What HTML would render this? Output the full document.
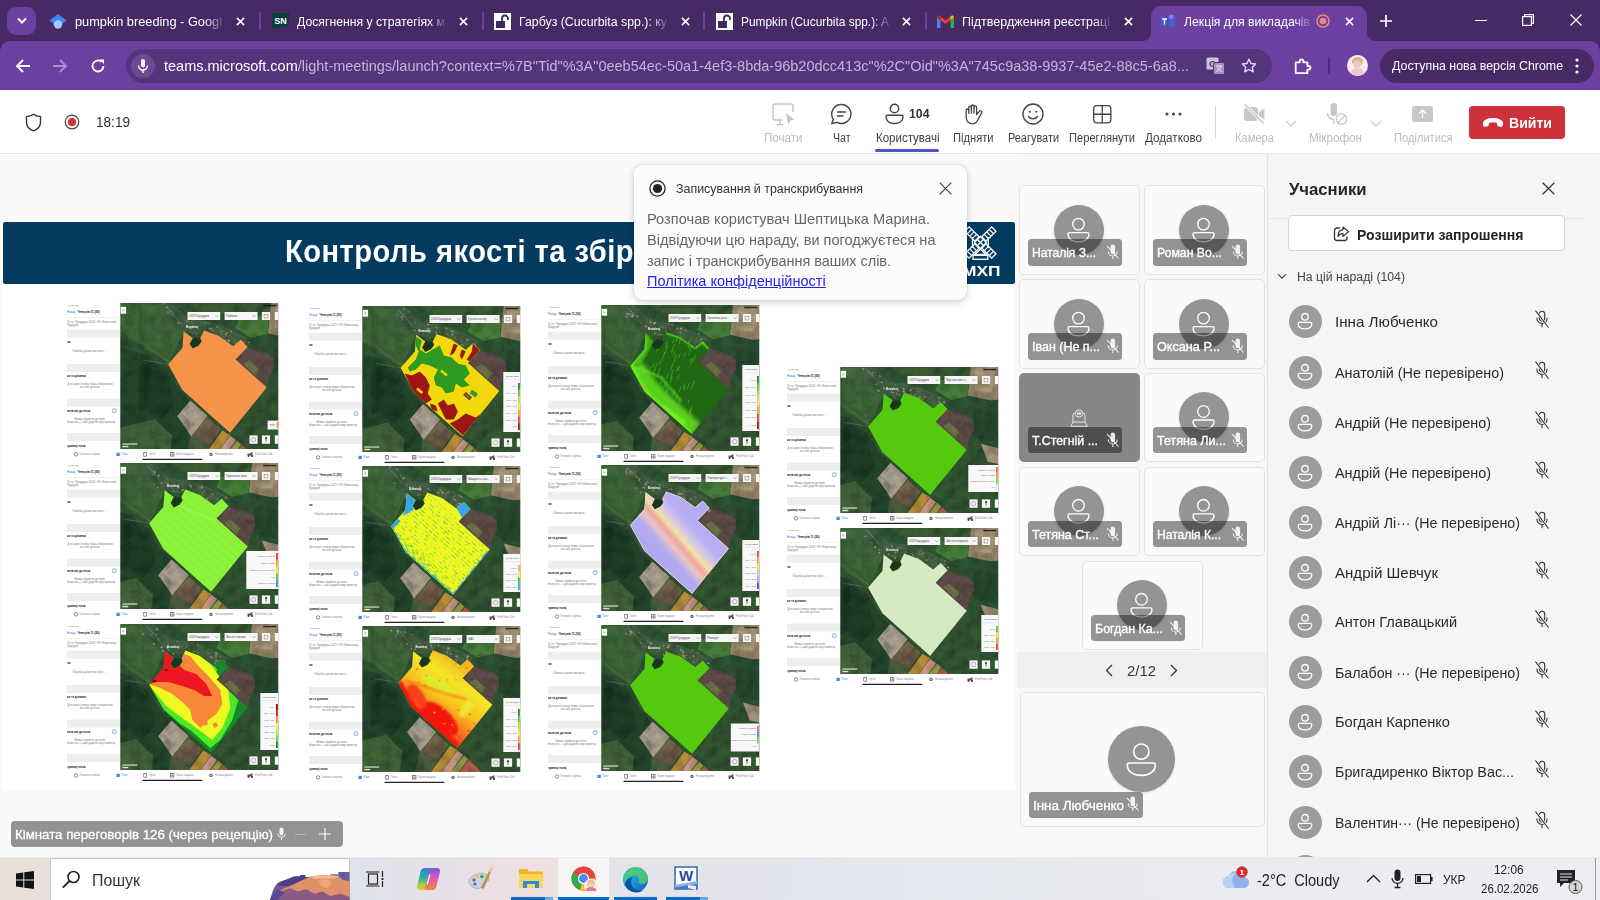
<!DOCTYPE html>
<html lang="uk">
<head>
<meta charset="utf-8">
<title>Лекція для викладачів</title>
<style>
*{box-sizing:border-box;margin:0;padding:0}
html,body{width:1600px;height:900px;overflow:hidden;background:#fafafa;font-family:"Liberation Sans",sans-serif;}
.a{position:absolute}
.t{position:absolute;white-space:nowrap;line-height:1;transform-origin:0 50%}
svg{position:absolute;overflow:visible}
svg svg{overflow:hidden}
/* ---------- browser chrome ---------- */
#tabbar{left:0;top:0;width:1600px;height:60px;background:#472965}
#toolbar{left:0;top:41px;width:1600px;height:50px;background:#6c40a1;border-radius:10px 10px 0 0}
#acttab{left:1151px;top:6px;width:216px;height:37px;background:#6c40a1;border-radius:10px 10px 0 0}
.tabt{font-size:13.5px;color:#fff;top:15px}
.tsep{width:2px;height:18px;top:12px;background:#6c40a1;border-radius:1px}
#omni{left:126px;top:49px;width:1146px;height:34px;border-radius:17px;background:#54347b}
#upd{left:1380px;top:48.5px;width:214px;height:34px;border-radius:17px;background:#472965}
/* ---------- teams header ---------- */
#thead{left:0;top:90px;width:1600px;height:64px;background:#fff;border-bottom:1px solid #e6e6e6}
.hl{font-size:12px;color:#424242;top:132px}
.hl.dim{color:#bdbdbd}
/* ---------- main ---------- */
#slide{left:2px;top:221px;width:1013px;height:569px;background:#fff}
#banner{left:2.5px;top:221.6px;width:1012px;height:62.2px;background:#033a60;border-radius:2px}
#rpanel{left:1267px;top:154px;width:333px;height:704px;background:#f5f5f5;border-left:1px solid #e2e2e2}
/* ---------- taskbar ---------- */
#taskbar{left:0;top:857px;width:1600px;height:43px;background:#e9ebf1}
</style>
<style id="fitcss">
#tb1{transform:scaleX(0.9463)}
#tb2{transform:scaleX(0.9055)}
#tb3{transform:scaleX(0.9133)}
#tb4{transform:scaleX(0.8805)}
#tb5{transform:scaleX(0.9281)}
#tb6{transform:scaleX(0.9042)}
#url{transform:scaleX(0.9667)}
#updt{transform:scaleX(0.9156)}
#h_time{transform:scaleX(0.9701)}
#h1{transform:scaleX(0.9648)}
#h2{transform:scaleX(0.8791)}
#h3{transform:scaleX(0.9585)}
#h3n{transform:scaleX(0.9446)}
#h4{transform:scaleX(0.9284)}
#h5{transform:scaleX(0.9097)}
#h6{transform:scaleX(0.9284)}
#h7{transform:scaleX(0.9733)}
#h8{transform:scaleX(0.9300)}
#h9{transform:scaleX(0.9736)}
#h10{transform:scaleX(0.9270)}
#h_leave{transform:scaleX(0.9380)}
#rp_title{transform:scaleX(1.0418)}
#rp_btn{transform:scaleX(1.0044)}
#rp_sec{transform:scaleX(1.0196)}
#rp_n0{transform:scaleX(1.0103)}
#rp_n1{transform:scaleX(0.9562)}
#rp_n2{transform:scaleX(0.9608)}
#rp_n3{transform:scaleX(0.9608)}
#rp_n4{transform:scaleX(0.9502)}
#rp_n5{transform:scaleX(1.0046)}
#rp_n6{transform:scaleX(0.9680)}
#rp_n7{transform:scaleX(0.9491)}
#rp_n8{transform:scaleX(0.9764)}
#rp_n9{transform:scaleX(0.9553)}
#rp_n10{transform:scaleX(0.9366)}
#tl0{transform:scaleX(0.9250)}
#tl1{transform:scaleX(0.9416)}
#tl2{transform:scaleX(0.9601)}
#tl3{transform:scaleX(0.9730)}
#tl4{transform:scaleX(0.9557)}
#tl5{transform:scaleX(0.9629)}
#tl6{transform:scaleX(0.9604)}
#tl7{transform:scaleX(0.9288)}
#tl8{transform:scaleX(0.9554)}
#pager{transform:scaleX(0.9930)}
#tlbig{transform:scaleX(1.0299)}
#tk_search{transform:scaleX(0.9366)}
#tk_w{transform:scaleX(0.9078)}
#tk_lang{transform:scaleX(0.9945)}
#tk_time{transform:scaleX(0.9431)}
#tk_date{transform:scaleX(0.9191)}
#rc_t{transform:scaleX(1.0196)}
#pp_t{transform:scaleX(0.9561)}
#pp_l1{transform:scaleX(0.9750)}
#pp_l2{transform:scaleX(0.9712)}
#pp_l3{transform:scaleX(0.9598)}
#pp_l4{transform:scaleX(0.9682)}
#sl_title{transform:scaleX(0.9395)}
#sl_title2{transform:scaleX(0.9317)}
#sl_logo{transform:scaleX(1.1195)}
</style>

</head>
<body>
<!-- ================= BROWSER CHROME ================= -->
<div class="a" id="tabbar"></div>
<div class="a" id="acttab"></div>
<div class="a" id="toolbar"></div>
<div class="a" id="omni"></div>
<div class="a" id="upd"></div>
<!-- tab search button -->
<div class="a" style="left:7px;top:7px;width:28.5px;height:28px;border-radius:9px;background:#6c40a1"></div>
<svg style="left:15px;top:15px" width="14" height="12" viewBox="0 0 14 12"><path d="M3 3.5 L7 7.5 L11 3.5" fill="none" stroke="#fff" stroke-width="2"/></svg>
<!-- tab 1 -->
<svg style="left:49px;top:13px" width="18" height="18" viewBox="0 0 18 18"><path d="M9 1 L17.5 7.5 L9 14 L0.5 7.5Z" fill="#4285f4"/><circle cx="9" cy="11.5" r="4.2" fill="#a8c7fa"/></svg>
<div class="t tabt" id="tb1" style="left:75px">pumpkin breeding - Googl</div>
<svg class="tx" style="left:235.5px;top:16.5px" width="9" height="9" viewBox="0 0 10 10"><path d="M1 1L9 9M9 1L1 9" stroke="#fff" stroke-width="1.7"/></svg>
<div class="a tsep" style="left:259px"></div>
<!-- tab 2 -->
<svg style="left:272px;top:13px" width="17" height="16" viewBox="0 0 17 16"><path d="M0 0H17V13L0 16Z" fill="#0f3b3f"/><text x="8.5" y="11" font-size="9" font-weight="700" fill="#fff" text-anchor="middle" font-family="Liberation Sans, sans-serif">SN</text></svg>
<div class="t tabt" id="tb2" style="left:297px">Досягнення у стратегіях м</div>
<svg class="tx" style="left:458.5px;top:16.5px" width="9" height="9" viewBox="0 0 10 10"><path d="M1 1L9 9M9 1L1 9" stroke="#fff" stroke-width="1.7"/></svg>
<div class="a tsep" style="left:482px"></div>
<!-- tab 3 -->
<svg style="left:494px;top:13px" width="17" height="17" viewBox="0 0 17 17"><rect x="0" y="0" width="17" height="17" fill="#fff"/><rect x="2" y="8" width="9" height="7" fill="#3a2a57"/><path d="M8 8V5.5A3 3 0 0 1 14 5.500V7" fill="none" stroke="#3a2a57" stroke-width="1.8"/></svg>
<div class="t tabt" id="tb3" style="left:519px">Гарбуз (Cucurbita spp.): ку</div>
<svg class="tx" style="left:680.5px;top:16.5px" width="9" height="9" viewBox="0 0 10 10"><path d="M1 1L9 9M9 1L1 9" stroke="#fff" stroke-width="1.7"/></svg>
<div class="a tsep" style="left:703px"></div>
<!-- tab 4 -->
<svg style="left:716px;top:13px" width="17" height="17" viewBox="0 0 17 17"><rect x="0" y="0" width="17" height="17" fill="#fff"/><rect x="2" y="8" width="9" height="7" fill="#3a2a57"/><path d="M8 8V5.5A3 3 0 0 1 14 5.500V7" fill="none" stroke="#3a2a57" stroke-width="1.8"/></svg>
<div class="t tabt" id="tb4" style="left:741px">Pumpkin (Cucurbita spp.): A</div>
<svg class="tx" style="left:901.5px;top:16.5px" width="9" height="9" viewBox="0 0 10 10"><path d="M1 1L9 9M9 1L1 9" stroke="#fff" stroke-width="1.7"/></svg>
<div class="a tsep" style="left:925px"></div>
<!-- tab 5 gmail -->
<svg style="left:937px;top:15px" width="17" height="13" viewBox="0 0 17 13"><path d="M0 2V13H3.500V5.500Z" fill="#4285f4"/><path d="M17 2V13H13.500V5.500Z" fill="#34a853"/><path d="M0 2 L1.800 0.300 L8.500 5.500 L15.200 0.300 L17 2 L8.500 9Z" fill="#ea4335"/><path d="M13.500 5.500L17 2 15.200 0.300 13.500 1.600Z" fill="#fbbc04"/><path d="M3.500 5.500L0 2 1.800 0.300 3.500 1.600Z" fill="#c5221f"/></svg>
<div class="t tabt" id="tb5" style="left:962px">Підтвердження реєстраці</div>
<svg class="tx" style="left:1123.5px;top:16.5px" width="9" height="9" viewBox="0 0 10 10"><path d="M1 1L9 9M9 1L1 9" stroke="#fff" stroke-width="1.7"/></svg>
<!-- active tab -->
<svg style="left:1159px;top:13px" width="18" height="17" viewBox="0 0 18 17"><circle cx="12.500" cy="4" r="2.600" fill="#7b83eb"/><rect x="8" y="6" width="8.500" height="8" rx="2" fill="#5059c9"/><circle cx="15.500" cy="5" r="1.700" fill="#5059c9"/><rect x="0.500" y="3.500" width="10" height="10" rx="1.500" fill="#4b53bc"/><path d="M3 6H8M5.500 6V11.500" stroke="#fff" stroke-width="1.400"/></svg>
<div class="t tabt" id="tb6" style="left:1184px">Лекція для викладачів</div>
<svg style="left:1316px;top:14px" width="14" height="14" viewBox="0 0 14 14"><circle cx="7" cy="7" r="6" fill="none" stroke="#f08a80" stroke-width="1.500"/><circle cx="7" cy="7" r="3.300" fill="#f08a80"/></svg>
<svg class="tx" style="left:1344.5px;top:16.5px" width="9" height="9" viewBox="0 0 10 10"><path d="M1 1L9 9M9 1L1 9" stroke="#fff" stroke-width="1.700"/></svg>
<!-- new tab + window controls -->
<svg style="left:1380px;top:15px" width="12" height="12" viewBox="0 0 12 12"><path d="M6 0V12M0 6H12" stroke="#fff" stroke-width="1.700"/></svg>
<svg style="left:1475px;top:20px" width="12" height="2" viewBox="0 0 12 2"><path d="M0 0.500H12" stroke="#fff" stroke-width="1"/></svg>
<svg style="left:1522px;top:14px" width="12" height="12" viewBox="0 0 12 12"><rect x="0.600" y="2.600" width="8.800" height="8.800" fill="none" stroke="#fff" stroke-width="1.200"/><path d="M2.600 2.600V0.600H11.400V9.400H9.400" fill="none" stroke="#fff" stroke-width="1.200"/></svg>
<svg style="left:1570px;top:14px" width="12" height="12" viewBox="0 0 12 12"><path d="M0.500 0.500L11.500 11.500M11.500 0.500L0.500 11.500" stroke="#fff" stroke-width="1.200"/></svg>
<!-- fade masks on tab titles -->
<div class="a" style="left:205px;top:10px;width:20px;height:24px;background:linear-gradient(90deg,rgba(71,41,101,0),#472965)"></div>
<div class="a" style="left:428px;top:10px;width:20px;height:24px;background:linear-gradient(90deg,rgba(71,41,101,0),#472965)"></div>
<div class="a" style="left:650px;top:10px;width:20px;height:24px;background:linear-gradient(90deg,rgba(71,41,101,0),#472965)"></div>
<div class="a" style="left:872px;top:10px;width:20px;height:24px;background:linear-gradient(90deg,rgba(71,41,101,0),#472965)"></div>
<div class="a" style="left:1093px;top:10px;width:20px;height:24px;background:linear-gradient(90deg,rgba(71,41,101,0),#472965)"></div>
<div class="a" style="left:1293px;top:10px;width:20px;height:24px;background:linear-gradient(90deg,rgba(108,64,161,0),#6c40a1)"></div>
<div class="a" style="left:1143px;top:33px;width:8px;height:8px;background:radial-gradient(circle at 0 0,rgba(108,64,161,0) 7.500px,#6c40a1 8.200px)"></div>
<div class="a" style="left:1367px;top:33px;width:8px;height:8px;background:radial-gradient(circle at 100% 0,rgba(108,64,161,0) 7.500px,#6c40a1 8.200px)"></div>

<!-- nav icons -->
<svg style="left:15px;top:58px" width="16" height="16" viewBox="0 0 16 16"><path d="M15 8H2M8 2L2 8L8 14" fill="none" stroke="#fff" stroke-width="1.800"/></svg>
<svg style="left:52px;top:58px" width="16" height="16" viewBox="0 0 16 16"><path d="M1 8H14M8 2L14 8L8 14" fill="none" stroke="#a88fc9" stroke-width="1.800"/></svg>
<svg style="left:90px;top:58px" width="16" height="16" viewBox="0 0 16 16"><path d="M13.500 8A5.500 5.500 0 1 1 11.600 3.800" fill="none" stroke="#fff" stroke-width="1.800"/><path d="M9.500 1.500H14V6Z" fill="#fff"/></svg>
<!-- omnibox mic chip -->
<div class="a" style="left:131px;top:54px;width:24px;height:24px;border-radius:12px;background:#6b4a93"></div>
<svg style="left:137px;top:58px" width="12" height="16" viewBox="0 0 12 16"><rect x="4" y="1" width="4" height="8.500" rx="2" fill="#fff"/><path d="M1.500 7.500A4.500 4.500 0 0 0 10.500 7.500M6 12V15" fill="none" stroke="#fff" stroke-width="1.400"/></svg>
<div class="t" id="url" style="left:164px;top:58px;font-size:15px;color:#fff">teams.microsoft.com<span style="color:#c5b3dc">/light-meetings/launch?context=%7B"Tid"%3A"0eeb54ec-50a1-4ef3-8bda-96b20dcc413c"%2C"Oid"%3A"745c9a38-9937-45e2-88c5-6a8...</span></div>
<!-- translate icon -->
<svg style="left:1206px;top:57px" width="19" height="18" viewBox="0 0 19 18"><rect x="0.500" y="0.500" width="12" height="12" rx="1.500" fill="#cdc2de"/><text x="6.500" y="10" font-size="9" font-weight="700" fill="#54347b" text-anchor="middle" font-family="Liberation Sans, sans-serif">G</text><rect x="7.500" y="5.500" width="11" height="12" rx="1.500" fill="#a593c2" stroke="#54347b" stroke-width="1"/><path d="M10 9H16M13 8V9M15 9C14.500 12 12 14 10.500 14.500M11.500 10.500C12.500 13 14.500 14 16 14.500" fill="none" stroke="#e9e0f5" stroke-width="1"/></svg>
<!-- star -->
<svg style="left:1241px;top:58px" width="16" height="15" viewBox="0 0 18 17"><path d="M9 1.300L11.300 6.200L16.600 6.800L12.700 10.400L13.800 15.700L9 13L4.200 15.700L5.300 10.400L1.400 6.800L6.700 6.200Z" fill="none" stroke="#e4dbf0" stroke-width="1.500" stroke-linejoin="round"/></svg>
<!-- extensions -->
<svg style="left:1293px;top:56.500px" width="18" height="18" viewBox="0 0 20 20"><path d="M3 6H7.500V4.700A2 2 0 0 1 11.500 4.700V6H16V10H17.300A2 2 0 0 1 17.300 14H16V18H3Z" fill="none" stroke="#fff" stroke-width="2" stroke-linejoin="round"/></svg>
<div class="a" style="left:1328px;top:57px;width:2px;height:17px;background:#4c2e74;border-radius:1px"></div>
<!-- avatar -->
<div class="a" style="left:1346.500px;top:55px;width:21px;height:21px;border-radius:50%;background:#f6f1ef;overflow:hidden"><div class="a" style="left:5px;top:2px;width:11px;height:9px;border-radius:50%;background:#d9b383"></div><div class="a" style="left:6.500px;top:4.500px;width:8px;height:8px;border-radius:50%;background:#efc9b8"></div><div class="a" style="left:3px;top:12.500px;width:15px;height:11px;border-radius:7px 7px 0 0;background:#efc6d3"></div></div>
<div class="t" id="updt" style="left:1392px;top:59px;font-size:13.500px;color:#fff">Доступна нова версія Chrome</div>
<svg style="left:1575px;top:57px" width="4" height="18" viewBox="0 0 4 18"><circle cx="2" cy="3" r="1.600" fill="#fff"/><circle cx="2" cy="9" r="1.600" fill="#fff"/><circle cx="2" cy="15" r="1.600" fill="#fff"/></svg>

<!-- ================= TEAMS HEADER ================= -->
<div class="a" id="thead"></div>
<!-- left status -->
<svg style="left:25px;top:113px" width="17" height="19" viewBox="0 0 17 19"><path d="M8.500 1.200C6.500 2.800 4 3.500 1.500 3.600V9C1.500 13.500 4.500 16.500 8.500 17.800C12.500 16.500 15.500 13.500 15.500 9V3.600C13 3.500 10.500 2.800 8.500 1.200Z" fill="none" stroke="#333" stroke-width="1.400" stroke-linejoin="round"/></svg>
<svg style="left:64px;top:114px" width="16" height="16" viewBox="0 0 16 16"><circle cx="8" cy="8" r="6.800" fill="none" stroke="#444" stroke-width="1.200"/><circle cx="8" cy="8" r="4.200" fill="#d13438"/></svg>
<div class="t" id="h_time" style="left:96px;top:115px;font-size:14px;color:#333">18:19</div>
<!-- Почати -->
<svg style="left:772px;top:103px" width="24" height="23" viewBox="0 0 24 23"><path d="M11 17H3A2 2 0 0 1 1 15V3A2 2 0 0 1 3 1H19A2 2 0 0 1 21 3V9" fill="none" stroke="#c4c4c4" stroke-width="1.400"/><path d="M5 21.500H11M8 17.500V21" stroke="#c4c4c4" stroke-width="1.400"/><path d="M14 10L22.500 17L18.300 17.500L16.300 21.500Z" fill="#c4c4c4"/></svg>
<div class="t hl dim" id="h1" style="left:763.500px">Почати</div>
<!-- Чат -->
<svg style="left:830px;top:103px" width="23" height="23" viewBox="0 0 23 23"><path d="M11.500 1.500A9.500 9.500 0 1 1 6.800 19.300L1.800 20.700L3.300 16.200A9.500 9.500 0 0 1 11.500 1.500Z" fill="none" stroke="#424242" stroke-width="1.400" stroke-linejoin="round"/><path d="M7.500 9H15.500M7.500 13H13" stroke="#424242" stroke-width="1.400" stroke-linecap="round"/></svg>
<div class="t hl" id="h2" style="left:832.500px">Чат</div>
<!-- Користувачі -->
<svg style="left:885px;top:103px" width="19" height="22" viewBox="0 0 19 22"><circle cx="9.500" cy="5.500" r="4.200" fill="none" stroke="#424242" stroke-width="1.400"/><path d="M1 13.800A1.500 1.500 0 0 1 2.500 12.300H16.500A1.500 1.500 0 0 1 18 13.800C18 18 14.500 20.500 9.500 20.500S1 18 1 13.800Z" fill="none" stroke="#424242" stroke-width="1.400"/></svg>
<div class="t" id="h3n" style="left:909px;top:107px;font-size:13px;font-weight:700;color:#333">104</div>
<div class="t hl" id="h3" style="left:875.500px">Користувачі</div>
<div class="a" style="left:875px;top:149px;width:64px;height:3px;border-radius:1.500px;background:#4f52c9"></div>
<!-- Підняти -->
<svg style="left:964.500px;top:103.500px" width="18" height="21" viewBox="0 0 18 21"><path d="M1.200 13V6.300A1.300 1.300 0 0 1 3.800 6.300V3.400A1.300 1.300 0 0 1 6.400 3.400V2.300A1.300 1.300 0 0 1 9 2.300V3.200A1.300 1.300 0 0 1 11.600 3.200V10.500L14.300 7.300A1.400 1.400 0 0 1 16.600 8.900L12.500 16.500C11.500 18.600 9.800 19.800 7.300 19.800C3.800 19.800 1.200 17.200 1.200 13Z" fill="none" stroke="#424242" stroke-width="1.300" stroke-linejoin="round"/><path d="M3.800 6.300V10M6.400 3.400V9.500M9 3V9.500" stroke="#424242" stroke-width="1.300"/></svg>
<div class="t hl" id="h4" style="left:953px">Підняти</div>
<!-- Реагувати -->
<svg style="left:1022px;top:103px" width="22" height="22" viewBox="0 0 22 22"><circle cx="11" cy="11" r="10" fill="none" stroke="#424242" stroke-width="1.400"/><circle cx="7.700" cy="8.700" r="1.050" fill="#424242"/><circle cx="14.300" cy="8.700" r="1.050" fill="#424242"/><path d="M6.500 13.500C8.500 16.500 13.500 16.500 15.500 13.500" fill="none" stroke="#424242" stroke-width="1.400" stroke-linecap="round"/></svg>
<div class="t hl" id="h5" style="left:1007.500px">Реагувати</div>
<!-- Переглянути -->
<svg style="left:1093px;top:105px" width="18.500" height="18.500" viewBox="0 0 20 20"><rect x="0.700" y="0.700" width="18.600" height="18.600" rx="3.500" fill="none" stroke="#424242" stroke-width="1.400"/><path d="M10 0.700V19.300M0.700 10H19.300" stroke="#424242" stroke-width="1.400"/></svg>
<div class="t hl" id="h6" style="left:1069px">Переглянути</div>
<!-- Додатково -->
<svg style="left:1165px;top:112px" width="17" height="4" viewBox="0 0 17 4"><circle cx="2" cy="2" r="1.500" fill="#424242"/><circle cx="8.500" cy="2" r="1.500" fill="#424242"/><circle cx="15" cy="2" r="1.500" fill="#424242"/></svg>
<div class="t hl" id="h7" style="left:1145px">Додатково</div>
<div class="a" style="left:1215px;top:106px;width:1px;height:33px;background:#d6d6d6"></div>
<!-- Камера -->
<svg style="left:1243px;top:103px" width="23" height="22" viewBox="0 0 23 22"><rect x="1" y="4" width="14" height="14" rx="3" fill="#c8c8c8"/><path d="M16 9L21.500 5.500V16.500L16 13Z" fill="#c8c8c8"/><path d="M1.500 1L21 21" stroke="#fff" stroke-width="3.200"/><path d="M1.500 1L21 21" stroke="#c8c8c8" stroke-width="1.300"/></svg>
<div class="t hl dim" id="h8" style="left:1234.500px">Камера</div>
<svg style="left:1285px;top:120px" width="12" height="7" viewBox="0 0 12 7"><path d="M1 1L6 6L11 1" fill="none" stroke="#c8c8c8" stroke-width="1.200"/></svg>
<!-- Мікрофон -->
<svg style="left:1326px;top:102px" width="23" height="24" viewBox="0 0 23 24"><rect x="4.500" y="1" width="6.500" height="13" rx="3.250" fill="#c8c8c8"/><path d="M1.500 11A6.200 6.200 0 0 0 8 17.500M7.800 17.500V22" fill="none" stroke="#c8c8c8" stroke-width="1.300"/><circle cx="15.500" cy="17" r="5.200" fill="#fff" stroke="#c8c8c8" stroke-width="1.300"/><path d="M12 20.500L19 13.500" stroke="#c8c8c8" stroke-width="1.300"/></svg>
<div class="t hl dim" id="h9" style="left:1309px">Мікрофон</div>
<svg style="left:1370px;top:120px" width="12" height="7" viewBox="0 0 12 7"><path d="M1 1L6 6L11 1" fill="none" stroke="#c8c8c8" stroke-width="1.200"/></svg>
<!-- Поділитися -->
<svg style="left:1412px;top:106px" width="21" height="16" viewBox="0 0 21 16"><rect x="0" y="0" width="21" height="16" rx="2.500" fill="#c8c8c8"/><path d="M10.500 12V4.500M7 7.500L10.500 4L14 7.500" fill="none" stroke="#fff" stroke-width="1.300"/></svg>
<div class="t hl dim" id="h10" style="left:1393.500px">Поділитися</div>
<!-- Вийти -->
<div class="a" style="left:1469px;top:106px;width:96px;height:33px;border-radius:4px;background:#cf313b"></div>
<svg style="left:1482px;top:117px" width="22" height="11" viewBox="0 0 22 11"><path d="M11 1C6 1 1.500 3 1 5.500C0.700 7.300 1 9 2 9.500C3 10 5.500 9.500 6.300 9C7 8.500 6.500 6.500 7.300 6C8.300 5.400 13.700 5.400 14.700 6C15.500 6.500 15 8.500 15.700 9C16.500 9.500 19 10 20 9.500C21 9 21.300 7.300 21 5.500C20.500 3 16 1 11 1Z" fill="#fff"/></svg>
<div class="t" id="h_leave" style="left:1509px;top:115px;font-size:15px;font-weight:700;color:#fff">Вийти</div>

<!-- ================= MAIN ================= -->
<div class="a" id="slide"></div>
<div class="a" id="banner"></div>
<div class="t" id="sl_title" style="left:285px;top:236px;font-size:31px;font-weight:700;color:#fff;letter-spacing:.5px">Контроль якості та збір</div>
<div class="t" id="sl_title2" style="left:641px;top:236px;font-size:31px;font-weight:700;color:#fff;letter-spacing:.5px">даних</div>
<svg style="left:962px;top:224px" width="40" height="56" viewBox="0 0 40 56">
<g fill="none" stroke="#fff" stroke-width="1.300">
<g transform="translate(18.400,18.500) rotate(45)"><rect x="-3" y="-19" width="6" height="14"/><path d="M-3 -15.500H3M-3 -12H3M-3 -8.500H3"/><rect x="-3" y="5" width="6" height="14"/><path d="M-3 8.500H3M-3 12H3M-3 15.500H3"/></g>
<g transform="translate(18.400,18.500) rotate(-45)"><rect x="-3" y="-19" width="6" height="14"/><path d="M-3 -15.500H3M-3 -12H3M-3 -8.500H3"/><rect x="-3" y="5" width="6" height="14"/><path d="M-3 8.500H3M-3 12H3M-3 15.500H3"/></g>
<path d="M18.400 12.500L24.400 18.500L18.400 24.500L12.400 18.500Z"/><path d="M15.400 15.500L21.400 21.500M21.400 15.500L15.400 21.500"/>
<path d="M18.400 25L24 30.500H12.800Z"/><rect x="11" y="31.300" width="14.800" height="4"/>
<path d="M10.500 13V24M26.300 13V24"/>
</g></svg>
<div class="t" id="sl_logo" style="left:962px;top:263px;font-size:15.500px;font-weight:700;color:#fff">МХП</div>
<svg width="0" height="0" style="left:0;top:0"><defs>
<filter id="b05" x="-5%" y="-5%" width="110%" height="110%"><feGaussianBlur stdDeviation="0.55"/></filter>
<filter id="b1" x="-5%" y="-5%" width="110%" height="110%"><feGaussianBlur stdDeviation="1.1"/></filter>
<filter id="b2" x="-10%" y="-10%" width="120%" height="120%"><feGaussianBlur stdDeviation="2.2"/></filter>
<filter id="nz" x="0" y="0" width="100%" height="100%"><feTurbulence type="fractalNoise" baseFrequency="0.09" numOctaves="3" seed="3" result="n"/><feColorMatrix in="n" type="matrix" values="0 0 0 0 0  0 0 0 0 0  0 0 0 0 0  0.9 0.9 0 0 -0.72"/></filter>
<filter id="nzl" x="0" y="0" width="100%" height="100%"><feTurbulence type="fractalNoise" baseFrequency="0.5" numOctaves="2" seed="9" result="n"/><feColorMatrix in="n" type="matrix" values="0 0 0 0 1  0 0 0 0 1  0 0 0 0 .8  0.8 0.8 0 0 -0.70"/></filter>
</defs></svg>
<svg style="left:67.2px;top:300.9px;overflow:hidden" width="212" height="162" viewBox="0 -2 212 162"><g font-family="Liberation Sans, sans-serif"><text x="0" y="2.9" font-size="2.3" fill="#555" font-weight="400" text-anchor="start">‹ 14:37 год.</text><text x="0" y="10.4" font-size="2.9" fill="#2a7ae8" font-weight="400" text-anchor="start">Назад</text><text x="10.6" y="10.4" font-size="2.9" fill="#111" font-weight="700" text-anchor="start">Чевгузів 11.(50)</text><rect x="0" y="14.200" width="53" height=".5" fill="#e2e2e2"/><text x="0" y="19.7" font-size="2.7" fill="#777" font-weight="400" text-anchor="start">11 га • Кукурудза 2023 • 871 Новоставці,</text><text x="0" y="22.8" font-size="2.7" fill="#777" font-weight="400" text-anchor="start">Кукурузи</text><rect x="0" y="26.7" width="53.300" height="8" fill="#eeeeee"/><rect x="0" y="61" width="53.300" height="8" fill="#eeeeee"/><rect x="0" y="95.6" width="53.300" height="8" fill="#eeeeee"/><rect x="0" y="130" width="53.300" height="8" fill="#eeeeee"/><text x="0" y="40.3" font-size="2.9" fill="#111" font-weight="700" text-anchor="start">ля</text><text x="22" y="48.6" font-size="2.7" fill="#777" font-weight="400" text-anchor="middle">Обробка даних про поля…</text><text x="0" y="74.3" font-size="2.9" fill="#111" font-weight="700" text-anchor="start">ки та ділянки</text><text x="23" y="82.4" font-size="2.7" fill="#777" font-weight="400" text-anchor="middle">Для цього сезону немає збережених</text><text x="23" y="85.4" font-size="2.7" fill="#777" font-weight="400" text-anchor="middle">зон або ділянок.</text><text x="0" y="108.7" font-size="2.9" fill="#111" font-weight="700" text-anchor="start">нотатки до поля</text><circle cx="47.200" cy="107.700" r="2.100" fill="#e8f1fc" stroke="#4a90e2" stroke-width=".6"/><text x="23" y="116.7" font-size="2.7" fill="#777" font-weight="400" text-anchor="middle">Немає приміток до поля.</text><text x="24" y="119.7" font-size="2.7" fill="#777" font-weight="400" text-anchor="middle">Натисніть +, щоб додати нову примітку.</text><text x="0" y="143.8" font-size="2.9" fill="#111" font-weight="700" text-anchor="start">границі поля</text></g><svg x="53.3" y="0" width="158" height="146" viewBox="0 0 158 146" overflow="hidden"><g transform="translate(19,1) scale(1)"><g filter="url(#b05)"><rect x="-30" y="-10" width="220" height="180" fill="#2d5232"/><polygon points="-30,-10 27,-10 45,27 29,60 -30,20" fill="#3a6334"/><polygon points="3,2 24,1 40,28 27,52 2,30" fill="#40683a"/><polygon points="-30,40 10,52 26,66 42,88 50,98 38,112 50,132 44,170 -30,170" fill="#21442c"/><polygon points="0,62 14,58 30,80 36,100 22,116 8,104 0,108" fill="#1c3b27"/><polygon points="-30,126 16,115 33,132 28,170 -30,170" fill="#3f6239"/><polygon points="2,64 10,60 14,70 6,78" fill="#143621"/><path d="M0 36L30 58M4 56L28 60" stroke="#6b7f58" stroke-width=".8" fill="none" opacity=".7"/><polygon points="28,-10 190,-10 190,12 100,14 64,8" fill="#375c31"/><polygon points="100,14 130,12 128,30 112,34 96,24" fill="#447a37"/><polygon points="133,-10 190,-10 190,30 151.900,34.400 128.700,29.300 130.400,12" fill="#95866a"/><polygon points="136,2 156,0 152,26 135,24" fill="#a8977a"/><polygon points="128,30 152,35 158,34 190,40 190,52 150,50 130,44" fill="#2b4e30"/><polygon points="135,44 190,52 190,78 142,74 132,68" fill="#26482d"/><polygon points="141.600,77.500 190,90 190,104 148.500,95.600" fill="#a3917a"/><polygon points="127.500,83.500 148,96 190,106 190,170 118,170 90.800,128.800" fill="#305532"/><polygon points="96.300,55.500 108.900,43.600 122.600,46.500 134.700,54.300 134.700,63.700 130.400,70.600 127.500,83.500" fill="#5d4b47"/><polygon points="104,60 110,56 120,66 116,72" fill="#6f7a45" opacity=".8"/><path d="M24 0L46 22L66 24L84 30L104 40" stroke="#3f5f40" stroke-width="14" fill="none" stroke-linejoin="round"/><rect x="47.0" y="24.7" width="1.3" height="1.6" fill="#a86e4c" opacity=".7" transform="rotate(35 47.0 24.7)"/><rect x="77.7" y="22.0" width="1.3" height="1.5" fill="#b8b09a" opacity=".7" transform="rotate(35 77.7 22.0)"/><rect x="30.9" y="12.6" width="1.4" height="1.3" fill="#4a6a44" opacity=".7" transform="rotate(35 30.9 12.6)"/><rect x="65.8" y="27.2" width="1.3" height="1.3" fill="#8e5e46" opacity=".7" transform="rotate(35 65.8 27.2)"/><rect x="89.7" y="29.4" width="1.4" height="1.4" fill="#4a6a44" opacity=".7" transform="rotate(35 89.7 29.4)"/><rect x="41.0" y="17.8" width="1.8" height="1.7" fill="#b0a480" opacity=".7" transform="rotate(35 41.0 17.8)"/><rect x="72.3" y="25.5" width="2.1" height="1.9" fill="#6a7a62" opacity=".7" transform="rotate(35 72.3 25.5)"/><rect x="71.5" y="23.3" width="2.5" height="1.8" fill="#b8b09a" opacity=".7" transform="rotate(35 71.5 23.3)"/><rect x="28.4" y="7.1" width="1.7" height="1.5" fill="#b8a058" opacity=".7" transform="rotate(35 28.4 7.1)"/><rect x="97.1" y="38.1" width="2.4" height="1.2" fill="#6a7a62" opacity=".7" transform="rotate(35 97.1 38.1)"/><rect x="66.2" y="17.5" width="2.1" height="1.9" fill="#a86e4c" opacity=".7" transform="rotate(35 66.2 17.5)"/><rect x="51.1" y="22.7" width="2.5" height="1.1" fill="#b0a480" opacity=".7" transform="rotate(35 51.1 22.7)"/><rect x="99.2" y="40.1" width="1.3" height="1.8" fill="#4a6a44" opacity=".7" transform="rotate(35 99.2 40.1)"/><rect x="74.1" y="25.1" width="2.3" height="2.1" fill="#a86e4c" opacity=".7" transform="rotate(35 74.1 25.1)"/><rect x="25.4" y="-2.7" width="1.4" height="1.1" fill="#5f7f50" opacity=".7" transform="rotate(35 25.4 -2.7)"/><rect x="31.8" y="9.9" width="2.6" height="1.1" fill="#6a7a62" opacity=".7" transform="rotate(35 31.8 9.9)"/><rect x="55.0" y="18.1" width="1.9" height="1.7" fill="#587850" opacity=".7" transform="rotate(35 55.0 18.1)"/><rect x="57.2" y="28.7" width="2.7" height="1.2" fill="#7a6248" opacity=".7" transform="rotate(35 57.2 28.7)"/><rect x="39.5" y="6.5" width="2.5" height="1.2" fill="#5f7f50" opacity=".7" transform="rotate(35 39.5 6.5)"/><rect x="23.2" y="-1.5" width="2.1" height="2.1" fill="#587850" opacity=".7" transform="rotate(35 23.2 -1.5)"/><rect x="99.0" y="36.5" width="2.4" height="1.5" fill="#4a6a44" opacity=".7" transform="rotate(35 99.0 36.5)"/><rect x="86.3" y="30.5" width="1.4" height="1.8" fill="#a08a58" opacity=".7" transform="rotate(35 86.3 30.5)"/><rect x="47.6" y="15.9" width="1.4" height="1.7" fill="#b0a480" opacity=".7" transform="rotate(35 47.6 15.9)"/><rect x="19.1" y="-5.6" width="1.8" height="1.0" fill="#b8b09a" opacity=".7" transform="rotate(35 19.1 -5.6)"/><rect x="69.3" y="23.3" width="1.8" height="1.4" fill="#b0a480" opacity=".7" transform="rotate(35 69.3 23.3)"/><rect x="34.0" y="16.8" width="2.0" height="1.4" fill="#7a6248" opacity=".7" transform="rotate(35 34.0 16.8)"/><rect x="30.8" y="5.7" width="2.5" height="1.2" fill="#a08a58" opacity=".7" transform="rotate(35 30.8 5.7)"/><rect x="48.4" y="16.1" width="2.3" height="2.1" fill="#8e5e46" opacity=".7" transform="rotate(35 48.4 16.1)"/><rect x="51.8" y="16.7" width="2.6" height="1.6" fill="#7a6248" opacity=".7" transform="rotate(35 51.8 16.7)"/><rect x="50.6" y="23.4" width="2.0" height="1.8" fill="#b8a058" opacity=".7" transform="rotate(35 50.6 23.4)"/><rect x="95.7" y="37.4" width="2.5" height="2.0" fill="#587850" opacity=".7" transform="rotate(35 95.7 37.4)"/><rect x="84.1" y="32.0" width="2.4" height="2.2" fill="#5f7f50" opacity=".7" transform="rotate(35 84.1 32.0)"/><rect x="59.5" y="25.2" width="1.8" height="2.0" fill="#587850" opacity=".7" transform="rotate(35 59.5 25.2)"/><rect x="109.4" y="37.6" width="1.6" height="1.3" fill="#b8b09a" opacity=".7" transform="rotate(35 109.4 37.6)"/><rect x="52.8" y="29.5" width="2.2" height="1.0" fill="#4a6a44" opacity=".7" transform="rotate(35 52.8 29.5)"/><rect x="55.5" y="27.4" width="1.4" height="1.5" fill="#587850" opacity=".7" transform="rotate(35 55.5 27.4)"/><rect x="83.7" y="25.5" width="2.5" height="1.4" fill="#587850" opacity=".7" transform="rotate(35 83.7 25.5)"/><rect x="56.3" y="29.4" width="2.4" height="1.2" fill="#7a6248" opacity=".7" transform="rotate(35 56.3 29.4)"/><rect x="27.7" y="1.9" width="2.2" height="1.7" fill="#b8a058" opacity=".7" transform="rotate(35 27.7 1.9)"/><rect x="104.6" y="37.1" width="2.1" height="1.2" fill="#a08a58" opacity=".7" transform="rotate(35 104.6 37.1)"/><rect x="91.1" y="26.4" width="2.4" height="1.2" fill="#b8b09a" opacity=".7" transform="rotate(35 91.1 26.4)"/><rect x="86.0" y="29.6" width="1.7" height="1.3" fill="#b8a058" opacity=".7" transform="rotate(35 86.0 29.6)"/><rect x="52.7" y="27.3" width="1.3" height="1.9" fill="#6a7a62" opacity=".7" transform="rotate(35 52.7 27.3)"/><rect x="82.1" y="28.1" width="2.5" height="2.1" fill="#7a6248" opacity=".7" transform="rotate(35 82.1 28.1)"/><rect x="68.6" y="18.0" width="1.9" height="1.2" fill="#a08a58" opacity=".7" transform="rotate(35 68.6 18.0)"/><rect x="81.2" y="26.0" width="2.2" height="1.1" fill="#a08a58" opacity=".7" transform="rotate(35 81.2 26.0)"/><rect x="52.3" y="23.4" width="2.5" height="1.1" fill="#8e5e46" opacity=".7" transform="rotate(35 52.3 23.4)"/><rect x="24.7" y="-1.4" width="1.4" height="1.5" fill="#a08a58" opacity=".7" transform="rotate(35 24.7 -1.4)"/><rect x="90.6" y="29.6" width="2.2" height="1.6" fill="#8e5e46" opacity=".7" transform="rotate(35 90.6 29.6)"/><rect x="38.4" y="17.7" width="2.5" height="1.6" fill="#b8b09a" opacity=".7" transform="rotate(35 38.4 17.7)"/><rect x="85.6" y="35.0" width="1.6" height="1.7" fill="#b8b09a" opacity=".7" transform="rotate(35 85.6 35.0)"/><rect x="86.1" y="28.3" width="1.9" height="1.1" fill="#b8b09a" opacity=".7" transform="rotate(35 86.1 28.3)"/><rect x="56.2" y="20.7" width="1.4" height="1.9" fill="#587850" opacity=".7" transform="rotate(35 56.2 20.7)"/><rect x="74.5" y="24.0" width="1.4" height="1.6" fill="#587850" opacity=".7" transform="rotate(35 74.5 24.0)"/><rect x="98.8" y="37.9" width="2.8" height="2.0" fill="#7a6248" opacity=".7" transform="rotate(35 98.8 37.9)"/><rect x="87.8" y="27.6" width="1.9" height="1.4" fill="#b0a480" opacity=".7" transform="rotate(35 87.8 27.6)"/><rect x="75.3" y="30.1" width="1.9" height="1.0" fill="#a86e4c" opacity=".7" transform="rotate(35 75.3 30.1)"/><rect x="64.4" y="30.9" width="1.4" height="2.1" fill="#b8b09a" opacity=".7" transform="rotate(35 64.4 30.9)"/><rect x="96.2" y="35.6" width="1.3" height="1.9" fill="#5f7f50" opacity=".7" transform="rotate(35 96.2 35.6)"/><rect x="88.9" y="35.1" width="2.3" height="2.1" fill="#c4bca8" opacity=".7" transform="rotate(35 88.9 35.1)"/><path d="M26 2L34 10L40 18" stroke="#8fb0c8" stroke-width=".7" fill="none" opacity=".7"/><polygon points="50.300,40 53.400,44.400 59.200,41.700 62.400,37.500 61,34.100 55,34" fill="#1d4023"/><polygon points="37.900,112 51.200,96.500 68.400,112 52,132.600 47.700,125.700" fill="#a89d8b"/><polygon points="44,110 52,101 60,110 52,120" fill="#b8ad9c"/><polygon points="52,132.600 68.400,113.700 81.300,124.900 71,141.200" fill="#6a5a44"/><polygon points="60,123 68.400,113.700 75,119.500 66,130" fill="#77684e"/><polygon points="68.400,112 69.200,109.400 90.800,128.800 83,126.600" fill="#2a5a26"/><polygon points="71,143 83,126.600 90.800,130.900 68.100,162 57,162" fill="#b88a38"/><polygon points="68.100,162 90.800,131.800 96.800,136 77.800,162" fill="#c99682"/><polygon points="77.800,162 97.700,136.400 102,140.400 86.200,162" fill="#9aa04a"/><polygon points="86.200,162 102.800,140.900 122,160 120,162" fill="#b05a48"/><polygon points="52,132.600 71,141.200 57,162 44,162 50,140" fill="#4a5a3c"/></g><rect x="-30" y="-10" width="220" height="180" filter="url(#nz)" opacity=".38"/><rect x="-30" y="-10" width="220" height="180" filter="url(#nzl)" opacity=".07"/><clipPath id="cpm0"><polygon points="44.3,27.2 53.4,34.1 50.3,40.0 53.4,44.4 59.2,41.7 62.4,37.5 61.0,34.1 64.9,26.4 79.6,31.9 93.9,42.2 101.4,35.7 108.3,43.1 96.3,55.5 127.5,83.5 90.8,128.8 69.2,109.4 43.1,86.1 28.8,60.3 43.1,43.9"/></clipPath><g clip-path="url(#cpm0)"><rect x="20" y="20" width="115" height="115" fill="#f6944c"/></g><text x="46.800" y="24.300" font-size="2.900" fill="#fff" font-weight="700" font-family="Liberation Sans, sans-serif" opacity=".92">Вовківці</text></g><rect x="0.300" y="3.800" width="5.500" height="6.900" fill="#fafafa"/><path d="M2.200 6.400l1.800 1.800m0 -1.800l-1.800 1.800" stroke="#777" stroke-width=".5"/><rect x="67.2" y="9" width="32.7" height="8" fill="#f6f6f6"/><text x="68.8" y="14" font-size="2.800" fill="#444" font-family="Liberation Sans, sans-serif">2023 Кукурудза</text><path d="M94.9 12.300l1.500 1.600l1.500 -1.600" stroke="#666" stroke-width=".5" fill="none"/><rect x="104.3" y="9" width="33" height="8" fill="#f6f6f6"/><text x="105.89999999999999" y="14" font-size="2.800" fill="#444" font-family="Liberation Sans, sans-serif">Глибина</text><path d="M132.3 12.300l1.500 1.600l1.500 -1.600" stroke="#666" stroke-width=".5" fill="none"/><rect x="141.600" y="9" width="8.200" height="8" fill="#f6f6f6"/><rect x="143.800" y="11.200" width="3.800" height="3.800" fill="none" stroke="#777" stroke-width=".5"/><rect x="154.500" y="9" width="4" height="8" fill="#f6f6f6"/><rect x="129.200" y="132.400" width="8.100" height="8.400" fill="#f6f6f6"/><circle cx="133.300" cy="136.600" r="2.200" fill="none" stroke="#666" stroke-width=".5"/><rect x="141.600" y="132.400" width="8.200" height="8.400" fill="#f6f6f6"/><path d="M145.700 134.300v4.600" stroke="#444" stroke-width=".7"/><rect x="144.700" y="134.300" width="2" height="1.800" fill="#444"/><rect x="154.500" y="132.400" width="4" height="8.400" fill="#f6f6f6"/><rect x="2" y="140.300" width="15" height="1.500" fill="#dfe6df" opacity=".75"/><rect x="2" y="142.800" width="6" height="1.500" fill="#fff" opacity=".8"/><rect x="143" y="1.800" width="13" height="1.500" fill="#111" opacity=".8"/><rect x="147.300" y="117.600" width="10.700" height="8.900" fill="#f8f8f8"/><rect x="149.500" y="121.300" width="5" height="1.200" fill="#999"/><rect x="156.300" y="119" width="1.700" height="6" fill="#f6944c"/></svg><g font-family="Liberation Sans, sans-serif"><circle cx="9" cy="151.400" r="1.700" fill="none" stroke="#444" stroke-width=".6"/><text x="12.5" y="152.300" font-size="2.600" fill="#858585">Головна сторінка</text><rect x="49.500" y="149.800" width="3.300" height="3.300" rx=".6" fill="#3a86e8"/><text x="54.3" y="152.300" font-size="2.600" fill="#3a86e8">Поле</text><rect x="76.800" y="149.600" width="2.600" height="3.600" fill="none" stroke="#444" stroke-width=".6"/><text x="82" y="152.300" font-size="2.600" fill="#858585">Звіти</text><rect x="103.600" y="149.700" width="3.400" height="3.400" fill="none" stroke="#444" stroke-width=".6"/><path d="M105.300 149.700v3.400M103.600 151.400h3.400" stroke="#444" stroke-width=".4"/><text x="109.3" y="152.300" font-size="2.600" fill="#858585">Карти завдань</text><circle cx="144" cy="151.400" r="1.700" fill="#555"/><circle cx="144" cy="151.400" r=".6" fill="#fff"/><text x="148" y="152.300" font-size="2.600" fill="#858585">Налаштування</text><path d="M180.500 152.500v-2h2.500l1 -1h1.500v3z" fill="#555"/><circle cx="181.500" cy="153" r=".9" fill="#333"/><circle cx="185" cy="153" r="1.100" fill="#333"/><text x="188" y="152.300" font-size="2.600" fill="#858585">Field View Cab</text><rect x="75.500" y="155.800" width="60" height="1.300" rx=".6" fill="#222"/></g></svg>
<svg style="left:309.3px;top:304px;overflow:hidden" width="212" height="162" viewBox="0 -2 212 162"><g font-family="Liberation Sans, sans-serif"><text x="0" y="2.9" font-size="2.3" fill="#555" font-weight="400" text-anchor="start">‹ 14:37 год.</text><text x="0" y="10.4" font-size="2.9" fill="#2a7ae8" font-weight="400" text-anchor="start">Назад</text><text x="10.6" y="10.4" font-size="2.9" fill="#111" font-weight="700" text-anchor="start">Чевгузів 11.(50)</text><rect x="0" y="14.200" width="53" height=".5" fill="#e2e2e2"/><text x="0" y="19.7" font-size="2.7" fill="#777" font-weight="400" text-anchor="start">11 га • Кукурудза 2023 • 871 Новоставці,</text><text x="0" y="22.8" font-size="2.7" fill="#777" font-weight="400" text-anchor="start">Кукурузи</text><rect x="0" y="26.7" width="53.300" height="8" fill="#eeeeee"/><rect x="0" y="61" width="53.300" height="8" fill="#eeeeee"/><rect x="0" y="95.6" width="53.300" height="8" fill="#eeeeee"/><rect x="0" y="130" width="53.300" height="8" fill="#eeeeee"/><text x="0" y="40.3" font-size="2.9" fill="#111" font-weight="700" text-anchor="start">ля</text><text x="22" y="48.6" font-size="2.7" fill="#777" font-weight="400" text-anchor="middle">Обробка даних про поля…</text><text x="0" y="74.3" font-size="2.9" fill="#111" font-weight="700" text-anchor="start">ки та ділянки</text><text x="23" y="82.4" font-size="2.7" fill="#777" font-weight="400" text-anchor="middle">Для цього сезону немає збережених</text><text x="23" y="85.4" font-size="2.7" fill="#777" font-weight="400" text-anchor="middle">зон або ділянок.</text><text x="0" y="108.7" font-size="2.9" fill="#111" font-weight="700" text-anchor="start">нотатки до поля</text><circle cx="47.200" cy="107.700" r="2.100" fill="#e8f1fc" stroke="#4a90e2" stroke-width=".6"/><text x="23" y="116.7" font-size="2.7" fill="#777" font-weight="400" text-anchor="middle">Немає приміток до поля.</text><text x="24" y="119.7" font-size="2.7" fill="#777" font-weight="400" text-anchor="middle">Натисніть +, щоб додати нову примітку.</text><text x="0" y="143.8" font-size="2.9" fill="#111" font-weight="700" text-anchor="start">границі поля</text></g><svg x="53.3" y="0" width="158" height="146" viewBox="0 0 158 146" overflow="hidden"><g transform="translate(9.5,1.5) scale(1)"><g filter="url(#b05)"><rect x="-30" y="-10" width="220" height="180" fill="#2d5232"/><polygon points="-30,-10 27,-10 45,27 29,60 -30,20" fill="#3a6334"/><polygon points="3,2 24,1 40,28 27,52 2,30" fill="#40683a"/><polygon points="-30,40 10,52 26,66 42,88 50,98 38,112 50,132 44,170 -30,170" fill="#21442c"/><polygon points="0,62 14,58 30,80 36,100 22,116 8,104 0,108" fill="#1c3b27"/><polygon points="-30,126 16,115 33,132 28,170 -30,170" fill="#3f6239"/><polygon points="2,64 10,60 14,70 6,78" fill="#143621"/><path d="M0 36L30 58M4 56L28 60" stroke="#6b7f58" stroke-width=".8" fill="none" opacity=".7"/><polygon points="28,-10 190,-10 190,12 100,14 64,8" fill="#375c31"/><polygon points="100,14 130,12 128,30 112,34 96,24" fill="#447a37"/><polygon points="133,-10 190,-10 190,30 151.900,34.400 128.700,29.300 130.400,12" fill="#95866a"/><polygon points="136,2 156,0 152,26 135,24" fill="#a8977a"/><polygon points="128,30 152,35 158,34 190,40 190,52 150,50 130,44" fill="#2b4e30"/><polygon points="135,44 190,52 190,78 142,74 132,68" fill="#26482d"/><polygon points="141.600,77.500 190,90 190,104 148.500,95.600" fill="#a3917a"/><polygon points="127.500,83.500 148,96 190,106 190,170 118,170 90.800,128.800" fill="#305532"/><polygon points="96.300,55.500 108.900,43.600 122.600,46.500 134.700,54.300 134.700,63.700 130.400,70.600 127.500,83.500" fill="#5d4b47"/><polygon points="104,60 110,56 120,66 116,72" fill="#6f7a45" opacity=".8"/><path d="M24 0L46 22L66 24L84 30L104 40" stroke="#3f5f40" stroke-width="14" fill="none" stroke-linejoin="round"/><rect x="43.0" y="14.1" width="2.3" height="1.1" fill="#a08a58" opacity=".7" transform="rotate(35 43.0 14.1)"/><rect x="83.5" y="37.5" width="1.6" height="1.0" fill="#b0a480" opacity=".7" transform="rotate(35 83.5 37.5)"/><rect x="82.3" y="37.1" width="1.3" height="2.0" fill="#6a7a62" opacity=".7" transform="rotate(35 82.3 37.1)"/><rect x="31.9" y="-0.1" width="2.7" height="1.7" fill="#a08a58" opacity=".7" transform="rotate(35 31.9 -0.1)"/><rect x="64.3" y="19.2" width="1.5" height="1.1" fill="#b8b09a" opacity=".7" transform="rotate(35 64.3 19.2)"/><rect x="100.4" y="37.7" width="1.5" height="1.5" fill="#4a6a44" opacity=".7" transform="rotate(35 100.4 37.7)"/><rect x="37.5" y="8.9" width="1.6" height="1.0" fill="#587850" opacity=".7" transform="rotate(35 37.5 8.9)"/><rect x="73.1" y="24.3" width="1.6" height="1.5" fill="#4a6a44" opacity=".7" transform="rotate(35 73.1 24.3)"/><rect x="88.6" y="32.7" width="2.5" height="1.5" fill="#8e5e46" opacity=".7" transform="rotate(35 88.6 32.7)"/><rect x="46.6" y="18.7" width="1.5" height="2.1" fill="#587850" opacity=".7" transform="rotate(35 46.6 18.7)"/><rect x="74.5" y="25.1" width="1.3" height="1.2" fill="#b0a480" opacity=".7" transform="rotate(35 74.5 25.1)"/><rect x="80.4" y="26.0" width="1.3" height="1.8" fill="#c4bca8" opacity=".7" transform="rotate(35 80.4 26.0)"/><rect x="96.0" y="31.8" width="1.6" height="1.4" fill="#6a7a62" opacity=".7" transform="rotate(35 96.0 31.8)"/><rect x="37.1" y="9.4" width="1.8" height="1.4" fill="#8e5e46" opacity=".7" transform="rotate(35 37.1 9.4)"/><rect x="45.4" y="27.9" width="1.5" height="1.2" fill="#a86e4c" opacity=".7" transform="rotate(35 45.4 27.9)"/><rect x="56.2" y="23.1" width="1.5" height="1.6" fill="#a08a58" opacity=".7" transform="rotate(35 56.2 23.1)"/><rect x="36.4" y="3.0" width="2.1" height="1.5" fill="#5f7f50" opacity=".7" transform="rotate(35 36.4 3.0)"/><rect x="46.6" y="23.6" width="2.0" height="1.9" fill="#4a6a44" opacity=".7" transform="rotate(35 46.6 23.6)"/><rect x="99.4" y="37.1" width="2.4" height="1.9" fill="#6a7a62" opacity=".7" transform="rotate(35 99.4 37.1)"/><rect x="40.3" y="15.2" width="1.3" height="2.0" fill="#8e5e46" opacity=".7" transform="rotate(35 40.3 15.2)"/><rect x="78.4" y="31.4" width="1.4" height="1.6" fill="#8e5e46" opacity=".7" transform="rotate(35 78.4 31.4)"/><rect x="75.3" y="18.9" width="2.3" height="2.0" fill="#587850" opacity=".7" transform="rotate(35 75.3 18.9)"/><rect x="81.9" y="24.6" width="1.2" height="1.2" fill="#a86e4c" opacity=".7" transform="rotate(35 81.9 24.6)"/><rect x="99.0" y="37.7" width="1.3" height="1.0" fill="#8e5e46" opacity=".7" transform="rotate(35 99.0 37.7)"/><rect x="78.9" y="21.4" width="2.5" height="1.9" fill="#8e5e46" opacity=".7" transform="rotate(35 78.9 21.4)"/><rect x="90.1" y="36.3" width="2.4" height="1.6" fill="#b0a480" opacity=".7" transform="rotate(35 90.1 36.3)"/><rect x="88.0" y="37.4" width="1.6" height="1.8" fill="#6a7a62" opacity=".7" transform="rotate(35 88.0 37.4)"/><rect x="63.9" y="23.7" width="2.3" height="1.9" fill="#b8a058" opacity=".7" transform="rotate(35 63.9 23.7)"/><rect x="71.3" y="28.6" width="1.7" height="1.8" fill="#587850" opacity=".7" transform="rotate(35 71.3 28.6)"/><rect x="51.3" y="15.6" width="1.3" height="1.3" fill="#4a6a44" opacity=".7" transform="rotate(35 51.3 15.6)"/><rect x="28.8" y="8.6" width="2.3" height="1.3" fill="#6a7a62" opacity=".7" transform="rotate(35 28.8 8.6)"/><rect x="58.0" y="29.2" width="1.5" height="2.2" fill="#6a7a62" opacity=".7" transform="rotate(35 58.0 29.2)"/><rect x="25.0" y="6.0" width="2.7" height="1.5" fill="#5f7f50" opacity=".7" transform="rotate(35 25.0 6.0)"/><rect x="62.8" y="29.1" width="1.3" height="1.1" fill="#587850" opacity=".7" transform="rotate(35 62.8 29.1)"/><rect x="74.1" y="19.4" width="2.5" height="1.6" fill="#b0a480" opacity=".7" transform="rotate(35 74.1 19.4)"/><rect x="76.9" y="34.4" width="2.0" height="1.0" fill="#a08a58" opacity=".7" transform="rotate(35 76.9 34.4)"/><rect x="102.5" y="36.7" width="2.4" height="1.5" fill="#c4bca8" opacity=".7" transform="rotate(35 102.5 36.7)"/><rect x="56.0" y="15.6" width="2.4" height="2.0" fill="#b0a480" opacity=".7" transform="rotate(35 56.0 15.6)"/><rect x="94.9" y="30.8" width="2.4" height="1.3" fill="#b0a480" opacity=".7" transform="rotate(35 94.9 30.8)"/><rect x="64.4" y="24.4" width="1.8" height="1.5" fill="#5f7f50" opacity=".7" transform="rotate(35 64.4 24.4)"/><rect x="89.3" y="27.9" width="2.3" height="1.8" fill="#7a6248" opacity=".7" transform="rotate(35 89.3 27.9)"/><rect x="42.7" y="22.1" width="1.5" height="1.4" fill="#c4bca8" opacity=".7" transform="rotate(35 42.7 22.1)"/><rect x="99.1" y="37.2" width="2.7" height="2.1" fill="#8e5e46" opacity=".7" transform="rotate(35 99.1 37.2)"/><rect x="36.0" y="24.0" width="1.9" height="1.7" fill="#7a6248" opacity=".7" transform="rotate(35 36.0 24.0)"/><rect x="73.4" y="21.2" width="2.7" height="1.2" fill="#6a7a62" opacity=".7" transform="rotate(35 73.4 21.2)"/><rect x="56.1" y="19.9" width="2.4" height="1.8" fill="#c4bca8" opacity=".7" transform="rotate(35 56.1 19.9)"/><rect x="74.4" y="28.5" width="1.8" height="1.2" fill="#7a6248" opacity=".7" transform="rotate(35 74.4 28.5)"/><rect x="30.6" y="11.0" width="2.1" height="1.5" fill="#a86e4c" opacity=".7" transform="rotate(35 30.6 11.0)"/><rect x="103.0" y="34.8" width="1.5" height="1.1" fill="#a86e4c" opacity=".7" transform="rotate(35 103.0 34.8)"/><rect x="67.5" y="23.5" width="2.5" height="1.2" fill="#a08a58" opacity=".7" transform="rotate(35 67.5 23.5)"/><rect x="82.8" y="28.8" width="2.0" height="1.5" fill="#a86e4c" opacity=".7" transform="rotate(35 82.8 28.8)"/><rect x="84.1" y="31.1" width="1.8" height="1.8" fill="#8e5e46" opacity=".7" transform="rotate(35 84.1 31.1)"/><rect x="80.4" y="23.1" width="1.6" height="1.3" fill="#c4bca8" opacity=".7" transform="rotate(35 80.4 23.1)"/><rect x="75.5" y="24.9" width="2.5" height="2.2" fill="#7a6248" opacity=".7" transform="rotate(35 75.5 24.9)"/><rect x="29.8" y="8.4" width="2.0" height="1.7" fill="#a08a58" opacity=".7" transform="rotate(35 29.8 8.4)"/><rect x="36.5" y="12.4" width="2.0" height="1.6" fill="#6a7a62" opacity=".7" transform="rotate(35 36.5 12.4)"/><rect x="40.4" y="17.0" width="2.0" height="1.8" fill="#587850" opacity=".7" transform="rotate(35 40.4 17.0)"/><rect x="85.3" y="34.4" width="1.3" height="1.9" fill="#a08a58" opacity=".7" transform="rotate(35 85.3 34.4)"/><rect x="82.8" y="37.2" width="2.2" height="1.4" fill="#7a6248" opacity=".7" transform="rotate(35 82.8 37.2)"/><rect x="75.5" y="26.2" width="2.4" height="1.1" fill="#5f7f50" opacity=".7" transform="rotate(35 75.5 26.2)"/><path d="M26 2L34 10L40 18" stroke="#8fb0c8" stroke-width=".7" fill="none" opacity=".7"/><polygon points="50.300,40 53.400,44.400 59.200,41.700 62.400,37.500 61,34.100 55,34" fill="#1d4023"/><polygon points="37.900,112 51.200,96.500 68.400,112 52,132.600 47.700,125.700" fill="#a89d8b"/><polygon points="44,110 52,101 60,110 52,120" fill="#b8ad9c"/><polygon points="52,132.600 68.400,113.700 81.300,124.900 71,141.200" fill="#6a5a44"/><polygon points="60,123 68.400,113.700 75,119.500 66,130" fill="#77684e"/><polygon points="68.400,112 69.200,109.400 90.800,128.800 83,126.600" fill="#2a5a26"/><polygon points="71,143 83,126.600 90.800,130.900 68.100,162 57,162" fill="#b88a38"/><polygon points="68.100,162 90.800,131.800 96.800,136 77.800,162" fill="#c99682"/><polygon points="77.800,162 97.700,136.400 102,140.400 86.200,162" fill="#9aa04a"/><polygon points="86.200,162 102.800,140.900 122,160 120,162" fill="#b05a48"/><polygon points="52,132.600 71,141.200 57,162 44,162 50,140" fill="#4a5a3c"/></g><rect x="-30" y="-10" width="220" height="180" filter="url(#nz)" opacity=".38"/><rect x="-30" y="-10" width="220" height="180" filter="url(#nzl)" opacity=".07"/><clipPath id="cpm1"><polygon points="44.3,27.2 53.4,34.1 50.3,40.0 53.4,44.4 59.2,41.7 62.4,37.5 61.0,34.1 64.9,26.4 79.6,31.9 93.9,42.2 101.4,35.7 108.3,43.1 96.3,55.5 127.5,83.5 90.8,128.8 69.2,109.4 43.1,86.1 28.8,60.3 43.1,43.9"/></clipPath><g clip-path="url(#cpm1)"><rect x="20" y="20" width="115" height="115" fill="#f3d90c"/><g filter="url(#b05)" fill="#2f9a20"><polygon points="44,29 50,33 48,42 54,46 61,42 68,38 72,48 80,50 86,56 94,58 98,66 92,72 98,78 90,80 84,76 82,84 74,86 70,80 64,78 62,70 66,62 58,58 50,56 44,62 38,64 36,60 44,52 47,44 44,38"/><polygon points="100,82 106,86 104,90 98,86"/></g><g filter="url(#b05)" fill="#9c1518"><polygon points="33,66 40,68 48,64 54,70 58,78 56,86 60,92 54,96 46,90 40,82"/><polygon points="66,96 72,92 76,98 82,96 86,104 82,112 74,112 70,104"/><polygon points="86,112 94,106 104,110 112,104 98,120 91,128 78,116"/><polygon points="82,36 86,38 82,46 78,48"/><polygon points="90,42 94,44 90,52 88,48"/><polygon points="101,36 108,43 98,54 95,52 100,44"/><polygon points="58,96 64,98 66,104 60,102"/></g><g fill="#f3d90c"><rect x="70" y="62" width="8" height="2.500" transform="rotate(40 70 62)"/><rect x="46" y="80" width="7" height="2.500" transform="rotate(40 46 80)"/></g><g transform="rotate(40 95 88)"><rect x="92" y="86" width="8" height="4" fill="#9c1518"/><rect x="93" y="87" width="6" height="2" fill="#2f9a20"/></g></g><text x="46.800" y="24.300" font-size="2.900" fill="#fff" font-weight="700" font-family="Liberation Sans, sans-serif" opacity=".92">Вовківці</text></g><rect x="0.300" y="3.800" width="5.500" height="6.900" fill="#fafafa"/><path d="M2.200 6.400l1.800 1.800m0 -1.800l-1.800 1.800" stroke="#777" stroke-width=".5"/><rect x="67.2" y="9" width="32.7" height="8" fill="#f6f6f6"/><text x="68.8" y="14" font-size="2.800" fill="#444" font-family="Liberation Sans, sans-serif">2023 Кукурудза</text><path d="M94.9 12.300l1.500 1.600l1.500 -1.600" stroke="#666" stroke-width=".5" fill="none"/><rect x="104.3" y="9" width="33" height="8" fill="#f6f6f6"/><text x="105.89999999999999" y="14" font-size="2.800" fill="#444" font-family="Liberation Sans, sans-serif">Густота посіву</text><path d="M132.3 12.300l1.500 1.600l1.500 -1.600" stroke="#666" stroke-width=".5" fill="none"/><rect x="141.600" y="9" width="8.200" height="8" fill="#f6f6f6"/><rect x="143.800" y="11.200" width="3.800" height="3.800" fill="none" stroke="#777" stroke-width=".5"/><rect x="154.500" y="9" width="4" height="8" fill="#f6f6f6"/><rect x="129.200" y="132.400" width="8.100" height="8.400" fill="#f6f6f6"/><circle cx="133.300" cy="136.600" r="2.200" fill="none" stroke="#666" stroke-width=".5"/><rect x="141.600" y="132.400" width="8.200" height="8.400" fill="#f6f6f6"/><path d="M145.700 134.300v4.600" stroke="#444" stroke-width=".7"/><rect x="144.700" y="134.300" width="2" height="1.800" fill="#444"/><rect x="154.500" y="132.400" width="4" height="8.400" fill="#f6f6f6"/><rect x="2" y="140.300" width="15" height="1.500" fill="#dfe6df" opacity=".75"/><rect x="2" y="142.800" width="6" height="1.500" fill="#fff" opacity=".8"/><rect x="143" y="1.800" width="13" height="1.500" fill="#111" opacity=".8"/><rect x="141" y="66" width="17" height="60" fill="#f8f8f8"/><text x="143.5" y="71.2" font-size="2.500" fill="#555" font-family="Liberation Sans, sans-serif">Редагувати</text><rect x="141" y="73.5" width="17" height=".5" fill="#ddd"/><rect x="155.7" y="77.0" width="1.800" height="6.8" fill="#1f8a2a"/><text x="154.8" y="81.2" font-size="2.300" fill="#666" text-anchor="end" font-family="Liberation Sans, sans-serif">&gt; 79,9</text><rect x="155.7" y="83.7" width="1.800" height="6.8" fill="#55c83a"/><text x="154.8" y="87.9" font-size="2.300" fill="#666" text-anchor="end" font-family="Liberation Sans, sans-serif">78,4 - 79,9</text><rect x="155.7" y="90.4" width="1.800" height="6.8" fill="#a8e048"/><text x="154.8" y="94.6" font-size="2.300" fill="#666" text-anchor="end" font-family="Liberation Sans, sans-serif">76,8 - 78,4</text><rect x="155.7" y="97.1" width="1.800" height="6.8" fill="#f2e23a"/><text x="154.8" y="101.3" font-size="2.300" fill="#666" text-anchor="end" font-family="Liberation Sans, sans-serif">75,2 - 76,8</text><rect x="155.7" y="103.9" width="1.800" height="6.8" fill="#f0a030"/><text x="154.8" y="108.0" font-size="2.300" fill="#666" text-anchor="end" font-family="Liberation Sans, sans-serif">73,6 - 75,2</text><rect x="155.7" y="110.6" width="1.800" height="6.8" fill="#e04a30"/><text x="154.8" y="114.7" font-size="2.300" fill="#666" text-anchor="end" font-family="Liberation Sans, sans-serif">72,1 - 73,6</text><rect x="155.7" y="117.3" width="1.800" height="6.8" fill="#a01a1a"/><text x="154.8" y="121.4" font-size="2.300" fill="#666" text-anchor="end" font-family="Liberation Sans, sans-serif">&lt; 72,1</text></svg><g font-family="Liberation Sans, sans-serif"><circle cx="9" cy="151.400" r="1.700" fill="none" stroke="#444" stroke-width=".6"/><text x="12.5" y="152.300" font-size="2.600" fill="#858585">Головна сторінка</text><rect x="49.500" y="149.800" width="3.300" height="3.300" rx=".6" fill="#3a86e8"/><text x="54.3" y="152.300" font-size="2.600" fill="#3a86e8">Поле</text><rect x="76.800" y="149.600" width="2.600" height="3.600" fill="none" stroke="#444" stroke-width=".6"/><text x="82" y="152.300" font-size="2.600" fill="#858585">Звіти</text><rect x="103.600" y="149.700" width="3.400" height="3.400" fill="none" stroke="#444" stroke-width=".6"/><path d="M105.300 149.700v3.400M103.600 151.400h3.400" stroke="#444" stroke-width=".4"/><text x="109.3" y="152.300" font-size="2.600" fill="#858585">Карти завдань</text><circle cx="144" cy="151.400" r="1.700" fill="#555"/><circle cx="144" cy="151.400" r=".6" fill="#fff"/><text x="148" y="152.300" font-size="2.600" fill="#858585">Налаштування</text><path d="M180.500 152.500v-2h2.500l1 -1h1.500v3z" fill="#555"/><circle cx="181.500" cy="153" r=".9" fill="#333"/><circle cx="185" cy="153" r="1.100" fill="#333"/><text x="188" y="152.300" font-size="2.600" fill="#858585">Field View Cab</text><rect x="75.500" y="155.800" width="60" height="1.300" rx=".6" fill="#222"/></g></svg>
<svg style="left:548.4px;top:302.8px;overflow:hidden" width="212" height="162" viewBox="0 -2 212 162"><g font-family="Liberation Sans, sans-serif"><text x="0" y="2.9" font-size="2.3" fill="#555" font-weight="400" text-anchor="start">‹ 14:37 год.</text><text x="0" y="10.4" font-size="2.9" fill="#2a7ae8" font-weight="400" text-anchor="start">Назад</text><text x="10.6" y="10.4" font-size="2.9" fill="#111" font-weight="700" text-anchor="start">Чевгузів 11.(50)</text><rect x="0" y="14.200" width="53" height=".5" fill="#e2e2e2"/><text x="0" y="19.7" font-size="2.7" fill="#777" font-weight="400" text-anchor="start">11 га • Кукурудза 2023 • 871 Новоставці,</text><text x="0" y="22.8" font-size="2.7" fill="#777" font-weight="400" text-anchor="start">Кукурузи</text><rect x="0" y="26.7" width="53.300" height="8" fill="#eeeeee"/><rect x="0" y="61" width="53.300" height="8" fill="#eeeeee"/><rect x="0" y="95.6" width="53.300" height="8" fill="#eeeeee"/><rect x="0" y="130" width="53.300" height="8" fill="#eeeeee"/><text x="0" y="40.3" font-size="2.9" fill="#111" font-weight="700" text-anchor="start">ля</text><text x="22" y="48.6" font-size="2.7" fill="#777" font-weight="400" text-anchor="middle">Обробка даних про поля…</text><text x="0" y="74.3" font-size="2.9" fill="#111" font-weight="700" text-anchor="start">ки та ділянки</text><text x="23" y="82.4" font-size="2.7" fill="#777" font-weight="400" text-anchor="middle">Для цього сезону немає збережених</text><text x="23" y="85.4" font-size="2.7" fill="#777" font-weight="400" text-anchor="middle">зон або ділянок.</text><text x="0" y="108.7" font-size="2.9" fill="#111" font-weight="700" text-anchor="start">нотатки до поля</text><circle cx="47.200" cy="107.700" r="2.100" fill="#e8f1fc" stroke="#4a90e2" stroke-width=".6"/><text x="23" y="116.7" font-size="2.7" fill="#777" font-weight="400" text-anchor="middle">Немає приміток до поля.</text><text x="24" y="119.7" font-size="2.7" fill="#777" font-weight="400" text-anchor="middle">Натисніть +, щоб додати нову примітку.</text><text x="0" y="143.8" font-size="2.9" fill="#111" font-weight="700" text-anchor="start">границі поля</text></g><svg x="53.3" y="0" width="158" height="146" viewBox="0 0 158 146" overflow="hidden"><g transform="translate(0,0.5) scale(1)"><g filter="url(#b05)"><rect x="-30" y="-10" width="220" height="180" fill="#2d5232"/><polygon points="-30,-10 27,-10 45,27 29,60 -30,20" fill="#3a6334"/><polygon points="3,2 24,1 40,28 27,52 2,30" fill="#40683a"/><polygon points="-30,40 10,52 26,66 42,88 50,98 38,112 50,132 44,170 -30,170" fill="#21442c"/><polygon points="0,62 14,58 30,80 36,100 22,116 8,104 0,108" fill="#1c3b27"/><polygon points="-30,126 16,115 33,132 28,170 -30,170" fill="#3f6239"/><polygon points="2,64 10,60 14,70 6,78" fill="#143621"/><path d="M0 36L30 58M4 56L28 60" stroke="#6b7f58" stroke-width=".8" fill="none" opacity=".7"/><polygon points="28,-10 190,-10 190,12 100,14 64,8" fill="#375c31"/><polygon points="100,14 130,12 128,30 112,34 96,24" fill="#447a37"/><polygon points="133,-10 190,-10 190,30 151.900,34.400 128.700,29.300 130.400,12" fill="#95866a"/><polygon points="136,2 156,0 152,26 135,24" fill="#a8977a"/><polygon points="128,30 152,35 158,34 190,40 190,52 150,50 130,44" fill="#2b4e30"/><polygon points="135,44 190,52 190,78 142,74 132,68" fill="#26482d"/><polygon points="141.600,77.500 190,90 190,104 148.500,95.600" fill="#a3917a"/><polygon points="127.500,83.500 148,96 190,106 190,170 118,170 90.800,128.800" fill="#305532"/><polygon points="96.300,55.500 108.900,43.600 122.600,46.500 134.700,54.300 134.700,63.700 130.400,70.600 127.500,83.500" fill="#5d4b47"/><polygon points="104,60 110,56 120,66 116,72" fill="#6f7a45" opacity=".8"/><path d="M24 0L46 22L66 24L84 30L104 40" stroke="#3f5f40" stroke-width="14" fill="none" stroke-linejoin="round"/><rect x="68.9" y="23.0" width="1.6" height="1.7" fill="#a08a58" opacity=".7" transform="rotate(35 68.9 23.0)"/><rect x="75.6" y="21.8" width="1.7" height="2.0" fill="#b8b09a" opacity=".7" transform="rotate(35 75.6 21.8)"/><rect x="60.3" y="20.3" width="2.7" height="1.8" fill="#5f7f50" opacity=".7" transform="rotate(35 60.3 20.3)"/><rect x="24.6" y="10.3" width="2.2" height="1.1" fill="#b8b09a" opacity=".7" transform="rotate(35 24.6 10.3)"/><rect x="84.0" y="24.2" width="1.3" height="1.4" fill="#c4bca8" opacity=".7" transform="rotate(35 84.0 24.2)"/><rect x="53.5" y="16.0" width="1.7" height="2.0" fill="#b0a480" opacity=".7" transform="rotate(35 53.5 16.0)"/><rect x="48.6" y="15.4" width="2.5" height="1.3" fill="#b8b09a" opacity=".7" transform="rotate(35 48.6 15.4)"/><rect x="52.7" y="16.6" width="2.2" height="1.7" fill="#b8b09a" opacity=".7" transform="rotate(35 52.7 16.6)"/><rect x="70.5" y="17.7" width="2.2" height="2.1" fill="#a08a58" opacity=".7" transform="rotate(35 70.5 17.7)"/><rect x="49.4" y="13.7" width="1.3" height="1.1" fill="#c4bca8" opacity=".7" transform="rotate(35 49.4 13.7)"/><rect x="64.9" y="21.0" width="1.4" height="1.1" fill="#7a6248" opacity=".7" transform="rotate(35 64.9 21.0)"/><rect x="47.9" y="28.7" width="2.4" height="1.0" fill="#4a6a44" opacity=".7" transform="rotate(35 47.9 28.7)"/><rect x="87.0" y="36.2" width="1.9" height="1.1" fill="#b0a480" opacity=".7" transform="rotate(35 87.0 36.2)"/><rect x="46.3" y="28.6" width="1.4" height="2.2" fill="#b8b09a" opacity=".7" transform="rotate(35 46.3 28.6)"/><rect x="60.2" y="20.4" width="2.5" height="1.1" fill="#587850" opacity=".7" transform="rotate(35 60.2 20.4)"/><rect x="62.1" y="29.7" width="1.5" height="1.4" fill="#6a7a62" opacity=".7" transform="rotate(35 62.1 29.7)"/><rect x="25.4" y="7.0" width="2.4" height="1.0" fill="#a08a58" opacity=".7" transform="rotate(35 25.4 7.0)"/><rect x="67.4" y="17.6" width="1.5" height="1.1" fill="#b8a058" opacity=".7" transform="rotate(35 67.4 17.6)"/><rect x="49.9" y="29.1" width="2.2" height="1.3" fill="#587850" opacity=".7" transform="rotate(35 49.9 29.1)"/><rect x="85.6" y="25.7" width="2.4" height="1.7" fill="#4a6a44" opacity=".7" transform="rotate(35 85.6 25.7)"/><rect x="93.6" y="42.4" width="1.4" height="1.9" fill="#6a7a62" opacity=".7" transform="rotate(35 93.6 42.4)"/><rect x="98.7" y="34.7" width="1.9" height="1.6" fill="#6a7a62" opacity=".7" transform="rotate(35 98.7 34.7)"/><rect x="44.3" y="19.4" width="2.5" height="1.9" fill="#b8a058" opacity=".7" transform="rotate(35 44.3 19.4)"/><rect x="49.8" y="20.2" width="2.5" height="1.7" fill="#8e5e46" opacity=".7" transform="rotate(35 49.8 20.2)"/><rect x="44.9" y="13.8" width="1.3" height="1.0" fill="#8e5e46" opacity=".7" transform="rotate(35 44.9 13.8)"/><rect x="64.5" y="24.0" width="1.4" height="1.1" fill="#b8a058" opacity=".7" transform="rotate(35 64.5 24.0)"/><rect x="25.7" y="7.4" width="2.3" height="1.5" fill="#b8b09a" opacity=".7" transform="rotate(35 25.7 7.4)"/><rect x="35.2" y="17.2" width="1.6" height="1.6" fill="#4a6a44" opacity=".7" transform="rotate(35 35.2 17.2)"/><rect x="88.7" y="27.5" width="1.6" height="1.3" fill="#5f7f50" opacity=".7" transform="rotate(35 88.7 27.5)"/><rect x="78.9" y="26.2" width="1.6" height="1.2" fill="#b8a058" opacity=".7" transform="rotate(35 78.9 26.2)"/><rect x="34.5" y="13.1" width="1.6" height="1.6" fill="#4a6a44" opacity=".7" transform="rotate(35 34.5 13.1)"/><rect x="90.8" y="39.2" width="1.4" height="1.6" fill="#b8b09a" opacity=".7" transform="rotate(35 90.8 39.2)"/><rect x="97.0" y="27.2" width="1.7" height="1.1" fill="#b8b09a" opacity=".7" transform="rotate(35 97.0 27.2)"/><rect x="77.8" y="22.1" width="1.3" height="1.6" fill="#7a6248" opacity=".7" transform="rotate(35 77.8 22.1)"/><rect x="58.6" y="27.5" width="2.7" height="1.1" fill="#b8a058" opacity=".7" transform="rotate(35 58.6 27.5)"/><rect x="79.0" y="22.6" width="1.7" height="1.1" fill="#5f7f50" opacity=".7" transform="rotate(35 79.0 22.6)"/><rect x="30.6" y="9.2" width="2.5" height="2.0" fill="#c4bca8" opacity=".7" transform="rotate(35 30.6 9.2)"/><rect x="74.4" y="25.7" width="1.5" height="2.0" fill="#8e5e46" opacity=".7" transform="rotate(35 74.4 25.7)"/><rect x="63.4" y="28.0" width="2.3" height="1.2" fill="#8e5e46" opacity=".7" transform="rotate(35 63.4 28.0)"/><rect x="27.3" y="10.8" width="1.9" height="1.3" fill="#5f7f50" opacity=".7" transform="rotate(35 27.3 10.8)"/><rect x="53.1" y="26.8" width="2.6" height="1.5" fill="#a08a58" opacity=".7" transform="rotate(35 53.1 26.8)"/><rect x="100.1" y="32.7" width="1.5" height="1.9" fill="#b8b09a" opacity=".7" transform="rotate(35 100.1 32.7)"/><rect x="98.4" y="32.9" width="1.4" height="1.1" fill="#b8a058" opacity=".7" transform="rotate(35 98.4 32.9)"/><rect x="94.1" y="30.6" width="1.2" height="1.7" fill="#4a6a44" opacity=".7" transform="rotate(35 94.1 30.6)"/><rect x="87.1" y="33.3" width="2.7" height="1.9" fill="#7a6248" opacity=".7" transform="rotate(35 87.1 33.3)"/><rect x="33.8" y="13.1" width="2.7" height="1.1" fill="#6a7a62" opacity=".7" transform="rotate(35 33.8 13.1)"/><rect x="88.4" y="34.4" width="1.7" height="2.0" fill="#a08a58" opacity=".7" transform="rotate(35 88.4 34.4)"/><rect x="101.8" y="32.8" width="2.7" height="1.5" fill="#587850" opacity=".7" transform="rotate(35 101.8 32.8)"/><rect x="79.2" y="22.1" width="2.5" height="1.3" fill="#c4bca8" opacity=".7" transform="rotate(35 79.2 22.1)"/><rect x="70.0" y="26.4" width="2.1" height="1.1" fill="#8e5e46" opacity=".7" transform="rotate(35 70.0 26.4)"/><rect x="35.8" y="8.9" width="2.8" height="2.0" fill="#b8b09a" opacity=".7" transform="rotate(35 35.8 8.9)"/><rect x="28.5" y="7.2" width="1.3" height="2.0" fill="#b0a480" opacity=".7" transform="rotate(35 28.5 7.2)"/><rect x="56.6" y="28.0" width="2.4" height="1.8" fill="#5f7f50" opacity=".7" transform="rotate(35 56.6 28.0)"/><rect x="70.9" y="28.2" width="1.9" height="1.5" fill="#a08a58" opacity=".7" transform="rotate(35 70.9 28.2)"/><rect x="31.1" y="-0.2" width="1.9" height="1.7" fill="#6a7a62" opacity=".7" transform="rotate(35 31.1 -0.2)"/><rect x="95.3" y="32.1" width="1.3" height="1.4" fill="#a86e4c" opacity=".7" transform="rotate(35 95.3 32.1)"/><rect x="31.3" y="8.2" width="1.3" height="1.8" fill="#b0a480" opacity=".7" transform="rotate(35 31.3 8.2)"/><rect x="95.2" y="40.0" width="1.3" height="1.9" fill="#c4bca8" opacity=".7" transform="rotate(35 95.2 40.0)"/><rect x="81.0" y="21.0" width="1.3" height="1.7" fill="#587850" opacity=".7" transform="rotate(35 81.0 21.0)"/><rect x="84.9" y="39.3" width="2.0" height="2.1" fill="#7a6248" opacity=".7" transform="rotate(35 84.9 39.3)"/><path d="M26 2L34 10L40 18" stroke="#8fb0c8" stroke-width=".7" fill="none" opacity=".7"/><polygon points="50.300,40 53.400,44.400 59.200,41.700 62.400,37.500 61,34.100 55,34" fill="#1d4023"/><polygon points="37.900,112 51.200,96.500 68.400,112 52,132.600 47.700,125.700" fill="#a89d8b"/><polygon points="44,110 52,101 60,110 52,120" fill="#b8ad9c"/><polygon points="52,132.600 68.400,113.700 81.300,124.900 71,141.200" fill="#6a5a44"/><polygon points="60,123 68.400,113.700 75,119.500 66,130" fill="#77684e"/><polygon points="68.400,112 69.200,109.400 90.800,128.800 83,126.600" fill="#2a5a26"/><polygon points="71,143 83,126.600 90.800,130.900 68.100,162 57,162" fill="#b88a38"/><polygon points="68.100,162 90.800,131.800 96.800,136 77.800,162" fill="#c99682"/><polygon points="77.800,162 97.700,136.400 102,140.400 86.200,162" fill="#9aa04a"/><polygon points="86.200,162 102.800,140.900 122,160 120,162" fill="#b05a48"/><polygon points="52,132.600 71,141.200 57,162 44,162 50,140" fill="#4a5a3c"/></g><rect x="-30" y="-10" width="220" height="180" filter="url(#nz)" opacity=".38"/><rect x="-30" y="-10" width="220" height="180" filter="url(#nzl)" opacity=".07"/><clipPath id="cpm2"><polygon points="44.3,27.2 53.4,34.1 50.3,40.0 53.4,44.4 59.2,41.7 62.4,37.5 61.0,34.1 64.9,26.4 79.6,31.9 93.9,42.2 101.4,35.7 108.3,43.1 96.3,55.5 127.5,83.5 90.8,128.8 69.2,109.4 43.1,86.1 28.8,60.3 43.1,43.9"/></clipPath><g clip-path="url(#cpm2)"><rect x="20" y="20" width="115" height="115" fill="#1f6712"/><g filter="url(#b1)" fill="none" stroke="#62f01e"><path d="M30 60L44 86L70 110L90 128" stroke-width="5"/><path d="M44 28L43 44L30 60" stroke-width="3"/><path d="M65 27L80 32L94 42L101 36L108 43" stroke-width="2.500"/><path d="M36 62L60 72L80 96" stroke-width="2" opacity=".8"/><path d="M60 100L84 118" stroke-width="5" stroke="#8af22a"/></g><polygon points="29,60 43,86 69,109 91,129 99,118 76,97 56,78 42,58" fill="#6cea24" opacity=".8" filter="url(#b2)"/><polygon points="44,29 52,36 47,46 40,58 31,60 42,44" fill="#5fe020" opacity=".6" filter="url(#b1)"/><g stroke="#4fd41c" stroke-width=".7" opacity=".75"><path d="M73.8 94.6l1.5 -4.3"/><path d="M82.3 85.3l1.6 -4.5"/><path d="M52.8 85.5l3.0 -8.4"/><path d="M60.5 55.3l3.1 -8.8"/><path d="M61.8 83.7l2.3 -6.7"/><path d="M47.8 65.3l1.5 -4.2"/><path d="M57.4 87.5l1.6 -4.7"/><path d="M53.0 65.7l2.7 -7.8"/><path d="M49.3 98.5l1.2 -3.3"/><path d="M83.8 115.2l2.0 -5.7"/><path d="M64.2 91.9l2.9 -8.4"/><path d="M48.6 79.0l2.8 -8.1"/><path d="M76.8 65.2l1.8 -5.3"/><path d="M55.4 46.3l1.7 -5.0"/><path d="M38.7 53.3l2.3 -6.7"/><path d="M89.6 58.9l2.1 -6.1"/><path d="M52.0 115.1l2.9 -8.2"/><path d="M87.9 109.2l2.6 -7.4"/><path d="M77.3 52.6l1.7 -4.7"/><path d="M70.3 69.1l1.8 -5.2"/><path d="M36.8 75.0l2.3 -6.7"/><path d="M36.6 38.6l2.2 -6.4"/><path d="M51.6 77.9l2.2 -6.2"/><path d="M58.0 59.3l1.3 -3.8"/><path d="M55.2 103.6l1.4 -4.0"/><path d="M34.8 101.3l2.5 -7.2"/><path d="M60.1 39.3l1.4 -3.9"/><path d="M72.6 56.7l2.8 -7.9"/><path d="M90.1 38.7l2.8 -7.9"/><path d="M85.8 84.0l2.3 -6.5"/><path d="M68.9 77.5l2.1 -6.0"/><path d="M43.6 34.0l1.2 -3.4"/><path d="M35.5 49.6l1.4 -4.0"/><path d="M86.9 42.8l2.3 -6.7"/><path d="M72.1 50.6l1.9 -5.5"/><path d="M64.1 88.0l2.4 -6.9"/><path d="M58.1 85.5l2.1 -6.1"/><path d="M37.7 86.6l3.1 -9.0"/><path d="M76.0 74.1l2.2 -6.2"/><path d="M55.8 70.7l3.0 -8.5"/><path d="M38.7 89.1l1.4 -4.1"/><path d="M91.8 56.0l2.4 -6.9"/><path d="M41.1 108.9l3.0 -8.6"/><path d="M88.7 56.1l1.2 -3.3"/><path d="M70.9 91.1l2.5 -7.1"/><path d="M87.2 115.6l1.7 -4.8"/><path d="M87.9 109.1l1.2 -3.5"/><path d="M63.4 48.3l2.9 -8.4"/><path d="M82.8 51.0l1.4 -4.0"/><path d="M87.1 50.1l1.9 -5.3"/><path d="M68.9 65.9l2.8 -8.1"/><path d="M87.5 116.5l2.8 -8.0"/><path d="M65.1 73.7l2.2 -6.2"/><path d="M34.4 36.2l3.1 -8.7"/><path d="M47.6 108.3l2.7 -7.7"/><path d="M56.7 83.2l2.2 -6.4"/><path d="M43.9 36.8l1.3 -3.7"/><path d="M70.1 47.6l3.1 -8.9"/><path d="M74.6 36.6l1.3 -3.8"/><path d="M71.3 37.6l1.2 -3.4"/><path d="M36.7 105.9l2.6 -7.6"/><path d="M45.6 114.2l2.2 -6.2"/><path d="M72.5 107.9l2.6 -7.5"/><path d="M75.3 66.2l1.6 -4.5"/><path d="M45.8 36.8l3.0 -8.7"/><path d="M86.8 97.3l1.2 -3.5"/><path d="M77.6 87.1l2.1 -5.9"/><path d="M41.7 100.5l2.4 -6.9"/><path d="M51.1 62.3l1.6 -4.6"/><path d="M54.4 112.1l1.2 -3.3"/><path d="M78.1 110.5l2.7 -7.6"/><path d="M68.9 74.0l1.7 -4.7"/><path d="M77.2 100.3l1.1 -3.2"/><path d="M64.1 42.3l2.0 -5.8"/><path d="M36.8 81.6l2.6 -7.3"/><path d="M82.0 82.3l1.7 -4.7"/><path d="M59.3 78.0l1.7 -4.7"/><path d="M77.5 38.5l1.8 -5.1"/><path d="M39.5 92.4l2.8 -8.0"/><path d="M90.1 83.8l3.1 -8.7"/><path d="M63.9 82.6l1.4 -4.0"/><path d="M81.3 112.8l1.5 -4.4"/><path d="M43.6 112.9l2.7 -7.6"/><path d="M62.4 117.3l2.2 -6.4"/><path d="M40.1 61.4l1.2 -3.6"/><path d="M87.9 108.9l2.6 -7.5"/><path d="M58.5 88.3l1.8 -5.2"/><path d="M51.6 70.0l2.2 -6.3"/><path d="M43.9 116.5l2.4 -6.8"/><path d="M88.7 44.7l2.3 -6.6"/></g><g filter="url(#b05)"><circle cx="40" cy="80" r="1.600" fill="#f09030"/><circle cx="46" cy="89" r="1.500" fill="#f0c030"/></g></g><text x="46.800" y="24.300" font-size="2.900" fill="#fff" font-weight="700" font-family="Liberation Sans, sans-serif" opacity=".92">Вовківці</text></g><rect x="0.300" y="3.800" width="5.500" height="6.900" fill="#fafafa"/><path d="M2.200 6.400l1.800 1.800m0 -1.800l-1.800 1.800" stroke="#777" stroke-width=".5"/><rect x="67.2" y="9" width="32.7" height="8" fill="#f6f6f6"/><text x="68.8" y="14" font-size="2.800" fill="#444" font-family="Liberation Sans, sans-serif">2023 Кукурудза</text><path d="M94.9 12.300l1.500 1.600l1.500 -1.600" stroke="#666" stroke-width=".5" fill="none"/><rect x="104.3" y="9" width="33" height="8" fill="#f6f6f6"/><text x="105.89999999999999" y="14" font-size="2.800" fill="#444" font-family="Liberation Sans, sans-serif">Органічна речо...</text><path d="M132.3 12.300l1.500 1.600l1.500 -1.600" stroke="#666" stroke-width=".5" fill="none"/><rect x="141.600" y="9" width="8.200" height="8" fill="#f6f6f6"/><rect x="143.800" y="11.200" width="3.800" height="3.800" fill="none" stroke="#777" stroke-width=".5"/><rect x="154.500" y="9" width="4" height="8" fill="#f6f6f6"/><rect x="129.200" y="132.400" width="8.100" height="8.400" fill="#f6f6f6"/><circle cx="133.300" cy="136.600" r="2.200" fill="none" stroke="#666" stroke-width=".5"/><rect x="141.600" y="132.400" width="8.200" height="8.400" fill="#f6f6f6"/><path d="M145.700 134.300v4.600" stroke="#444" stroke-width=".7"/><rect x="144.700" y="134.300" width="2" height="1.800" fill="#444"/><rect x="154.500" y="132.400" width="4" height="8.400" fill="#f6f6f6"/><rect x="2" y="140.300" width="15" height="1.500" fill="#dfe6df" opacity=".75"/><rect x="2" y="142.800" width="6" height="1.500" fill="#fff" opacity=".8"/><rect x="143" y="1.800" width="13" height="1.500" fill="#111" opacity=".8"/><rect x="141" y="60" width="17" height="66" fill="#f8f8f8"/><text x="143.5" y="65.2" font-size="2.500" fill="#555" font-family="Liberation Sans, sans-serif">Редагувати</text><rect x="141" y="67.5" width="17" height=".5" fill="#ddd"/><rect x="155.7" y="71.0" width="1.800" height="7.7" fill="#1f8a2a"/><text x="154.8" y="75.6" font-size="2.300" fill="#666" text-anchor="end" font-family="Liberation Sans, sans-serif">&gt; 79,9</text><rect x="155.7" y="78.6" width="1.800" height="7.7" fill="#55c83a"/><text x="154.8" y="83.2" font-size="2.300" fill="#666" text-anchor="end" font-family="Liberation Sans, sans-serif">78,4 - 79,9</text><rect x="155.7" y="86.1" width="1.800" height="7.7" fill="#a8e048"/><text x="154.8" y="90.7" font-size="2.300" fill="#666" text-anchor="end" font-family="Liberation Sans, sans-serif">76,8 - 78,4</text><rect x="155.7" y="93.7" width="1.800" height="7.7" fill="#f2e23a"/><text x="154.8" y="98.3" font-size="2.300" fill="#666" text-anchor="end" font-family="Liberation Sans, sans-serif">75,2 - 76,8</text><rect x="155.7" y="101.3" width="1.800" height="7.7" fill="#f0a030"/><text x="154.8" y="105.9" font-size="2.300" fill="#666" text-anchor="end" font-family="Liberation Sans, sans-serif">73,6 - 75,2</text><rect x="155.7" y="108.9" width="1.800" height="7.7" fill="#e04a30"/><text x="154.8" y="113.4" font-size="2.300" fill="#666" text-anchor="end" font-family="Liberation Sans, sans-serif">72,1 - 73,6</text><rect x="155.7" y="116.4" width="1.800" height="7.7" fill="#a01a1a"/><text x="154.8" y="121.0" font-size="2.300" fill="#666" text-anchor="end" font-family="Liberation Sans, sans-serif">&lt; 72,1</text></svg><g font-family="Liberation Sans, sans-serif"><circle cx="9" cy="151.400" r="1.700" fill="none" stroke="#444" stroke-width=".6"/><text x="12.5" y="152.300" font-size="2.600" fill="#858585">Головна сторінка</text><rect x="49.500" y="149.800" width="3.300" height="3.300" rx=".6" fill="#3a86e8"/><text x="54.3" y="152.300" font-size="2.600" fill="#3a86e8">Поле</text><rect x="76.800" y="149.600" width="2.600" height="3.600" fill="none" stroke="#444" stroke-width=".6"/><text x="82" y="152.300" font-size="2.600" fill="#858585">Звіти</text><rect x="103.600" y="149.700" width="3.400" height="3.400" fill="none" stroke="#444" stroke-width=".6"/><path d="M105.300 149.700v3.400M103.600 151.400h3.400" stroke="#444" stroke-width=".4"/><text x="109.3" y="152.300" font-size="2.600" fill="#858585">Карти завдань</text><circle cx="144" cy="151.400" r="1.700" fill="#555"/><circle cx="144" cy="151.400" r=".6" fill="#fff"/><text x="148" y="152.300" font-size="2.600" fill="#858585">Налаштування</text><path d="M180.500 152.500v-2h2.500l1 -1h1.500v3z" fill="#555"/><circle cx="181.500" cy="153" r=".9" fill="#333"/><circle cx="185" cy="153" r="1.100" fill="#333"/><text x="188" y="152.300" font-size="2.600" fill="#858585">Field View Cab</text><rect x="75.500" y="155.800" width="60" height="1.300" rx=".6" fill="#222"/></g></svg>
<svg style="left:67.2px;top:461.2px;overflow:hidden" width="212" height="162" viewBox="0 -2 212 162"><g font-family="Liberation Sans, sans-serif"><text x="0" y="2.9" font-size="2.3" fill="#555" font-weight="400" text-anchor="start">‹ 14:37 год.</text><text x="0" y="10.4" font-size="2.9" fill="#2a7ae8" font-weight="400" text-anchor="start">Назад</text><text x="10.6" y="10.4" font-size="2.9" fill="#111" font-weight="700" text-anchor="start">Чевгузів 11.(50)</text><rect x="0" y="14.200" width="53" height=".5" fill="#e2e2e2"/><text x="0" y="19.7" font-size="2.7" fill="#777" font-weight="400" text-anchor="start">11 га • Кукурудза 2023 • 871 Новоставці,</text><text x="0" y="22.8" font-size="2.7" fill="#777" font-weight="400" text-anchor="start">Кукурузи</text><rect x="0" y="26.7" width="53.300" height="8" fill="#eeeeee"/><rect x="0" y="61" width="53.300" height="8" fill="#eeeeee"/><rect x="0" y="95.6" width="53.300" height="8" fill="#eeeeee"/><rect x="0" y="130" width="53.300" height="8" fill="#eeeeee"/><text x="0" y="40.3" font-size="2.9" fill="#111" font-weight="700" text-anchor="start">ля</text><text x="22" y="48.6" font-size="2.7" fill="#777" font-weight="400" text-anchor="middle">Обробка даних про поля…</text><text x="0" y="74.3" font-size="2.9" fill="#111" font-weight="700" text-anchor="start">ки та ділянки</text><text x="23" y="82.4" font-size="2.7" fill="#777" font-weight="400" text-anchor="middle">Для цього сезону немає збережених</text><text x="23" y="85.4" font-size="2.7" fill="#777" font-weight="400" text-anchor="middle">зон або ділянок.</text><text x="0" y="108.7" font-size="2.9" fill="#111" font-weight="700" text-anchor="start">нотатки до поля</text><circle cx="47.200" cy="107.700" r="2.100" fill="#e8f1fc" stroke="#4a90e2" stroke-width=".6"/><text x="23" y="116.7" font-size="2.7" fill="#777" font-weight="400" text-anchor="middle">Немає приміток до поля.</text><text x="24" y="119.7" font-size="2.7" fill="#777" font-weight="400" text-anchor="middle">Натисніть +, щоб додати нову примітку.</text><text x="0" y="143.8" font-size="2.9" fill="#111" font-weight="700" text-anchor="start">границі поля</text></g><svg x="53.3" y="0" width="158" height="146" viewBox="0 0 158 146" overflow="hidden"><g transform="translate(0,0) scale(1)"><g filter="url(#b05)"><rect x="-30" y="-10" width="220" height="180" fill="#2d5232"/><polygon points="-30,-10 27,-10 45,27 29,60 -30,20" fill="#3a6334"/><polygon points="3,2 24,1 40,28 27,52 2,30" fill="#40683a"/><polygon points="-30,40 10,52 26,66 42,88 50,98 38,112 50,132 44,170 -30,170" fill="#21442c"/><polygon points="0,62 14,58 30,80 36,100 22,116 8,104 0,108" fill="#1c3b27"/><polygon points="-30,126 16,115 33,132 28,170 -30,170" fill="#3f6239"/><polygon points="2,64 10,60 14,70 6,78" fill="#143621"/><path d="M0 36L30 58M4 56L28 60" stroke="#6b7f58" stroke-width=".8" fill="none" opacity=".7"/><polygon points="28,-10 190,-10 190,12 100,14 64,8" fill="#375c31"/><polygon points="100,14 130,12 128,30 112,34 96,24" fill="#447a37"/><polygon points="133,-10 190,-10 190,30 151.900,34.400 128.700,29.300 130.400,12" fill="#95866a"/><polygon points="136,2 156,0 152,26 135,24" fill="#a8977a"/><polygon points="128,30 152,35 158,34 190,40 190,52 150,50 130,44" fill="#2b4e30"/><polygon points="135,44 190,52 190,78 142,74 132,68" fill="#26482d"/><polygon points="141.600,77.500 190,90 190,104 148.500,95.600" fill="#a3917a"/><polygon points="127.500,83.500 148,96 190,106 190,170 118,170 90.800,128.800" fill="#305532"/><polygon points="96.300,55.500 108.900,43.600 122.600,46.500 134.700,54.300 134.700,63.700 130.400,70.600 127.500,83.500" fill="#5d4b47"/><polygon points="104,60 110,56 120,66 116,72" fill="#6f7a45" opacity=".8"/><path d="M24 0L46 22L66 24L84 30L104 40" stroke="#3f5f40" stroke-width="14" fill="none" stroke-linejoin="round"/><rect x="81.1" y="22.0" width="2.1" height="1.6" fill="#6a7a62" opacity=".7" transform="rotate(35 81.1 22.0)"/><rect x="81.1" y="23.3" width="1.9" height="1.9" fill="#b8a058" opacity=".7" transform="rotate(35 81.1 23.3)"/><rect x="42.0" y="22.3" width="2.3" height="1.6" fill="#5f7f50" opacity=".7" transform="rotate(35 42.0 22.3)"/><rect x="53.0" y="27.2" width="1.4" height="1.2" fill="#b8b09a" opacity=".7" transform="rotate(35 53.0 27.2)"/><rect x="83.5" y="27.2" width="1.6" height="2.1" fill="#5f7f50" opacity=".7" transform="rotate(35 83.5 27.2)"/><rect x="105.2" y="33.4" width="2.7" height="1.1" fill="#c4bca8" opacity=".7" transform="rotate(35 105.2 33.4)"/><rect x="32.4" y="10.5" width="1.7" height="1.3" fill="#b0a480" opacity=".7" transform="rotate(35 32.4 10.5)"/><rect x="70.4" y="23.2" width="1.8" height="1.0" fill="#c4bca8" opacity=".7" transform="rotate(35 70.4 23.2)"/><rect x="91.5" y="30.3" width="2.8" height="1.4" fill="#a08a58" opacity=".7" transform="rotate(35 91.5 30.3)"/><rect x="37.9" y="11.1" width="2.4" height="2.1" fill="#c4bca8" opacity=".7" transform="rotate(35 37.9 11.1)"/><rect x="81.7" y="30.9" width="2.6" height="1.8" fill="#4a6a44" opacity=".7" transform="rotate(35 81.7 30.9)"/><rect x="98.2" y="38.0" width="2.6" height="1.8" fill="#4a6a44" opacity=".7" transform="rotate(35 98.2 38.0)"/><rect x="34.0" y="7.6" width="2.3" height="2.1" fill="#b8b09a" opacity=".7" transform="rotate(35 34.0 7.6)"/><rect x="89.6" y="33.1" width="1.6" height="1.5" fill="#6a7a62" opacity=".7" transform="rotate(35 89.6 33.1)"/><rect x="30.7" y="2.0" width="2.3" height="2.0" fill="#4a6a44" opacity=".7" transform="rotate(35 30.7 2.0)"/><rect x="45.4" y="27.3" width="2.7" height="1.1" fill="#5f7f50" opacity=".7" transform="rotate(35 45.4 27.3)"/><rect x="64.4" y="29.0" width="2.7" height="1.6" fill="#b0a480" opacity=".7" transform="rotate(35 64.4 29.0)"/><rect x="91.2" y="29.8" width="2.0" height="1.0" fill="#a86e4c" opacity=".7" transform="rotate(35 91.2 29.8)"/><rect x="66.3" y="30.8" width="1.5" height="1.8" fill="#c4bca8" opacity=".7" transform="rotate(35 66.3 30.8)"/><rect x="73.1" y="27.5" width="2.2" height="1.8" fill="#5f7f50" opacity=".7" transform="rotate(35 73.1 27.5)"/><rect x="46.5" y="15.4" width="1.9" height="1.5" fill="#587850" opacity=".7" transform="rotate(35 46.5 15.4)"/><rect x="79.7" y="22.7" width="1.7" height="1.5" fill="#8e5e46" opacity=".7" transform="rotate(35 79.7 22.7)"/><rect x="108.6" y="45.3" width="1.9" height="1.2" fill="#b0a480" opacity=".7" transform="rotate(35 108.6 45.3)"/><rect x="90.6" y="32.0" width="2.1" height="1.3" fill="#7a6248" opacity=".7" transform="rotate(35 90.6 32.0)"/><rect x="56.2" y="27.3" width="2.5" height="1.6" fill="#5f7f50" opacity=".7" transform="rotate(35 56.2 27.3)"/><rect x="86.9" y="34.3" width="2.0" height="1.9" fill="#b8b09a" opacity=".7" transform="rotate(35 86.9 34.3)"/><rect x="45.7" y="18.7" width="1.9" height="1.2" fill="#a08a58" opacity=".7" transform="rotate(35 45.7 18.7)"/><rect x="92.6" y="30.2" width="2.2" height="1.4" fill="#6a7a62" opacity=".7" transform="rotate(35 92.6 30.2)"/><rect x="62.2" y="25.7" width="1.8" height="2.1" fill="#c4bca8" opacity=".7" transform="rotate(35 62.2 25.7)"/><rect x="33.6" y="10.7" width="2.5" height="1.2" fill="#a86e4c" opacity=".7" transform="rotate(35 33.6 10.7)"/><rect x="68.8" y="20.4" width="2.7" height="1.8" fill="#5f7f50" opacity=".7" transform="rotate(35 68.8 20.4)"/><rect x="74.9" y="31.6" width="1.5" height="1.5" fill="#7a6248" opacity=".7" transform="rotate(35 74.9 31.6)"/><rect x="41.0" y="18.8" width="2.2" height="1.8" fill="#b0a480" opacity=".7" transform="rotate(35 41.0 18.8)"/><rect x="83.6" y="32.1" width="2.5" height="1.2" fill="#587850" opacity=".7" transform="rotate(35 83.6 32.1)"/><rect x="36.9" y="23.5" width="2.3" height="1.1" fill="#b0a480" opacity=".7" transform="rotate(35 36.9 23.5)"/><rect x="43.4" y="17.1" width="2.0" height="1.1" fill="#6a7a62" opacity=".7" transform="rotate(35 43.4 17.1)"/><rect x="99.2" y="32.7" width="1.5" height="1.7" fill="#587850" opacity=".7" transform="rotate(35 99.2 32.7)"/><rect x="29.4" y="0.1" width="2.1" height="1.8" fill="#6a7a62" opacity=".7" transform="rotate(35 29.4 0.1)"/><rect x="54.9" y="29.4" width="1.3" height="1.8" fill="#4a6a44" opacity=".7" transform="rotate(35 54.9 29.4)"/><rect x="69.8" y="21.2" width="2.4" height="2.2" fill="#b0a480" opacity=".7" transform="rotate(35 69.8 21.2)"/><rect x="66.6" y="29.8" width="1.3" height="1.9" fill="#4a6a44" opacity=".7" transform="rotate(35 66.6 29.8)"/><rect x="29.5" y="13.4" width="1.7" height="1.9" fill="#8e5e46" opacity=".7" transform="rotate(35 29.5 13.4)"/><rect x="81.6" y="29.9" width="1.9" height="1.7" fill="#5f7f50" opacity=".7" transform="rotate(35 81.6 29.9)"/><rect x="54.0" y="21.0" width="2.0" height="1.3" fill="#8e5e46" opacity=".7" transform="rotate(35 54.0 21.0)"/><rect x="49.4" y="22.6" width="1.4" height="1.2" fill="#587850" opacity=".7" transform="rotate(35 49.4 22.6)"/><rect x="51.1" y="24.3" width="2.5" height="1.0" fill="#587850" opacity=".7" transform="rotate(35 51.1 24.3)"/><rect x="68.6" y="26.3" width="1.8" height="1.1" fill="#a08a58" opacity=".7" transform="rotate(35 68.6 26.3)"/><rect x="46.6" y="18.2" width="2.3" height="1.9" fill="#8e5e46" opacity=".7" transform="rotate(35 46.6 18.2)"/><rect x="75.7" y="28.5" width="2.3" height="1.7" fill="#4a6a44" opacity=".7" transform="rotate(35 75.7 28.5)"/><rect x="24.9" y="9.2" width="2.2" height="1.2" fill="#4a6a44" opacity=".7" transform="rotate(35 24.9 9.2)"/><rect x="33.5" y="19.8" width="2.7" height="1.8" fill="#a86e4c" opacity=".7" transform="rotate(35 33.5 19.8)"/><rect x="88.7" y="32.2" width="2.3" height="2.0" fill="#7a6248" opacity=".7" transform="rotate(35 88.7 32.2)"/><rect x="57.2" y="22.4" width="2.2" height="2.1" fill="#a08a58" opacity=".7" transform="rotate(35 57.2 22.4)"/><rect x="66.1" y="28.5" width="2.4" height="1.5" fill="#587850" opacity=".7" transform="rotate(35 66.1 28.5)"/><rect x="96.7" y="29.9" width="1.8" height="1.7" fill="#4a6a44" opacity=".7" transform="rotate(35 96.7 29.9)"/><rect x="102.1" y="38.0" width="1.4" height="1.8" fill="#b8b09a" opacity=".7" transform="rotate(35 102.1 38.0)"/><rect x="97.4" y="34.8" width="1.2" height="1.8" fill="#b0a480" opacity=".7" transform="rotate(35 97.4 34.8)"/><rect x="37.9" y="18.8" width="1.6" height="1.7" fill="#6a7a62" opacity=".7" transform="rotate(35 37.9 18.8)"/><rect x="78.4" y="23.3" width="2.4" height="1.9" fill="#7a6248" opacity=".7" transform="rotate(35 78.4 23.3)"/><rect x="76.7" y="31.3" width="2.3" height="1.6" fill="#5f7f50" opacity=".7" transform="rotate(35 76.7 31.3)"/><path d="M26 2L34 10L40 18" stroke="#8fb0c8" stroke-width=".7" fill="none" opacity=".7"/><polygon points="50.300,40 53.400,44.400 59.200,41.700 62.400,37.500 61,34.100 55,34" fill="#1d4023"/><polygon points="37.900,112 51.200,96.500 68.400,112 52,132.600 47.700,125.700" fill="#a89d8b"/><polygon points="44,110 52,101 60,110 52,120" fill="#b8ad9c"/><polygon points="52,132.600 68.400,113.700 81.300,124.900 71,141.200" fill="#6a5a44"/><polygon points="60,123 68.400,113.700 75,119.500 66,130" fill="#77684e"/><polygon points="68.400,112 69.200,109.400 90.800,128.800 83,126.600" fill="#2a5a26"/><polygon points="71,143 83,126.600 90.800,130.900 68.100,162 57,162" fill="#b88a38"/><polygon points="68.100,162 90.800,131.800 96.800,136 77.800,162" fill="#c99682"/><polygon points="77.800,162 97.700,136.400 102,140.400 86.200,162" fill="#9aa04a"/><polygon points="86.200,162 102.800,140.900 122,160 120,162" fill="#b05a48"/><polygon points="52,132.600 71,141.200 57,162 44,162 50,140" fill="#4a5a3c"/></g><rect x="-30" y="-10" width="220" height="180" filter="url(#nz)" opacity=".38"/><rect x="-30" y="-10" width="220" height="180" filter="url(#nzl)" opacity=".07"/><clipPath id="cpm3"><polygon points="44.3,27.2 53.4,34.1 50.3,40.0 53.4,44.4 59.2,41.7 62.4,37.5 61.0,34.1 64.9,26.4 79.6,31.9 93.9,42.2 101.4,35.7 108.3,43.1 96.3,55.5 127.5,83.5 90.8,128.8 69.2,109.4 43.1,86.1 28.8,60.3 43.1,43.9"/></clipPath><g clip-path="url(#cpm3)"><rect x="20" y="20" width="115" height="115" fill="#8cf23a"/><g stroke="#7ee030" stroke-width=".6" opacity=".8"><path d="M30 62.0l80 72"/><path d="M35 57.5l80 72"/><path d="M40 53.0l80 72"/><path d="M45 48.5l80 72"/><path d="M50 44.0l80 72"/><path d="M55 39.5l80 72"/><path d="M60 35.0l80 72"/><path d="M65 30.5l80 72"/></g><path d="M52 40L96 58" stroke="#a0f858" stroke-width="1.500" opacity=".7"/></g><text x="46.800" y="24.300" font-size="2.900" fill="#fff" font-weight="700" font-family="Liberation Sans, sans-serif" opacity=".92">Вовківці</text></g><rect x="0.300" y="3.800" width="5.500" height="6.900" fill="#fafafa"/><path d="M2.200 6.400l1.800 1.800m0 -1.800l-1.800 1.800" stroke="#777" stroke-width=".5"/><rect x="67.2" y="9" width="32.7" height="8" fill="#f6f6f6"/><text x="68.8" y="14" font-size="2.800" fill="#444" font-family="Liberation Sans, sans-serif">2023 Кукурудза</text><path d="M94.9 12.300l1.500 1.600l1.500 -1.600" stroke="#666" stroke-width=".5" fill="none"/><rect x="104.3" y="9" width="33" height="8" fill="#f6f6f6"/><text x="105.89999999999999" y="14" font-size="2.800" fill="#444" font-family="Liberation Sans, sans-serif">Притискна сила</text><path d="M132.3 12.300l1.500 1.600l1.500 -1.600" stroke="#666" stroke-width=".5" fill="none"/><rect x="141.600" y="9" width="8.200" height="8" fill="#f6f6f6"/><rect x="143.800" y="11.200" width="3.800" height="3.800" fill="none" stroke="#777" stroke-width=".5"/><rect x="154.500" y="9" width="4" height="8" fill="#f6f6f6"/><rect x="129.200" y="132.400" width="8.100" height="8.400" fill="#f6f6f6"/><circle cx="133.300" cy="136.600" r="2.200" fill="none" stroke="#666" stroke-width=".5"/><rect x="141.600" y="132.400" width="8.200" height="8.400" fill="#f6f6f6"/><path d="M145.700 134.300v4.600" stroke="#444" stroke-width=".7"/><rect x="144.700" y="134.300" width="2" height="1.800" fill="#444"/><rect x="154.500" y="132.400" width="4" height="8.400" fill="#f6f6f6"/><rect x="2" y="140.300" width="15" height="1.500" fill="#dfe6df" opacity=".75"/><rect x="2" y="142.800" width="6" height="1.500" fill="#fff" opacity=".8"/><rect x="143" y="1.800" width="13" height="1.500" fill="#111" opacity=".8"/><rect x="126" y="88" width="32" height="38" fill="#f8f8f8"/><rect x="155.7" y="90.0" width="1.800" height="6.9" fill="#e83a3a"/><text x="154.8" y="94.2" font-size="2.300" fill="#666" text-anchor="end" font-family="Liberation Sans, sans-serif">Критично низька</text><rect x="155.7" y="96.8" width="1.800" height="6.9" fill="#f0a030"/><text x="154.8" y="101.0" font-size="2.300" fill="#666" text-anchor="end" font-family="Liberation Sans, sans-serif">Нижче норми</text><rect x="155.7" y="103.6" width="1.800" height="6.9" fill="#f2e23a"/><text x="154.8" y="107.8" font-size="2.300" fill="#666" text-anchor="end" font-family="Liberation Sans, sans-serif">Висока точність посіву</text><rect x="155.7" y="110.4" width="1.800" height="6.9" fill="#55c83a"/><text x="154.8" y="114.6" font-size="2.300" fill="#666" text-anchor="end" font-family="Liberation Sans, sans-serif">н/д</text><rect x="155.7" y="117.2" width="1.800" height="6.9" fill="#3a8ae0"/><text x="154.8" y="121.4" font-size="2.300" fill="#666" text-anchor="end" font-family="Liberation Sans, sans-serif">Критично низька</text></svg><g font-family="Liberation Sans, sans-serif"><circle cx="9" cy="151.400" r="1.700" fill="none" stroke="#444" stroke-width=".6"/><text x="12.5" y="152.300" font-size="2.600" fill="#858585">Головна сторінка</text><rect x="49.500" y="149.800" width="3.300" height="3.300" rx=".6" fill="#3a86e8"/><text x="54.3" y="152.300" font-size="2.600" fill="#3a86e8">Поле</text><rect x="76.800" y="149.600" width="2.600" height="3.600" fill="none" stroke="#444" stroke-width=".6"/><text x="82" y="152.300" font-size="2.600" fill="#858585">Звіти</text><rect x="103.600" y="149.700" width="3.400" height="3.400" fill="none" stroke="#444" stroke-width=".6"/><path d="M105.300 149.700v3.400M103.600 151.400h3.400" stroke="#444" stroke-width=".4"/><text x="109.3" y="152.300" font-size="2.600" fill="#858585">Карти завдань</text><circle cx="144" cy="151.400" r="1.700" fill="#555"/><circle cx="144" cy="151.400" r=".6" fill="#fff"/><text x="148" y="152.300" font-size="2.600" fill="#858585">Налаштування</text><path d="M180.500 152.500v-2h2.500l1 -1h1.500v3z" fill="#555"/><circle cx="181.500" cy="153" r=".9" fill="#333"/><circle cx="185" cy="153" r="1.100" fill="#333"/><text x="188" y="152.300" font-size="2.600" fill="#858585">Field View Cab</text><rect x="75.500" y="155.800" width="60" height="1.300" rx=".6" fill="#222"/></g></svg>
<svg style="left:309.3px;top:464px;overflow:hidden" width="212" height="162" viewBox="0 -2 212 162"><g font-family="Liberation Sans, sans-serif"><text x="0" y="2.9" font-size="2.3" fill="#555" font-weight="400" text-anchor="start">‹ 14:37 год.</text><text x="0" y="10.4" font-size="2.9" fill="#2a7ae8" font-weight="400" text-anchor="start">Назад</text><text x="10.6" y="10.4" font-size="2.9" fill="#111" font-weight="700" text-anchor="start">Чевгузів 11.(50)</text><rect x="0" y="14.200" width="53" height=".5" fill="#e2e2e2"/><text x="0" y="19.7" font-size="2.7" fill="#777" font-weight="400" text-anchor="start">11 га • Кукурудза 2023 • 871 Новоставці,</text><text x="0" y="22.8" font-size="2.7" fill="#777" font-weight="400" text-anchor="start">Кукурузи</text><rect x="0" y="26.7" width="53.300" height="8" fill="#eeeeee"/><rect x="0" y="61" width="53.300" height="8" fill="#eeeeee"/><rect x="0" y="95.6" width="53.300" height="8" fill="#eeeeee"/><rect x="0" y="130" width="53.300" height="8" fill="#eeeeee"/><text x="0" y="40.3" font-size="2.9" fill="#111" font-weight="700" text-anchor="start">ля</text><text x="22" y="48.6" font-size="2.7" fill="#777" font-weight="400" text-anchor="middle">Обробка даних про поля…</text><text x="0" y="74.3" font-size="2.9" fill="#111" font-weight="700" text-anchor="start">ки та ділянки</text><text x="23" y="82.4" font-size="2.7" fill="#777" font-weight="400" text-anchor="middle">Для цього сезону немає збережених</text><text x="23" y="85.4" font-size="2.7" fill="#777" font-weight="400" text-anchor="middle">зон або ділянок.</text><text x="0" y="108.7" font-size="2.9" fill="#111" font-weight="700" text-anchor="start">нотатки до поля</text><circle cx="47.200" cy="107.700" r="2.100" fill="#e8f1fc" stroke="#4a90e2" stroke-width=".6"/><text x="23" y="116.7" font-size="2.7" fill="#777" font-weight="400" text-anchor="middle">Немає приміток до поля.</text><text x="24" y="119.7" font-size="2.7" fill="#777" font-weight="400" text-anchor="middle">Натисніть +, щоб додати нову примітку.</text><text x="0" y="143.8" font-size="2.9" fill="#111" font-weight="700" text-anchor="start">границі поля</text></g><svg x="53.3" y="0" width="158" height="146" viewBox="0 0 158 146" overflow="hidden"><g transform="translate(0,0) scale(1)"><g filter="url(#b05)"><rect x="-30" y="-10" width="220" height="180" fill="#2d5232"/><polygon points="-30,-10 27,-10 45,27 29,60 -30,20" fill="#3a6334"/><polygon points="3,2 24,1 40,28 27,52 2,30" fill="#40683a"/><polygon points="-30,40 10,52 26,66 42,88 50,98 38,112 50,132 44,170 -30,170" fill="#21442c"/><polygon points="0,62 14,58 30,80 36,100 22,116 8,104 0,108" fill="#1c3b27"/><polygon points="-30,126 16,115 33,132 28,170 -30,170" fill="#3f6239"/><polygon points="2,64 10,60 14,70 6,78" fill="#143621"/><path d="M0 36L30 58M4 56L28 60" stroke="#6b7f58" stroke-width=".8" fill="none" opacity=".7"/><polygon points="28,-10 190,-10 190,12 100,14 64,8" fill="#375c31"/><polygon points="100,14 130,12 128,30 112,34 96,24" fill="#447a37"/><polygon points="133,-10 190,-10 190,30 151.900,34.400 128.700,29.300 130.400,12" fill="#95866a"/><polygon points="136,2 156,0 152,26 135,24" fill="#a8977a"/><polygon points="128,30 152,35 158,34 190,40 190,52 150,50 130,44" fill="#2b4e30"/><polygon points="135,44 190,52 190,78 142,74 132,68" fill="#26482d"/><polygon points="141.600,77.500 190,90 190,104 148.500,95.600" fill="#a3917a"/><polygon points="127.500,83.500 148,96 190,106 190,170 118,170 90.800,128.800" fill="#305532"/><polygon points="96.300,55.500 108.900,43.600 122.600,46.500 134.700,54.300 134.700,63.700 130.400,70.600 127.500,83.500" fill="#5d4b47"/><polygon points="104,60 110,56 120,66 116,72" fill="#6f7a45" opacity=".8"/><path d="M24 0L46 22L66 24L84 30L104 40" stroke="#3f5f40" stroke-width="14" fill="none" stroke-linejoin="round"/><rect x="90.8" y="30.0" width="1.3" height="2.1" fill="#4a6a44" opacity=".7" transform="rotate(35 90.8 30.0)"/><rect x="83.5" y="30.0" width="2.4" height="1.2" fill="#6a7a62" opacity=".7" transform="rotate(35 83.5 30.0)"/><rect x="71.3" y="32.9" width="2.4" height="1.6" fill="#7a6248" opacity=".7" transform="rotate(35 71.3 32.9)"/><rect x="40.9" y="10.8" width="2.2" height="1.8" fill="#c4bca8" opacity=".7" transform="rotate(35 40.9 10.8)"/><rect x="68.1" y="23.2" width="1.6" height="1.9" fill="#a86e4c" opacity=".7" transform="rotate(35 68.1 23.2)"/><rect x="43.2" y="29.0" width="2.3" height="2.0" fill="#a86e4c" opacity=".7" transform="rotate(35 43.2 29.0)"/><rect x="96.7" y="28.0" width="1.4" height="2.0" fill="#b8a058" opacity=".7" transform="rotate(35 96.7 28.0)"/><rect x="65.7" y="21.7" width="2.3" height="1.7" fill="#b8b09a" opacity=".7" transform="rotate(35 65.7 21.7)"/><rect x="85.6" y="25.3" width="1.6" height="1.5" fill="#b8a058" opacity=".7" transform="rotate(35 85.6 25.3)"/><rect x="101.3" y="40.8" width="1.7" height="1.2" fill="#b8a058" opacity=".7" transform="rotate(35 101.3 40.8)"/><rect x="43.6" y="17.1" width="2.1" height="1.9" fill="#6a7a62" opacity=".7" transform="rotate(35 43.6 17.1)"/><rect x="47.9" y="23.5" width="2.5" height="1.2" fill="#587850" opacity=".7" transform="rotate(35 47.9 23.5)"/><rect x="94.8" y="38.8" width="2.3" height="1.6" fill="#b8b09a" opacity=".7" transform="rotate(35 94.8 38.8)"/><rect x="99.3" y="30.2" width="1.8" height="1.6" fill="#8e5e46" opacity=".7" transform="rotate(35 99.3 30.2)"/><rect x="92.3" y="28.5" width="2.1" height="2.1" fill="#8e5e46" opacity=".7" transform="rotate(35 92.3 28.5)"/><rect x="51.8" y="18.4" width="1.5" height="1.1" fill="#587850" opacity=".7" transform="rotate(35 51.8 18.4)"/><rect x="50.3" y="20.3" width="2.4" height="2.0" fill="#b8b09a" opacity=".7" transform="rotate(35 50.3 20.3)"/><rect x="34.9" y="2.2" width="1.4" height="1.8" fill="#b0a480" opacity=".7" transform="rotate(35 34.9 2.2)"/><rect x="39.1" y="11.6" width="2.0" height="1.0" fill="#a08a58" opacity=".7" transform="rotate(35 39.1 11.6)"/><rect x="47.2" y="18.9" width="2.1" height="1.3" fill="#5f7f50" opacity=".7" transform="rotate(35 47.2 18.9)"/><rect x="66.3" y="27.1" width="2.5" height="2.2" fill="#5f7f50" opacity=".7" transform="rotate(35 66.3 27.1)"/><rect x="89.2" y="40.7" width="1.8" height="1.0" fill="#a08a58" opacity=".7" transform="rotate(35 89.2 40.7)"/><rect x="75.3" y="24.8" width="2.7" height="2.1" fill="#b0a480" opacity=".7" transform="rotate(35 75.3 24.8)"/><rect x="95.0" y="40.4" width="2.3" height="1.1" fill="#a86e4c" opacity=".7" transform="rotate(35 95.0 40.4)"/><rect x="72.6" y="31.9" width="2.3" height="1.5" fill="#6a7a62" opacity=".7" transform="rotate(35 72.6 31.9)"/><rect x="90.2" y="30.3" width="2.4" height="1.2" fill="#5f7f50" opacity=".7" transform="rotate(35 90.2 30.3)"/><rect x="93.1" y="38.4" width="1.2" height="2.1" fill="#5f7f50" opacity=".7" transform="rotate(35 93.1 38.4)"/><rect x="89.8" y="33.5" width="2.8" height="1.1" fill="#7a6248" opacity=".7" transform="rotate(35 89.8 33.5)"/><rect x="44.5" y="18.3" width="2.4" height="1.7" fill="#6a7a62" opacity=".7" transform="rotate(35 44.5 18.3)"/><rect x="79.1" y="27.9" width="1.6" height="1.1" fill="#6a7a62" opacity=".7" transform="rotate(35 79.1 27.9)"/><rect x="55.6" y="27.3" width="2.7" height="2.1" fill="#6a7a62" opacity=".7" transform="rotate(35 55.6 27.3)"/><rect x="77.4" y="22.7" width="2.7" height="1.3" fill="#b8a058" opacity=".7" transform="rotate(35 77.4 22.7)"/><rect x="98.8" y="29.6" width="1.9" height="1.1" fill="#c4bca8" opacity=".7" transform="rotate(35 98.8 29.6)"/><rect x="93.2" y="33.0" width="1.7" height="2.0" fill="#6a7a62" opacity=".7" transform="rotate(35 93.2 33.0)"/><rect x="32.3" y="7.8" width="2.4" height="1.2" fill="#6a7a62" opacity=".7" transform="rotate(35 32.3 7.8)"/><rect x="64.9" y="30.5" width="1.6" height="1.5" fill="#7a6248" opacity=".7" transform="rotate(35 64.9 30.5)"/><rect x="27.2" y="-0.6" width="2.5" height="1.3" fill="#b0a480" opacity=".7" transform="rotate(35 27.2 -0.6)"/><rect x="57.1" y="17.1" width="2.8" height="1.1" fill="#4a6a44" opacity=".7" transform="rotate(35 57.1 17.1)"/><rect x="98.9" y="41.7" width="1.4" height="1.9" fill="#a86e4c" opacity=".7" transform="rotate(35 98.9 41.7)"/><rect x="57.2" y="19.8" width="1.6" height="1.5" fill="#c4bca8" opacity=".7" transform="rotate(35 57.2 19.8)"/><rect x="89.5" y="39.0" width="1.7" height="2.2" fill="#a08a58" opacity=".7" transform="rotate(35 89.5 39.0)"/><rect x="61.5" y="23.7" width="1.9" height="1.9" fill="#8e5e46" opacity=".7" transform="rotate(35 61.5 23.7)"/><rect x="47.0" y="15.9" width="1.9" height="1.3" fill="#7a6248" opacity=".7" transform="rotate(35 47.0 15.9)"/><rect x="31.7" y="15.9" width="2.3" height="1.2" fill="#b0a480" opacity=".7" transform="rotate(35 31.7 15.9)"/><rect x="95.8" y="36.4" width="2.4" height="1.2" fill="#7a6248" opacity=".7" transform="rotate(35 95.8 36.4)"/><rect x="77.0" y="31.1" width="2.1" height="1.2" fill="#b0a480" opacity=".7" transform="rotate(35 77.0 31.1)"/><rect x="80.1" y="33.4" width="2.7" height="1.6" fill="#a86e4c" opacity=".7" transform="rotate(35 80.1 33.4)"/><rect x="57.6" y="27.8" width="2.0" height="1.0" fill="#6a7a62" opacity=".7" transform="rotate(35 57.6 27.8)"/><rect x="38.0" y="8.2" width="2.1" height="2.2" fill="#a08a58" opacity=".7" transform="rotate(35 38.0 8.2)"/><rect x="36.6" y="15.7" width="1.2" height="1.6" fill="#6a7a62" opacity=".7" transform="rotate(35 36.6 15.7)"/><rect x="95.5" y="36.7" width="1.6" height="2.0" fill="#a86e4c" opacity=".7" transform="rotate(35 95.5 36.7)"/><rect x="91.5" y="32.2" width="2.6" height="1.3" fill="#b0a480" opacity=".7" transform="rotate(35 91.5 32.2)"/><rect x="100.3" y="38.3" width="2.0" height="1.6" fill="#a08a58" opacity=".7" transform="rotate(35 100.3 38.3)"/><rect x="39.7" y="23.1" width="1.5" height="1.4" fill="#8e5e46" opacity=".7" transform="rotate(35 39.7 23.1)"/><rect x="82.8" y="27.0" width="2.3" height="1.2" fill="#a08a58" opacity=".7" transform="rotate(35 82.8 27.0)"/><rect x="92.9" y="33.0" width="1.6" height="1.5" fill="#a86e4c" opacity=".7" transform="rotate(35 92.9 33.0)"/><rect x="96.6" y="28.4" width="1.4" height="1.6" fill="#8e5e46" opacity=".7" transform="rotate(35 96.6 28.4)"/><rect x="79.5" y="25.2" width="2.6" height="1.6" fill="#b8b09a" opacity=".7" transform="rotate(35 79.5 25.2)"/><rect x="87.9" y="35.5" width="2.4" height="1.2" fill="#a08a58" opacity=".7" transform="rotate(35 87.9 35.5)"/><rect x="97.4" y="36.4" width="2.5" height="1.6" fill="#c4bca8" opacity=".7" transform="rotate(35 97.4 36.4)"/><path d="M26 2L34 10L40 18" stroke="#8fb0c8" stroke-width=".7" fill="none" opacity=".7"/><polygon points="50.300,40 53.400,44.400 59.200,41.700 62.400,37.500 61,34.100 55,34" fill="#1d4023"/><polygon points="37.900,112 51.200,96.500 68.400,112 52,132.600 47.700,125.700" fill="#a89d8b"/><polygon points="44,110 52,101 60,110 52,120" fill="#b8ad9c"/><polygon points="52,132.600 68.400,113.700 81.300,124.900 71,141.200" fill="#6a5a44"/><polygon points="60,123 68.400,113.700 75,119.500 66,130" fill="#77684e"/><polygon points="68.400,112 69.200,109.400 90.800,128.800 83,126.600" fill="#2a5a26"/><polygon points="71,143 83,126.600 90.800,130.900 68.100,162 57,162" fill="#b88a38"/><polygon points="68.100,162 90.800,131.800 96.800,136 77.800,162" fill="#c99682"/><polygon points="77.800,162 97.700,136.400 102,140.400 86.200,162" fill="#9aa04a"/><polygon points="86.200,162 102.800,140.900 122,160 120,162" fill="#b05a48"/><polygon points="52,132.600 71,141.200 57,162 44,162 50,140" fill="#4a5a3c"/></g><rect x="-30" y="-10" width="220" height="180" filter="url(#nz)" opacity=".38"/><rect x="-30" y="-10" width="220" height="180" filter="url(#nzl)" opacity=".07"/><clipPath id="cpm4"><polygon points="44.3,27.2 53.4,34.1 50.3,40.0 53.4,44.4 59.2,41.7 62.4,37.5 61.0,34.1 64.9,26.4 79.6,31.9 93.9,42.2 101.4,35.7 108.3,43.1 96.3,55.5 127.5,83.5 90.8,128.8 69.2,109.4 43.1,86.1 28.8,60.3 43.1,43.9"/></clipPath><g clip-path="url(#cpm4)"><rect x="20" y="20" width="115" height="115" fill="#eef622"/><polygon points="44.300,27.200 53.400,34.100 50.300,40 52,43 46,47 40,50 43,44" fill="#35a6e8"/><polygon points="101.400,35.700 108.300,43.100 100,52 94,42" fill="#35a6e8"/><g stroke="#35a6e8" fill="none" filter="url(#b05)"><path d="M28.800 60.300L43.100 86.100L69.200 109.400L90.800 128.800L127.500 83.500" stroke-width="2.600" stroke-dasharray="5 2 9 3"/><path d="M30 61L37 54" stroke-width="3.500"/></g><g stroke-width=".8" fill="none"><path d="M30.0 62.0l94.3 84.8" stroke="#3fc238" stroke-dasharray="3 4 5 4" opacity=".85"/><path d="M32.4 59.7l91.0 81.9" stroke="#7ad83a" stroke-dasharray="3 5 6 3" opacity=".85"/><path d="M34.8 57.5l78.1 70.3" stroke="#3fc238" stroke-dasharray="3 3 5 8" opacity=".85"/><path d="M37.2 55.2l85.8 77.2" stroke="#35a6e8" stroke-dasharray="1 6 3 3" opacity=".85"/><path d="M39.6 52.9l78.1 70.3" stroke="#3fc238" stroke-dasharray="1 3 3 6" opacity=".85"/><path d="M42.0 50.7l94.2 84.8" stroke="#7ad83a" stroke-dasharray="1 2 2 9" opacity=".85"/><path d="M44.4 48.4l86.0 77.4" stroke="#35a6e8" stroke-dasharray="3 7 6 9" opacity=".85"/><path d="M46.8 46.1l93.1 83.8" stroke="#3fc238" stroke-dasharray="3 2 6 3" opacity=".85"/><path d="M49.2 43.9l80.8 72.8" stroke="#3fc238" stroke-dasharray="3 2 4 5" opacity=".85"/><path d="M51.6 41.6l86.2 77.6" stroke="#3fc238" stroke-dasharray="1 6 6 5" opacity=".85"/><path d="M54.0 39.3l72.1 64.9" stroke="#3fc238" stroke-dasharray="4 2 6 4" opacity=".85"/><path d="M56.4 37.1l92.1 82.9" stroke="#7ad83a" stroke-dasharray="3 4 3 8" opacity=".85"/><path d="M58.8 34.8l72.2 65.0" stroke="#35a6e8" stroke-dasharray="4 6 6 4" opacity=".85"/><path d="M61.2 32.5l86.3 77.6" stroke="#3fc238" stroke-dasharray="3 5 6 5" opacity=".85"/><path d="M63.6 30.3l85.3 76.8" stroke="#7ad83a" stroke-dasharray="3 2 3 5" opacity=".85"/><path d="M66.0 28.0l75.5 68.0" stroke="#7ad83a" stroke-dasharray="4 2 4 4" opacity=".85"/><path d="M32.0 66.0l55.9 50.3" stroke="#3fc238" stroke-dasharray="3 6 4 6" opacity=".85"/><path d="M33.3 68.4l38.1 34.3" stroke="#3fc238" stroke-dasharray="3 2 2 4" opacity=".85"/><path d="M34.7 70.9l46.5 41.9" stroke="#35a6e8" stroke-dasharray="4 7 2 7" opacity=".85"/><path d="M36.0 73.3l41.6 37.5" stroke="#35a6e8" stroke-dasharray="3 7 2 7" opacity=".85"/><path d="M37.3 75.8l36.8 33.1" stroke="#3fc238" stroke-dasharray="4 4 4 4" opacity=".85"/><path d="M38.7 78.2l50.3 45.2" stroke="#35a6e8" stroke-dasharray="1 7 5 5" opacity=".85"/><path d="M40.0 80.7l53.5 48.2" stroke="#3fc238" stroke-dasharray="4 2 2 6" opacity=".85"/><path d="M41.3 83.1l53.0 47.7" stroke="#3fc238" stroke-dasharray="4 5 6 4" opacity=".85"/><path d="M42.7 85.6l42.5 38.3" stroke="#35a6e8" stroke-dasharray="1 5 5 8" opacity=".85"/><path d="M44.0 88.0l43.7 39.4" stroke="#35a6e8" stroke-dasharray="3 4 5 7" opacity=".85"/></g><g fill="#3fc238" opacity=".8"><rect x="81.8" y="66.6" width="1.3" height="1.1" transform="rotate(42 81.8 66.6)"/><rect x="107.1" y="77.0" width="1.5" height="0.7" transform="rotate(42 107.1 77.0)"/><rect x="60.1" y="45.0" width="1.7" height="0.9" transform="rotate(42 60.1 45.0)"/><rect x="41.6" y="114.8" width="1.3" height="1.1" transform="rotate(42 41.6 114.8)"/><rect x="106.1" y="118.3" width="1.1" height="0.9" transform="rotate(42 106.1 118.3)"/><rect x="112.3" y="33.0" width="0.9" height="0.9" transform="rotate(42 112.3 33.0)"/><rect x="76.8" y="114.8" width="2.0" height="0.9" transform="rotate(42 76.8 114.8)"/><rect x="119.9" y="78.6" width="1.6" height="1.0" transform="rotate(42 119.9 78.6)"/><rect x="67.5" y="64.2" width="1.8" height="0.8" transform="rotate(42 67.5 64.2)"/><rect x="115.5" y="92.9" width="1.6" height="0.7" transform="rotate(42 115.5 92.9)"/><rect x="66.2" y="68.1" width="1.7" height="0.9" transform="rotate(42 66.2 68.1)"/><rect x="109.7" y="118.8" width="1.6" height="0.9" transform="rotate(42 109.7 118.8)"/><rect x="87.7" y="121.7" width="1.3" height="0.9" transform="rotate(42 87.7 121.7)"/><rect x="104.2" y="47.4" width="1.3" height="1.2" transform="rotate(42 104.2 47.4)"/><rect x="105.0" y="78.1" width="1.0" height="1.1" transform="rotate(42 105.0 78.1)"/><rect x="93.3" y="105.8" width="2.4" height="1.1" transform="rotate(42 93.3 105.8)"/><rect x="70.2" y="46.1" width="1.3" height="0.9" transform="rotate(42 70.2 46.1)"/><rect x="77.4" y="48.9" width="1.1" height="1.0" transform="rotate(42 77.4 48.9)"/><rect x="85.9" y="63.8" width="2.4" height="1.0" transform="rotate(42 85.9 63.8)"/><rect x="37.6" y="69.0" width="2.1" height="0.8" transform="rotate(42 37.6 69.0)"/><rect x="93.4" y="32.4" width="1.3" height="1.1" transform="rotate(42 93.4 32.4)"/><rect x="84.4" y="92.1" width="1.1" height="0.9" transform="rotate(42 84.4 92.1)"/><rect x="81.6" y="55.9" width="1.8" height="0.9" transform="rotate(42 81.6 55.9)"/><rect x="119.8" y="83.7" width="1.5" height="0.7" transform="rotate(42 119.8 83.7)"/><rect x="47.5" y="100.4" width="1.0" height="0.7" transform="rotate(42 47.5 100.4)"/><rect x="48.7" y="79.0" width="2.1" height="1.0" transform="rotate(42 48.7 79.0)"/><rect x="103.4" y="37.6" width="0.8" height="1.1" transform="rotate(42 103.4 37.6)"/><rect x="61.8" y="96.4" width="1.4" height="0.7" transform="rotate(42 61.8 96.4)"/><rect x="56.9" y="41.0" width="2.2" height="0.9" transform="rotate(42 56.9 41.0)"/><rect x="64.0" y="72.5" width="1.4" height="0.6" transform="rotate(42 64.0 72.5)"/><rect x="110.6" y="84.4" width="2.3" height="0.9" transform="rotate(42 110.6 84.4)"/><rect x="87.3" y="54.4" width="0.9" height="1.2" transform="rotate(42 87.3 54.4)"/><rect x="107.5" y="60.3" width="2.2" height="1.1" transform="rotate(42 107.5 60.3)"/><rect x="60.1" y="86.2" width="2.3" height="0.9" transform="rotate(42 60.1 86.2)"/><rect x="115.7" y="53.9" width="1.4" height="1.0" transform="rotate(42 115.7 53.9)"/><rect x="53.0" y="59.8" width="2.2" height="0.9" transform="rotate(42 53.0 59.8)"/><rect x="102.2" y="53.9" width="1.1" height="0.8" transform="rotate(42 102.2 53.9)"/><rect x="50.0" y="119.4" width="1.3" height="0.9" transform="rotate(42 50.0 119.4)"/><rect x="43.9" y="80.0" width="1.4" height="0.8" transform="rotate(42 43.9 80.0)"/><rect x="39.6" y="43.1" width="2.1" height="0.8" transform="rotate(42 39.6 43.1)"/><rect x="55.1" y="49.2" width="1.3" height="0.7" transform="rotate(42 55.1 49.2)"/><rect x="37.0" y="91.8" width="1.3" height="0.7" transform="rotate(42 37.0 91.8)"/><rect x="94.7" y="40.3" width="1.2" height="1.1" transform="rotate(42 94.7 40.3)"/><rect x="45.0" y="71.9" width="2.1" height="1.1" transform="rotate(42 45.0 71.9)"/><rect x="47.7" y="63.8" width="2.0" height="0.8" transform="rotate(42 47.7 63.8)"/><rect x="116.4" y="50.7" width="2.3" height="0.9" transform="rotate(42 116.4 50.7)"/><rect x="53.5" y="72.7" width="1.0" height="1.0" transform="rotate(42 53.5 72.7)"/><rect x="56.4" y="113.0" width="1.7" height="0.8" transform="rotate(42 56.4 113.0)"/><rect x="55.2" y="86.7" width="1.1" height="1.1" transform="rotate(42 55.2 86.7)"/><rect x="44.6" y="78.2" width="1.7" height="0.8" transform="rotate(42 44.6 78.2)"/><rect x="100.4" y="66.6" width="1.9" height="0.9" transform="rotate(42 100.4 66.6)"/><rect x="60.7" y="67.1" width="0.9" height="0.7" transform="rotate(42 60.7 67.1)"/><rect x="107.2" y="60.9" width="1.9" height="0.7" transform="rotate(42 107.2 60.9)"/><rect x="82.3" y="64.5" width="1.6" height="0.8" transform="rotate(42 82.3 64.5)"/><rect x="39.7" y="60.0" width="1.2" height="0.7" transform="rotate(42 39.7 60.0)"/><rect x="95.6" y="57.4" width="1.4" height="1.1" transform="rotate(42 95.6 57.4)"/><rect x="100.6" y="111.4" width="2.2" height="0.7" transform="rotate(42 100.6 111.4)"/><rect x="57.8" y="34.7" width="1.9" height="1.0" transform="rotate(42 57.8 34.7)"/><rect x="64.2" y="69.1" width="1.9" height="1.0" transform="rotate(42 64.2 69.1)"/><rect x="55.4" y="108.2" width="1.4" height="1.0" transform="rotate(42 55.4 108.2)"/></g></g><text x="46.800" y="24.300" font-size="2.900" fill="#fff" font-weight="700" font-family="Liberation Sans, sans-serif" opacity=".92">Вовківці</text></g><rect x="0.300" y="3.800" width="5.500" height="6.900" fill="#fafafa"/><path d="M2.200 6.400l1.800 1.800m0 -1.800l-1.800 1.800" stroke="#777" stroke-width=".5"/><rect x="67.2" y="9" width="32.7" height="8" fill="#f6f6f6"/><text x="68.8" y="14" font-size="2.800" fill="#444" font-family="Liberation Sans, sans-serif">2023 Кукурудза</text><path d="M94.9 12.300l1.500 1.600l1.500 -1.600" stroke="#666" stroke-width=".5" fill="none"/><rect x="104.3" y="9" width="33" height="8" fill="#f6f6f6"/><text x="105.89999999999999" y="14" font-size="2.800" fill="#444" font-family="Liberation Sans, sans-serif">Швидкість сіва...</text><path d="M132.3 12.300l1.500 1.600l1.500 -1.600" stroke="#666" stroke-width=".5" fill="none"/><rect x="141.600" y="9" width="8.200" height="8" fill="#f6f6f6"/><rect x="143.800" y="11.200" width="3.800" height="3.800" fill="none" stroke="#777" stroke-width=".5"/><rect x="154.500" y="9" width="4" height="8" fill="#f6f6f6"/><rect x="129.200" y="132.400" width="8.100" height="8.400" fill="#f6f6f6"/><circle cx="133.300" cy="136.600" r="2.200" fill="none" stroke="#666" stroke-width=".5"/><rect x="141.600" y="132.400" width="8.200" height="8.400" fill="#f6f6f6"/><path d="M145.700 134.300v4.600" stroke="#444" stroke-width=".7"/><rect x="144.700" y="134.300" width="2" height="1.800" fill="#444"/><rect x="154.500" y="132.400" width="4" height="8.400" fill="#f6f6f6"/><rect x="2" y="140.300" width="15" height="1.500" fill="#dfe6df" opacity=".75"/><rect x="2" y="142.800" width="6" height="1.500" fill="#fff" opacity=".8"/><rect x="143" y="1.800" width="13" height="1.500" fill="#111" opacity=".8"/><rect x="141" y="88" width="17" height="38" fill="#f8f8f8"/><text x="143.5" y="93.2" font-size="2.500" fill="#555" font-family="Liberation Sans, sans-serif">Редагувати</text><rect x="141" y="95.5" width="17" height=".5" fill="#ddd"/><rect x="155.7" y="99.0" width="1.800" height="6.3" fill="#f0a860"/><text x="154.8" y="102.9" font-size="2.300" fill="#666" text-anchor="end" font-family="Liberation Sans, sans-serif">&gt; 79,9</text><rect x="155.7" y="105.2" width="1.800" height="6.3" fill="#eef622"/><text x="154.8" y="109.2" font-size="2.300" fill="#666" text-anchor="end" font-family="Liberation Sans, sans-serif">78,4 - 79,9</text><rect x="155.7" y="111.5" width="1.800" height="6.3" fill="#3fc238"/><text x="154.8" y="115.4" font-size="2.300" fill="#666" text-anchor="end" font-family="Liberation Sans, sans-serif">76,8 - 78,4</text><rect x="155.7" y="117.8" width="1.800" height="6.3" fill="#35a6e8"/><text x="154.8" y="121.7" font-size="2.300" fill="#666" text-anchor="end" font-family="Liberation Sans, sans-serif">75,2 - 76,8</text></svg><g font-family="Liberation Sans, sans-serif"><circle cx="9" cy="151.400" r="1.700" fill="none" stroke="#444" stroke-width=".6"/><text x="12.5" y="152.300" font-size="2.600" fill="#858585">Головна сторінка</text><rect x="49.500" y="149.800" width="3.300" height="3.300" rx=".6" fill="#3a86e8"/><text x="54.3" y="152.300" font-size="2.600" fill="#3a86e8">Поле</text><rect x="76.800" y="149.600" width="2.600" height="3.600" fill="none" stroke="#444" stroke-width=".6"/><text x="82" y="152.300" font-size="2.600" fill="#858585">Звіти</text><rect x="103.600" y="149.700" width="3.400" height="3.400" fill="none" stroke="#444" stroke-width=".6"/><path d="M105.300 149.700v3.400M103.600 151.400h3.400" stroke="#444" stroke-width=".4"/><text x="109.3" y="152.300" font-size="2.600" fill="#858585">Карти завдань</text><circle cx="144" cy="151.400" r="1.700" fill="#555"/><circle cx="144" cy="151.400" r=".6" fill="#fff"/><text x="148" y="152.300" font-size="2.600" fill="#858585">Налаштування</text><path d="M180.500 152.500v-2h2.500l1 -1h1.500v3z" fill="#555"/><circle cx="181.500" cy="153" r=".9" fill="#333"/><circle cx="185" cy="153" r="1.100" fill="#333"/><text x="188" y="152.300" font-size="2.600" fill="#858585">Field View Cab</text><rect x="75.500" y="155.800" width="60" height="1.300" rx=".6" fill="#222"/></g></svg>
<svg style="left:548.4px;top:462.8px;overflow:hidden" width="212" height="162" viewBox="0 -2 212 162"><g font-family="Liberation Sans, sans-serif"><text x="0" y="2.9" font-size="2.3" fill="#555" font-weight="400" text-anchor="start">‹ 14:37 год.</text><text x="0" y="10.4" font-size="2.9" fill="#2a7ae8" font-weight="400" text-anchor="start">Назад</text><text x="10.6" y="10.4" font-size="2.9" fill="#111" font-weight="700" text-anchor="start">Чевгузів 11.(50)</text><rect x="0" y="14.200" width="53" height=".5" fill="#e2e2e2"/><text x="0" y="19.7" font-size="2.7" fill="#777" font-weight="400" text-anchor="start">11 га • Кукурудза 2023 • 871 Новоставці,</text><text x="0" y="22.8" font-size="2.7" fill="#777" font-weight="400" text-anchor="start">Кукурузи</text><rect x="0" y="26.7" width="53.300" height="8" fill="#eeeeee"/><rect x="0" y="61" width="53.300" height="8" fill="#eeeeee"/><rect x="0" y="95.6" width="53.300" height="8" fill="#eeeeee"/><rect x="0" y="130" width="53.300" height="8" fill="#eeeeee"/><text x="0" y="40.3" font-size="2.9" fill="#111" font-weight="700" text-anchor="start">ля</text><text x="22" y="48.6" font-size="2.7" fill="#777" font-weight="400" text-anchor="middle">Обробка даних про поля…</text><text x="0" y="74.3" font-size="2.9" fill="#111" font-weight="700" text-anchor="start">ки та ділянки</text><text x="23" y="82.4" font-size="2.7" fill="#777" font-weight="400" text-anchor="middle">Для цього сезону немає збережених</text><text x="23" y="85.4" font-size="2.7" fill="#777" font-weight="400" text-anchor="middle">зон або ділянок.</text><text x="0" y="108.7" font-size="2.9" fill="#111" font-weight="700" text-anchor="start">нотатки до поля</text><circle cx="47.200" cy="107.700" r="2.100" fill="#e8f1fc" stroke="#4a90e2" stroke-width=".6"/><text x="23" y="116.7" font-size="2.7" fill="#777" font-weight="400" text-anchor="middle">Немає приміток до поля.</text><text x="24" y="119.7" font-size="2.7" fill="#777" font-weight="400" text-anchor="middle">Натисніть +, щоб додати нову примітку.</text><text x="0" y="143.8" font-size="2.9" fill="#111" font-weight="700" text-anchor="start">границі поля</text></g><svg x="53.3" y="0" width="158" height="146" viewBox="0 0 158 146" overflow="hidden"><g transform="translate(0,0) scale(1)"><g filter="url(#b05)"><rect x="-30" y="-10" width="220" height="180" fill="#2d5232"/><polygon points="-30,-10 27,-10 45,27 29,60 -30,20" fill="#3a6334"/><polygon points="3,2 24,1 40,28 27,52 2,30" fill="#40683a"/><polygon points="-30,40 10,52 26,66 42,88 50,98 38,112 50,132 44,170 -30,170" fill="#21442c"/><polygon points="0,62 14,58 30,80 36,100 22,116 8,104 0,108" fill="#1c3b27"/><polygon points="-30,126 16,115 33,132 28,170 -30,170" fill="#3f6239"/><polygon points="2,64 10,60 14,70 6,78" fill="#143621"/><path d="M0 36L30 58M4 56L28 60" stroke="#6b7f58" stroke-width=".8" fill="none" opacity=".7"/><polygon points="28,-10 190,-10 190,12 100,14 64,8" fill="#375c31"/><polygon points="100,14 130,12 128,30 112,34 96,24" fill="#447a37"/><polygon points="133,-10 190,-10 190,30 151.900,34.400 128.700,29.300 130.400,12" fill="#95866a"/><polygon points="136,2 156,0 152,26 135,24" fill="#a8977a"/><polygon points="128,30 152,35 158,34 190,40 190,52 150,50 130,44" fill="#2b4e30"/><polygon points="135,44 190,52 190,78 142,74 132,68" fill="#26482d"/><polygon points="141.600,77.500 190,90 190,104 148.500,95.600" fill="#a3917a"/><polygon points="127.500,83.500 148,96 190,106 190,170 118,170 90.800,128.800" fill="#305532"/><polygon points="96.300,55.500 108.900,43.600 122.600,46.500 134.700,54.300 134.700,63.700 130.400,70.600 127.500,83.500" fill="#5d4b47"/><polygon points="104,60 110,56 120,66 116,72" fill="#6f7a45" opacity=".8"/><path d="M24 0L46 22L66 24L84 30L104 40" stroke="#3f5f40" stroke-width="14" fill="none" stroke-linejoin="round"/><rect x="34.6" y="21.8" width="2.4" height="1.9" fill="#a08a58" opacity=".7" transform="rotate(35 34.6 21.8)"/><rect x="59.9" y="22.3" width="2.4" height="1.2" fill="#587850" opacity=".7" transform="rotate(35 59.9 22.3)"/><rect x="24.8" y="5.4" width="1.5" height="2.0" fill="#b8a058" opacity=".7" transform="rotate(35 24.8 5.4)"/><rect x="66.1" y="29.9" width="2.3" height="1.7" fill="#a08a58" opacity=".7" transform="rotate(35 66.1 29.9)"/><rect x="37.5" y="12.0" width="2.6" height="2.1" fill="#b8a058" opacity=".7" transform="rotate(35 37.5 12.0)"/><rect x="67.4" y="23.0" width="1.4" height="1.9" fill="#b8b09a" opacity=".7" transform="rotate(35 67.4 23.0)"/><rect x="84.0" y="36.9" width="1.9" height="1.9" fill="#587850" opacity=".7" transform="rotate(35 84.0 36.9)"/><rect x="70.4" y="27.2" width="1.8" height="2.1" fill="#6a7a62" opacity=".7" transform="rotate(35 70.4 27.2)"/><rect x="101.1" y="40.5" width="2.5" height="1.8" fill="#6a7a62" opacity=".7" transform="rotate(35 101.1 40.5)"/><rect x="69.1" y="20.1" width="2.3" height="2.0" fill="#7a6248" opacity=".7" transform="rotate(35 69.1 20.1)"/><rect x="60.8" y="30.2" width="2.5" height="1.7" fill="#7a6248" opacity=".7" transform="rotate(35 60.8 30.2)"/><rect x="75.9" y="27.0" width="2.1" height="1.3" fill="#a08a58" opacity=".7" transform="rotate(35 75.9 27.0)"/><rect x="36.6" y="9.1" width="2.2" height="1.2" fill="#4a6a44" opacity=".7" transform="rotate(35 36.6 9.1)"/><rect x="83.3" y="25.3" width="1.6" height="1.6" fill="#6a7a62" opacity=".7" transform="rotate(35 83.3 25.3)"/><rect x="37.7" y="14.5" width="1.4" height="1.8" fill="#b8a058" opacity=".7" transform="rotate(35 37.7 14.5)"/><rect x="68.2" y="29.9" width="2.1" height="1.9" fill="#7a6248" opacity=".7" transform="rotate(35 68.2 29.9)"/><rect x="73.9" y="35.0" width="2.5" height="1.5" fill="#b8b09a" opacity=".7" transform="rotate(35 73.9 35.0)"/><rect x="31.1" y="8.1" width="1.5" height="1.1" fill="#5f7f50" opacity=".7" transform="rotate(35 31.1 8.1)"/><rect x="44.9" y="19.8" width="2.7" height="1.2" fill="#6a7a62" opacity=".7" transform="rotate(35 44.9 19.8)"/><rect x="61.6" y="19.1" width="1.3" height="1.0" fill="#6a7a62" opacity=".7" transform="rotate(35 61.6 19.1)"/><rect x="34.4" y="14.1" width="2.1" height="1.1" fill="#6a7a62" opacity=".7" transform="rotate(35 34.4 14.1)"/><rect x="100.4" y="42.2" width="1.7" height="1.4" fill="#b0a480" opacity=".7" transform="rotate(35 100.4 42.2)"/><rect x="78.2" y="33.6" width="2.2" height="1.3" fill="#b8b09a" opacity=".7" transform="rotate(35 78.2 33.6)"/><rect x="34.3" y="0.2" width="1.8" height="1.2" fill="#a86e4c" opacity=".7" transform="rotate(35 34.3 0.2)"/><rect x="42.3" y="21.2" width="2.7" height="1.2" fill="#587850" opacity=".7" transform="rotate(35 42.3 21.2)"/><rect x="93.8" y="30.8" width="1.5" height="2.0" fill="#a86e4c" opacity=".7" transform="rotate(35 93.8 30.8)"/><rect x="39.2" y="26.1" width="2.5" height="1.3" fill="#a08a58" opacity=".7" transform="rotate(35 39.2 26.1)"/><rect x="28.6" y="5.4" width="2.5" height="1.8" fill="#a08a58" opacity=".7" transform="rotate(35 28.6 5.4)"/><rect x="99.5" y="37.8" width="1.5" height="1.4" fill="#b8a058" opacity=".7" transform="rotate(35 99.5 37.8)"/><rect x="70.1" y="23.2" width="1.4" height="1.8" fill="#c4bca8" opacity=".7" transform="rotate(35 70.1 23.2)"/><rect x="25.4" y="7.0" width="1.5" height="1.9" fill="#a08a58" opacity=".7" transform="rotate(35 25.4 7.0)"/><rect x="28.4" y="7.5" width="2.0" height="1.2" fill="#b0a480" opacity=".7" transform="rotate(35 28.4 7.5)"/><rect x="77.8" y="26.8" width="1.7" height="1.5" fill="#4a6a44" opacity=".7" transform="rotate(35 77.8 26.8)"/><rect x="95.9" y="41.4" width="1.8" height="1.0" fill="#b8a058" opacity=".7" transform="rotate(35 95.9 41.4)"/><rect x="79.6" y="27.8" width="2.1" height="1.6" fill="#c4bca8" opacity=".7" transform="rotate(35 79.6 27.8)"/><rect x="107.4" y="44.0" width="2.8" height="2.2" fill="#b8a058" opacity=".7" transform="rotate(35 107.4 44.0)"/><rect x="35.5" y="10.3" width="1.7" height="1.8" fill="#b8a058" opacity=".7" transform="rotate(35 35.5 10.3)"/><rect x="77.5" y="25.4" width="2.2" height="1.4" fill="#a86e4c" opacity=".7" transform="rotate(35 77.5 25.4)"/><rect x="70.1" y="29.6" width="1.6" height="1.9" fill="#587850" opacity=".7" transform="rotate(35 70.1 29.6)"/><rect x="33.7" y="5.7" width="2.1" height="1.5" fill="#8e5e46" opacity=".7" transform="rotate(35 33.7 5.7)"/><rect x="44.3" y="17.8" width="1.6" height="2.2" fill="#b8b09a" opacity=".7" transform="rotate(35 44.3 17.8)"/><rect x="64.0" y="30.2" width="1.6" height="1.1" fill="#8e5e46" opacity=".7" transform="rotate(35 64.0 30.2)"/><rect x="81.2" y="24.3" width="1.9" height="1.6" fill="#587850" opacity=".7" transform="rotate(35 81.2 24.3)"/><rect x="34.1" y="11.2" width="1.3" height="1.5" fill="#b0a480" opacity=".7" transform="rotate(35 34.1 11.2)"/><rect x="82.9" y="32.1" width="2.0" height="2.0" fill="#b0a480" opacity=".7" transform="rotate(35 82.9 32.1)"/><rect x="81.6" y="27.3" width="1.9" height="1.8" fill="#8e5e46" opacity=".7" transform="rotate(35 81.6 27.3)"/><rect x="45.5" y="16.0" width="2.4" height="1.2" fill="#b8a058" opacity=".7" transform="rotate(35 45.5 16.0)"/><rect x="25.4" y="3.3" width="1.2" height="1.7" fill="#b8b09a" opacity=".7" transform="rotate(35 25.4 3.3)"/><rect x="57.5" y="18.6" width="2.7" height="1.1" fill="#b8b09a" opacity=".7" transform="rotate(35 57.5 18.6)"/><rect x="76.4" y="30.7" width="1.5" height="1.9" fill="#a86e4c" opacity=".7" transform="rotate(35 76.4 30.7)"/><rect x="91.6" y="25.3" width="1.6" height="1.3" fill="#8e5e46" opacity=".7" transform="rotate(35 91.6 25.3)"/><rect x="89.4" y="32.8" width="1.3" height="1.7" fill="#b0a480" opacity=".7" transform="rotate(35 89.4 32.8)"/><rect x="52.0" y="24.3" width="1.3" height="2.1" fill="#b8b09a" opacity=".7" transform="rotate(35 52.0 24.3)"/><rect x="42.1" y="21.3" width="2.5" height="1.7" fill="#b0a480" opacity=".7" transform="rotate(35 42.1 21.3)"/><rect x="87.1" y="25.7" width="1.6" height="1.2" fill="#5f7f50" opacity=".7" transform="rotate(35 87.1 25.7)"/><rect x="96.3" y="39.7" width="2.1" height="1.3" fill="#587850" opacity=".7" transform="rotate(35 96.3 39.7)"/><rect x="81.7" y="29.7" width="1.2" height="2.2" fill="#6a7a62" opacity=".7" transform="rotate(35 81.7 29.7)"/><rect x="71.4" y="28.2" width="1.3" height="1.2" fill="#4a6a44" opacity=".7" transform="rotate(35 71.4 28.2)"/><rect x="77.4" y="28.0" width="1.5" height="2.0" fill="#c4bca8" opacity=".7" transform="rotate(35 77.4 28.0)"/><rect x="50.6" y="20.4" width="1.8" height="1.6" fill="#5f7f50" opacity=".7" transform="rotate(35 50.6 20.4)"/><path d="M26 2L34 10L40 18" stroke="#8fb0c8" stroke-width=".7" fill="none" opacity=".7"/><polygon points="50.300,40 53.400,44.400 59.200,41.700 62.400,37.500 61,34.100 55,34" fill="#1d4023"/><polygon points="37.900,112 51.200,96.500 68.400,112 52,132.600 47.700,125.700" fill="#a89d8b"/><polygon points="44,110 52,101 60,110 52,120" fill="#b8ad9c"/><polygon points="52,132.600 68.400,113.700 81.300,124.900 71,141.200" fill="#6a5a44"/><polygon points="60,123 68.400,113.700 75,119.500 66,130" fill="#77684e"/><polygon points="68.400,112 69.200,109.400 90.800,128.800 83,126.600" fill="#2a5a26"/><polygon points="71,143 83,126.600 90.800,130.900 68.100,162 57,162" fill="#b88a38"/><polygon points="68.100,162 90.800,131.800 96.800,136 77.800,162" fill="#c99682"/><polygon points="77.800,162 97.700,136.400 102,140.400 86.200,162" fill="#9aa04a"/><polygon points="86.200,162 102.800,140.900 122,160 120,162" fill="#b05a48"/><polygon points="52,132.600 71,141.200 57,162 44,162 50,140" fill="#4a5a3c"/></g><rect x="-30" y="-10" width="220" height="180" filter="url(#nz)" opacity=".38"/><rect x="-30" y="-10" width="220" height="180" filter="url(#nzl)" opacity=".07"/><clipPath id="cpm5"><polygon points="44.3,27.2 53.4,34.1 50.3,40.0 53.4,44.4 59.2,41.7 62.4,37.5 61.0,34.1 64.9,26.4 79.6,31.9 93.9,42.2 101.4,35.7 108.3,43.1 96.3,55.5 127.5,83.5 90.8,128.8 69.2,109.4 43.1,86.1 28.8,60.3 43.1,43.9"/></clipPath><g clip-path="url(#cpm5)"><defs><linearGradient id="tgm5" gradientUnits="userSpaceOnUse" x1="30" y1="110" x2="110" y2="40"><stop offset="0" stop-color="#b0a6f2"/><stop offset=".13" stop-color="#b0a6f2"/><stop offset=".16" stop-color="#f2dcb0"/><stop offset=".19" stop-color="#b0a6f2"/><stop offset=".40" stop-color="#b4aaf0"/><stop offset=".47" stop-color="#e8c4c4"/><stop offset=".53" stop-color="#f0a8a0"/><stop offset=".58" stop-color="#f2e2a0"/><stop offset=".64" stop-color="#d8c8e8"/><stop offset=".72" stop-color="#b8b0f2"/><stop offset="1" stop-color="#b0a6f2"/></linearGradient></defs><rect x="20" y="20" width="115" height="115" fill="url(#tgm5)"/><polygon points="44.3,27.2 53.4,34.1 50.3,40.0 53.4,44.4 59.2,41.7 62.4,37.5 61.0,34.1 64.9,26.4 79.6,31.9 93.9,42.2 101.4,35.7 108.3,43.1 96.3,55.5 127.5,83.5 90.8,128.8 69.2,109.4 43.1,86.1 28.8,60.3 43.1,43.9" fill="none" stroke="#f5e6c8" stroke-width="1.200"/></g><text x="46.800" y="24.300" font-size="2.900" fill="#fff" font-weight="700" font-family="Liberation Sans, sans-serif" opacity=".92">Вовківці</text></g><rect x="0.300" y="3.800" width="5.500" height="6.900" fill="#fafafa"/><path d="M2.200 6.400l1.800 1.800m0 -1.800l-1.800 1.800" stroke="#777" stroke-width=".5"/><rect x="67.2" y="9" width="32.7" height="8" fill="#f6f6f6"/><text x="68.8" y="14" font-size="2.800" fill="#444" font-family="Liberation Sans, sans-serif">2023 Кукурудза</text><path d="M94.9 12.300l1.500 1.600l1.500 -1.600" stroke="#666" stroke-width=".5" fill="none"/><rect x="104.3" y="9" width="33" height="8" fill="#f6f6f6"/><text x="105.89999999999999" y="14" font-size="2.800" fill="#444" font-family="Liberation Sans, sans-serif">Температура ґ...</text><path d="M132.3 12.300l1.500 1.600l1.500 -1.600" stroke="#666" stroke-width=".5" fill="none"/><rect x="141.600" y="9" width="8.200" height="8" fill="#f6f6f6"/><rect x="143.800" y="11.200" width="3.800" height="3.800" fill="none" stroke="#777" stroke-width=".5"/><rect x="154.500" y="9" width="4" height="8" fill="#f6f6f6"/><rect x="129.200" y="132.400" width="8.100" height="8.400" fill="#f6f6f6"/><circle cx="133.300" cy="136.600" r="2.200" fill="none" stroke="#666" stroke-width=".5"/><rect x="141.600" y="132.400" width="8.200" height="8.400" fill="#f6f6f6"/><path d="M145.700 134.300v4.600" stroke="#444" stroke-width=".7"/><rect x="144.700" y="134.300" width="2" height="1.800" fill="#444"/><rect x="154.500" y="132.400" width="4" height="8.400" fill="#f6f6f6"/><rect x="2" y="140.300" width="15" height="1.500" fill="#dfe6df" opacity=".75"/><rect x="2" y="142.800" width="6" height="1.500" fill="#fff" opacity=".8"/><rect x="143" y="1.800" width="13" height="1.500" fill="#111" opacity=".8"/><rect x="141" y="75" width="17" height="51" fill="#f8f8f8"/><text x="143.5" y="80.2" font-size="2.500" fill="#555" font-family="Liberation Sans, sans-serif">Редагувати</text><rect x="141" y="82.5" width="17" height=".5" fill="#ddd"/><rect x="155.7" y="86.0" width="1.800" height="6.4" fill="#e84a4a"/><text x="154.8" y="90.0" font-size="2.300" fill="#666" text-anchor="end" font-family="Liberation Sans, sans-serif">&gt; 79,9</text><rect x="155.7" y="92.3" width="1.800" height="6.4" fill="#f0a040"/><text x="154.8" y="96.3" font-size="2.300" fill="#666" text-anchor="end" font-family="Liberation Sans, sans-serif">78,4 - 79,9</text><rect x="155.7" y="98.7" width="1.800" height="6.4" fill="#f2e23a"/><text x="154.8" y="102.6" font-size="2.300" fill="#666" text-anchor="end" font-family="Liberation Sans, sans-serif">76,8 - 78,4</text><rect x="155.7" y="105.0" width="1.800" height="6.4" fill="#c8b8f0"/><text x="154.8" y="109.0" font-size="2.300" fill="#666" text-anchor="end" font-family="Liberation Sans, sans-serif">75,2 - 76,8</text><rect x="155.7" y="111.3" width="1.800" height="6.4" fill="#a8a0f0"/><text x="154.8" y="115.3" font-size="2.300" fill="#666" text-anchor="end" font-family="Liberation Sans, sans-serif">73,6 - 75,2</text><rect x="155.7" y="117.7" width="1.800" height="6.4" fill="#4a4ae0"/><text x="154.8" y="121.6" font-size="2.300" fill="#666" text-anchor="end" font-family="Liberation Sans, sans-serif">72,1 - 73,6</text></svg><g font-family="Liberation Sans, sans-serif"><circle cx="9" cy="151.400" r="1.700" fill="none" stroke="#444" stroke-width=".6"/><text x="12.5" y="152.300" font-size="2.600" fill="#858585">Головна сторінка</text><rect x="49.500" y="149.800" width="3.300" height="3.300" rx=".6" fill="#3a86e8"/><text x="54.3" y="152.300" font-size="2.600" fill="#3a86e8">Поле</text><rect x="76.800" y="149.600" width="2.600" height="3.600" fill="none" stroke="#444" stroke-width=".6"/><text x="82" y="152.300" font-size="2.600" fill="#858585">Звіти</text><rect x="103.600" y="149.700" width="3.400" height="3.400" fill="none" stroke="#444" stroke-width=".6"/><path d="M105.300 149.700v3.400M103.600 151.400h3.400" stroke="#444" stroke-width=".4"/><text x="109.3" y="152.300" font-size="2.600" fill="#858585">Карти завдань</text><circle cx="144" cy="151.400" r="1.700" fill="#555"/><circle cx="144" cy="151.400" r=".6" fill="#fff"/><text x="148" y="152.300" font-size="2.600" fill="#858585">Налаштування</text><path d="M180.500 152.500v-2h2.500l1 -1h1.500v3z" fill="#555"/><circle cx="181.500" cy="153" r=".9" fill="#333"/><circle cx="185" cy="153" r="1.100" fill="#333"/><text x="188" y="152.300" font-size="2.600" fill="#858585">Field View Cab</text><rect x="75.500" y="155.800" width="60" height="1.300" rx=".6" fill="#222"/></g></svg>
<svg style="left:67.2px;top:621.5px;overflow:hidden" width="212" height="162" viewBox="0 -2 212 162"><g font-family="Liberation Sans, sans-serif"><text x="0" y="2.9" font-size="2.3" fill="#555" font-weight="400" text-anchor="start">‹ 14:37 год.</text><text x="0" y="10.4" font-size="2.9" fill="#2a7ae8" font-weight="400" text-anchor="start">Назад</text><text x="10.6" y="10.4" font-size="2.9" fill="#111" font-weight="700" text-anchor="start">Чевгузів 11.(50)</text><rect x="0" y="14.200" width="53" height=".5" fill="#e2e2e2"/><text x="0" y="19.7" font-size="2.7" fill="#777" font-weight="400" text-anchor="start">11 га • Кукурудза 2023 • 871 Новоставці,</text><text x="0" y="22.8" font-size="2.7" fill="#777" font-weight="400" text-anchor="start">Кукурузи</text><rect x="0" y="26.7" width="53.300" height="8" fill="#eeeeee"/><rect x="0" y="61" width="53.300" height="8" fill="#eeeeee"/><rect x="0" y="95.6" width="53.300" height="8" fill="#eeeeee"/><rect x="0" y="130" width="53.300" height="8" fill="#eeeeee"/><text x="0" y="40.3" font-size="2.9" fill="#111" font-weight="700" text-anchor="start">ля</text><text x="22" y="48.6" font-size="2.7" fill="#777" font-weight="400" text-anchor="middle">Обробка даних про поля…</text><text x="0" y="74.3" font-size="2.9" fill="#111" font-weight="700" text-anchor="start">ки та ділянки</text><text x="23" y="82.4" font-size="2.7" fill="#777" font-weight="400" text-anchor="middle">Для цього сезону немає збережених</text><text x="23" y="85.4" font-size="2.7" fill="#777" font-weight="400" text-anchor="middle">зон або ділянок.</text><text x="0" y="108.7" font-size="2.9" fill="#111" font-weight="700" text-anchor="start">нотатки до поля</text><circle cx="47.200" cy="107.700" r="2.100" fill="#e8f1fc" stroke="#4a90e2" stroke-width=".6"/><text x="23" y="116.7" font-size="2.7" fill="#777" font-weight="400" text-anchor="middle">Немає приміток до поля.</text><text x="24" y="119.7" font-size="2.7" fill="#777" font-weight="400" text-anchor="middle">Натисніть +, щоб додати нову примітку.</text><text x="0" y="143.8" font-size="2.9" fill="#111" font-weight="700" text-anchor="start">границі поля</text></g><svg x="53.3" y="0" width="158" height="146" viewBox="0 0 158 146" overflow="hidden"><g transform="translate(0,0) scale(1)"><g filter="url(#b05)"><rect x="-30" y="-10" width="220" height="180" fill="#2d5232"/><polygon points="-30,-10 27,-10 45,27 29,60 -30,20" fill="#3a6334"/><polygon points="3,2 24,1 40,28 27,52 2,30" fill="#40683a"/><polygon points="-30,40 10,52 26,66 42,88 50,98 38,112 50,132 44,170 -30,170" fill="#21442c"/><polygon points="0,62 14,58 30,80 36,100 22,116 8,104 0,108" fill="#1c3b27"/><polygon points="-30,126 16,115 33,132 28,170 -30,170" fill="#3f6239"/><polygon points="2,64 10,60 14,70 6,78" fill="#143621"/><path d="M0 36L30 58M4 56L28 60" stroke="#6b7f58" stroke-width=".8" fill="none" opacity=".7"/><polygon points="28,-10 190,-10 190,12 100,14 64,8" fill="#375c31"/><polygon points="100,14 130,12 128,30 112,34 96,24" fill="#447a37"/><polygon points="133,-10 190,-10 190,30 151.900,34.400 128.700,29.300 130.400,12" fill="#95866a"/><polygon points="136,2 156,0 152,26 135,24" fill="#a8977a"/><polygon points="128,30 152,35 158,34 190,40 190,52 150,50 130,44" fill="#2b4e30"/><polygon points="135,44 190,52 190,78 142,74 132,68" fill="#26482d"/><polygon points="141.600,77.500 190,90 190,104 148.500,95.600" fill="#a3917a"/><polygon points="127.500,83.500 148,96 190,106 190,170 118,170 90.800,128.800" fill="#305532"/><polygon points="96.300,55.500 108.900,43.600 122.600,46.500 134.700,54.300 134.700,63.700 130.400,70.600 127.500,83.500" fill="#5d4b47"/><polygon points="104,60 110,56 120,66 116,72" fill="#6f7a45" opacity=".8"/><path d="M24 0L46 22L66 24L84 30L104 40" stroke="#3f5f40" stroke-width="14" fill="none" stroke-linejoin="round"/><rect x="96.8" y="29.4" width="1.5" height="1.4" fill="#6a7a62" opacity=".7" transform="rotate(35 96.8 29.4)"/><rect x="52.1" y="28.8" width="1.7" height="1.4" fill="#6a7a62" opacity=".7" transform="rotate(35 52.1 28.8)"/><rect x="46.0" y="22.1" width="2.8" height="1.1" fill="#7a6248" opacity=".7" transform="rotate(35 46.0 22.1)"/><rect x="77.4" y="27.8" width="1.3" height="2.2" fill="#a86e4c" opacity=".7" transform="rotate(35 77.4 27.8)"/><rect x="71.4" y="32.1" width="2.8" height="1.0" fill="#8e5e46" opacity=".7" transform="rotate(35 71.4 32.1)"/><rect x="90.5" y="31.9" width="1.9" height="1.7" fill="#b0a480" opacity=".7" transform="rotate(35 90.5 31.9)"/><rect x="52.0" y="27.0" width="2.6" height="2.1" fill="#4a6a44" opacity=".7" transform="rotate(35 52.0 27.0)"/><rect x="36.8" y="4.1" width="1.8" height="2.0" fill="#b8b09a" opacity=".7" transform="rotate(35 36.8 4.1)"/><rect x="54.7" y="21.5" width="1.3" height="1.4" fill="#a86e4c" opacity=".7" transform="rotate(35 54.7 21.5)"/><rect x="98.6" y="35.4" width="2.6" height="2.0" fill="#a86e4c" opacity=".7" transform="rotate(35 98.6 35.4)"/><rect x="33.1" y="18.7" width="2.3" height="1.5" fill="#c4bca8" opacity=".7" transform="rotate(35 33.1 18.7)"/><rect x="68.2" y="21.0" width="1.3" height="1.4" fill="#5f7f50" opacity=".7" transform="rotate(35 68.2 21.0)"/><rect x="47.2" y="24.2" width="2.7" height="1.1" fill="#b8b09a" opacity=".7" transform="rotate(35 47.2 24.2)"/><rect x="66.1" y="21.5" width="2.1" height="2.2" fill="#a86e4c" opacity=".7" transform="rotate(35 66.1 21.5)"/><rect x="104.3" y="41.9" width="2.7" height="2.0" fill="#a86e4c" opacity=".7" transform="rotate(35 104.3 41.9)"/><rect x="92.8" y="32.6" width="1.2" height="1.2" fill="#5f7f50" opacity=".7" transform="rotate(35 92.8 32.6)"/><rect x="38.1" y="14.5" width="1.9" height="2.1" fill="#5f7f50" opacity=".7" transform="rotate(35 38.1 14.5)"/><rect x="95.2" y="30.3" width="2.4" height="2.2" fill="#b8a058" opacity=".7" transform="rotate(35 95.2 30.3)"/><rect x="22.3" y="8.7" width="2.1" height="1.9" fill="#a08a58" opacity=".7" transform="rotate(35 22.3 8.7)"/><rect x="41.1" y="21.8" width="2.2" height="2.1" fill="#b8b09a" opacity=".7" transform="rotate(35 41.1 21.8)"/><rect x="56.9" y="16.0" width="2.0" height="1.7" fill="#a86e4c" opacity=".7" transform="rotate(35 56.9 16.0)"/><rect x="44.4" y="19.5" width="1.3" height="1.7" fill="#6a7a62" opacity=".7" transform="rotate(35 44.4 19.5)"/><rect x="101.6" y="45.7" width="2.6" height="1.0" fill="#a86e4c" opacity=".7" transform="rotate(35 101.6 45.7)"/><rect x="77.4" y="19.3" width="2.2" height="1.9" fill="#a86e4c" opacity=".7" transform="rotate(35 77.4 19.3)"/><rect x="31.0" y="9.7" width="2.0" height="2.0" fill="#a86e4c" opacity=".7" transform="rotate(35 31.0 9.7)"/><rect x="88.0" y="33.1" width="2.1" height="1.7" fill="#4a6a44" opacity=".7" transform="rotate(35 88.0 33.1)"/><rect x="103.6" y="35.5" width="2.2" height="2.0" fill="#6a7a62" opacity=".7" transform="rotate(35 103.6 35.5)"/><rect x="88.9" y="27.9" width="2.4" height="2.2" fill="#6a7a62" opacity=".7" transform="rotate(35 88.9 27.9)"/><rect x="68.3" y="25.8" width="1.6" height="1.3" fill="#8e5e46" opacity=".7" transform="rotate(35 68.3 25.8)"/><rect x="66.2" y="27.6" width="1.8" height="2.2" fill="#b8b09a" opacity=".7" transform="rotate(35 66.2 27.6)"/><rect x="64.8" y="29.3" width="2.2" height="1.1" fill="#8e5e46" opacity=".7" transform="rotate(35 64.8 29.3)"/><rect x="66.9" y="19.6" width="2.7" height="1.4" fill="#7a6248" opacity=".7" transform="rotate(35 66.9 19.6)"/><rect x="101.4" y="41.1" width="2.4" height="1.6" fill="#a86e4c" opacity=".7" transform="rotate(35 101.4 41.1)"/><rect x="82.6" y="37.9" width="2.0" height="1.8" fill="#a86e4c" opacity=".7" transform="rotate(35 82.6 37.9)"/><rect x="94.5" y="32.0" width="2.5" height="1.0" fill="#4a6a44" opacity=".7" transform="rotate(35 94.5 32.0)"/><rect x="76.7" y="31.6" width="1.8" height="2.0" fill="#a08a58" opacity=".7" transform="rotate(35 76.7 31.6)"/><rect x="42.3" y="25.8" width="1.8" height="1.8" fill="#b8b09a" opacity=".7" transform="rotate(35 42.3 25.8)"/><rect x="20.0" y="5.6" width="1.6" height="1.4" fill="#a86e4c" opacity=".7" transform="rotate(35 20.0 5.6)"/><rect x="86.7" y="27.5" width="2.8" height="1.3" fill="#b8a058" opacity=".7" transform="rotate(35 86.7 27.5)"/><rect x="86.9" y="37.7" width="2.4" height="2.1" fill="#7a6248" opacity=".7" transform="rotate(35 86.9 37.7)"/><rect x="86.8" y="30.6" width="2.0" height="2.1" fill="#7a6248" opacity=".7" transform="rotate(35 86.8 30.6)"/><rect x="53.1" y="29.0" width="1.5" height="1.1" fill="#b8b09a" opacity=".7" transform="rotate(35 53.1 29.0)"/><rect x="95.4" y="27.7" width="2.4" height="1.5" fill="#c4bca8" opacity=".7" transform="rotate(35 95.4 27.7)"/><rect x="100.0" y="31.7" width="1.2" height="1.1" fill="#a08a58" opacity=".7" transform="rotate(35 100.0 31.7)"/><rect x="33.0" y="11.8" width="1.8" height="1.9" fill="#6a7a62" opacity=".7" transform="rotate(35 33.0 11.8)"/><rect x="73.4" y="26.1" width="2.7" height="1.9" fill="#a86e4c" opacity=".7" transform="rotate(35 73.4 26.1)"/><rect x="95.8" y="35.5" width="2.5" height="1.8" fill="#a08a58" opacity=".7" transform="rotate(35 95.8 35.5)"/><rect x="37.2" y="12.9" width="2.3" height="1.9" fill="#a08a58" opacity=".7" transform="rotate(35 37.2 12.9)"/><rect x="100.7" y="44.9" width="1.4" height="1.6" fill="#7a6248" opacity=".7" transform="rotate(35 100.7 44.9)"/><rect x="60.9" y="20.7" width="2.1" height="1.8" fill="#8e5e46" opacity=".7" transform="rotate(35 60.9 20.7)"/><rect x="60.6" y="22.0" width="2.0" height="2.1" fill="#a86e4c" opacity=".7" transform="rotate(35 60.6 22.0)"/><rect x="106.6" y="45.4" width="1.6" height="1.1" fill="#587850" opacity=".7" transform="rotate(35 106.6 45.4)"/><rect x="36.3" y="9.6" width="1.3" height="1.6" fill="#c4bca8" opacity=".7" transform="rotate(35 36.3 9.6)"/><rect x="93.5" y="28.3" width="1.7" height="1.0" fill="#6a7a62" opacity=".7" transform="rotate(35 93.5 28.3)"/><rect x="69.8" y="27.7" width="2.8" height="2.0" fill="#587850" opacity=".7" transform="rotate(35 69.8 27.7)"/><rect x="46.4" y="22.7" width="1.8" height="1.2" fill="#c4bca8" opacity=".7" transform="rotate(35 46.4 22.7)"/><rect x="98.8" y="40.8" width="2.2" height="1.3" fill="#8e5e46" opacity=".7" transform="rotate(35 98.8 40.8)"/><rect x="94.7" y="38.6" width="1.8" height="1.3" fill="#b8b09a" opacity=".7" transform="rotate(35 94.7 38.6)"/><rect x="72.0" y="29.6" width="1.3" height="1.9" fill="#c4bca8" opacity=".7" transform="rotate(35 72.0 29.6)"/><rect x="77.5" y="30.7" width="2.1" height="1.4" fill="#b8a058" opacity=".7" transform="rotate(35 77.5 30.7)"/><path d="M26 2L34 10L40 18" stroke="#8fb0c8" stroke-width=".7" fill="none" opacity=".7"/><polygon points="50.300,40 53.400,44.400 59.200,41.700 62.400,37.500 61,34.100 55,34" fill="#1d4023"/><polygon points="37.900,112 51.200,96.500 68.400,112 52,132.600 47.700,125.700" fill="#a89d8b"/><polygon points="44,110 52,101 60,110 52,120" fill="#b8ad9c"/><polygon points="52,132.600 68.400,113.700 81.300,124.900 71,141.200" fill="#6a5a44"/><polygon points="60,123 68.400,113.700 75,119.500 66,130" fill="#77684e"/><polygon points="68.400,112 69.200,109.400 90.800,128.800 83,126.600" fill="#2a5a26"/><polygon points="71,143 83,126.600 90.800,130.900 68.100,162 57,162" fill="#b88a38"/><polygon points="68.100,162 90.800,131.800 96.800,136 77.800,162" fill="#c99682"/><polygon points="77.800,162 97.700,136.400 102,140.400 86.200,162" fill="#9aa04a"/><polygon points="86.200,162 102.800,140.900 122,160 120,162" fill="#b05a48"/><polygon points="52,132.600 71,141.200 57,162 44,162 50,140" fill="#4a5a3c"/></g><rect x="-30" y="-10" width="220" height="180" filter="url(#nz)" opacity=".38"/><rect x="-30" y="-10" width="220" height="180" filter="url(#nzl)" opacity=".07"/><clipPath id="cpm6"><polygon points="44.3,27.2 53.4,34.1 50.3,40.0 53.4,44.4 59.2,41.7 62.4,37.5 61.0,34.1 64.9,26.4 79.6,31.9 93.9,42.2 101.4,35.7 108.3,43.1 96.3,55.5 127.5,83.5 90.8,128.8 69.2,109.4 43.1,86.1 28.8,60.3 43.1,43.9"/></clipPath><g clip-path="url(#cpm6)"><rect x="20" y="20" width="115" height="115" fill="#128a2a"/><g filter="url(#b05)"><polygon points="28,60 44,27 53,34 50,40 54,45 60,42 65,26 80,32 94,42 101,36 104,39 92,52 112,70 118,76 112,96 100,116 90,124 70,106 60,100 44,86" fill="#4ee826"/><polygon points="28,60 44,27 53,34 50,40 54,45 60,42 65,26 78,31 90,40 96,48 108,66 110,84 102,104 92,116 76,104 62,94 46,82" fill="#eefa20"/><polygon points="28,60 44,27 53,34 50,40 54,45 60,42 63,30 70,32 78,42 88,52 100,66 102,80 96,90 88,96 80,104 72,96 70,86 62,78 52,70 40,64" fill="#f88838"/><polygon points="28.800,60.300 44.300,27.200 53.400,34.100 50.300,40 53.400,44.400 59.200,41.700 64,46 76,50 86,60 92,72 84,72 74,66 62,62 48,58 36,58" fill="#ee1822"/><polygon points="82,98 86,96 88,100 84,102" fill="#f88838"/><polygon points="92,100 96,98 98,102 94,104" fill="#f88838"/><ellipse cx="46" cy="46" rx="2" ry="1.300" fill="#8a0c14"/><ellipse cx="34" cy="57" rx="2.500" ry="1.200" fill="#8a0c14"/><polygon points="94,42 101.400,35.700 108.300,43.100 100,50" fill="#128a2a"/></g></g><text x="46.800" y="24.300" font-size="2.900" fill="#fff" font-weight="700" font-family="Liberation Sans, sans-serif" opacity=".92">Вовківці</text></g><rect x="0.300" y="3.800" width="5.500" height="6.900" fill="#fafafa"/><path d="M2.200 6.400l1.800 1.800m0 -1.800l-1.800 1.800" stroke="#777" stroke-width=".5"/><rect x="67.2" y="9" width="32.7" height="8" fill="#f6f6f6"/><text x="68.8" y="14" font-size="2.800" fill="#444" font-family="Liberation Sans, sans-serif">2023 Кукурудза</text><path d="M94.9 12.300l1.500 1.600l1.500 -1.600" stroke="#666" stroke-width=".5" fill="none"/><rect x="104.3" y="9" width="33" height="8" fill="#f6f6f6"/><text x="105.89999999999999" y="14" font-size="2.800" fill="#444" font-family="Liberation Sans, sans-serif">Висота сівалки</text><path d="M132.3 12.300l1.500 1.600l1.500 -1.600" stroke="#666" stroke-width=".5" fill="none"/><rect x="141.600" y="9" width="8.200" height="8" fill="#f6f6f6"/><rect x="143.800" y="11.200" width="3.800" height="3.800" fill="none" stroke="#777" stroke-width=".5"/><rect x="154.500" y="9" width="4" height="8" fill="#f6f6f6"/><rect x="129.200" y="132.400" width="8.100" height="8.400" fill="#f6f6f6"/><circle cx="133.300" cy="136.600" r="2.200" fill="none" stroke="#666" stroke-width=".5"/><rect x="141.600" y="132.400" width="8.200" height="8.400" fill="#f6f6f6"/><path d="M145.700 134.300v4.600" stroke="#444" stroke-width=".7"/><rect x="144.700" y="134.300" width="2" height="1.800" fill="#444"/><rect x="154.500" y="132.400" width="4" height="8.400" fill="#f6f6f6"/><rect x="2" y="140.300" width="15" height="1.500" fill="#dfe6df" opacity=".75"/><rect x="2" y="142.800" width="6" height="1.500" fill="#fff" opacity=".8"/><rect x="143" y="1.800" width="13" height="1.500" fill="#111" opacity=".8"/><rect x="140" y="69" width="18" height="57" fill="#f8f8f8"/><text x="142.5" y="74.2" font-size="2.500" fill="#555" font-family="Liberation Sans, sans-serif">Редагувати</text><rect x="140" y="76.5" width="18" height=".5" fill="#ddd"/><rect x="155.7" y="80.0" width="1.800" height="6.4" fill="#8a0c14"/><text x="154.8" y="83.9" font-size="2.300" fill="#666" text-anchor="end" font-family="Liberation Sans, sans-serif">&gt; 79,9</text><rect x="155.7" y="86.3" width="1.800" height="6.4" fill="#ee1822"/><text x="154.8" y="90.2" font-size="2.300" fill="#666" text-anchor="end" font-family="Liberation Sans, sans-serif">78,4 - 79,9</text><rect x="155.7" y="92.6" width="1.800" height="6.4" fill="#f88838"/><text x="154.8" y="96.5" font-size="2.300" fill="#666" text-anchor="end" font-family="Liberation Sans, sans-serif">76,8 - 78,4</text><rect x="155.7" y="98.9" width="1.800" height="6.4" fill="#eefa20"/><text x="154.8" y="102.8" font-size="2.300" fill="#666" text-anchor="end" font-family="Liberation Sans, sans-serif">75,2 - 76,8</text><rect x="155.7" y="105.1" width="1.800" height="6.4" fill="#a8f040"/><text x="154.8" y="109.1" font-size="2.300" fill="#666" text-anchor="end" font-family="Liberation Sans, sans-serif">73,6 - 75,2</text><rect x="155.7" y="111.4" width="1.800" height="6.4" fill="#4ee826"/><text x="154.8" y="115.4" font-size="2.300" fill="#666" text-anchor="end" font-family="Liberation Sans, sans-serif">72,1 - 73,6</text><rect x="155.7" y="117.7" width="1.800" height="6.4" fill="#128a2a"/><text x="154.8" y="121.7" font-size="2.300" fill="#666" text-anchor="end" font-family="Liberation Sans, sans-serif">&lt; 72,1</text></svg><g font-family="Liberation Sans, sans-serif"><circle cx="9" cy="151.400" r="1.700" fill="none" stroke="#444" stroke-width=".6"/><text x="12.5" y="152.300" font-size="2.600" fill="#858585">Головна сторінка</text><rect x="49.500" y="149.800" width="3.300" height="3.300" rx=".6" fill="#3a86e8"/><text x="54.3" y="152.300" font-size="2.600" fill="#3a86e8">Поле</text><rect x="76.800" y="149.600" width="2.600" height="3.600" fill="none" stroke="#444" stroke-width=".6"/><text x="82" y="152.300" font-size="2.600" fill="#858585">Звіти</text><rect x="103.600" y="149.700" width="3.400" height="3.400" fill="none" stroke="#444" stroke-width=".6"/><path d="M105.300 149.700v3.400M103.600 151.400h3.400" stroke="#444" stroke-width=".4"/><text x="109.3" y="152.300" font-size="2.600" fill="#858585">Карти завдань</text><circle cx="144" cy="151.400" r="1.700" fill="#555"/><circle cx="144" cy="151.400" r=".6" fill="#fff"/><text x="148" y="152.300" font-size="2.600" fill="#858585">Налаштування</text><path d="M180.500 152.500v-2h2.500l1 -1h1.500v3z" fill="#555"/><circle cx="181.500" cy="153" r=".9" fill="#333"/><circle cx="185" cy="153" r="1.100" fill="#333"/><text x="188" y="152.300" font-size="2.600" fill="#858585">Field View Cab</text><rect x="75.500" y="155.800" width="60" height="1.300" rx=".6" fill="#222"/></g></svg>
<svg style="left:309.3px;top:624px;overflow:hidden" width="212" height="162" viewBox="0 -2 212 162"><g font-family="Liberation Sans, sans-serif"><text x="0" y="2.9" font-size="2.3" fill="#555" font-weight="400" text-anchor="start">‹ 14:37 год.</text><text x="0" y="10.4" font-size="2.9" fill="#2a7ae8" font-weight="400" text-anchor="start">Назад</text><text x="10.6" y="10.4" font-size="2.9" fill="#111" font-weight="700" text-anchor="start">Чевгузів 11.(50)</text><rect x="0" y="14.200" width="53" height=".5" fill="#e2e2e2"/><text x="0" y="19.7" font-size="2.7" fill="#777" font-weight="400" text-anchor="start">11 га • Кукурудза 2023 • 871 Новоставці,</text><text x="0" y="22.8" font-size="2.7" fill="#777" font-weight="400" text-anchor="start">Кукурузи</text><rect x="0" y="26.7" width="53.300" height="8" fill="#eeeeee"/><rect x="0" y="61" width="53.300" height="8" fill="#eeeeee"/><rect x="0" y="95.6" width="53.300" height="8" fill="#eeeeee"/><rect x="0" y="130" width="53.300" height="8" fill="#eeeeee"/><text x="0" y="40.3" font-size="2.9" fill="#111" font-weight="700" text-anchor="start">ля</text><text x="22" y="48.6" font-size="2.7" fill="#777" font-weight="400" text-anchor="middle">Обробка даних про поля…</text><text x="0" y="74.3" font-size="2.9" fill="#111" font-weight="700" text-anchor="start">ки та ділянки</text><text x="23" y="82.4" font-size="2.7" fill="#777" font-weight="400" text-anchor="middle">Для цього сезону немає збережених</text><text x="23" y="85.4" font-size="2.7" fill="#777" font-weight="400" text-anchor="middle">зон або ділянок.</text><text x="0" y="108.7" font-size="2.9" fill="#111" font-weight="700" text-anchor="start">нотатки до поля</text><circle cx="47.200" cy="107.700" r="2.100" fill="#e8f1fc" stroke="#4a90e2" stroke-width=".6"/><text x="23" y="116.7" font-size="2.7" fill="#777" font-weight="400" text-anchor="middle">Немає приміток до поля.</text><text x="24" y="119.7" font-size="2.7" fill="#777" font-weight="400" text-anchor="middle">Натисніть +, щоб додати нову примітку.</text><text x="0" y="143.8" font-size="2.9" fill="#111" font-weight="700" text-anchor="start">границі поля</text></g><svg x="53.3" y="0" width="158" height="146" viewBox="0 0 158 146" overflow="hidden"><g transform="translate(8.7,-0.7) scale(0.952)"><g filter="url(#b05)"><rect x="-30" y="-10" width="220" height="180" fill="#2d5232"/><polygon points="-30,-10 27,-10 45,27 29,60 -30,20" fill="#3a6334"/><polygon points="3,2 24,1 40,28 27,52 2,30" fill="#40683a"/><polygon points="-30,40 10,52 26,66 42,88 50,98 38,112 50,132 44,170 -30,170" fill="#21442c"/><polygon points="0,62 14,58 30,80 36,100 22,116 8,104 0,108" fill="#1c3b27"/><polygon points="-30,126 16,115 33,132 28,170 -30,170" fill="#3f6239"/><polygon points="2,64 10,60 14,70 6,78" fill="#143621"/><path d="M0 36L30 58M4 56L28 60" stroke="#6b7f58" stroke-width=".8" fill="none" opacity=".7"/><polygon points="28,-10 190,-10 190,12 100,14 64,8" fill="#375c31"/><polygon points="100,14 130,12 128,30 112,34 96,24" fill="#447a37"/><polygon points="133,-10 190,-10 190,30 151.900,34.400 128.700,29.300 130.400,12" fill="#95866a"/><polygon points="136,2 156,0 152,26 135,24" fill="#a8977a"/><polygon points="128,30 152,35 158,34 190,40 190,52 150,50 130,44" fill="#2b4e30"/><polygon points="135,44 190,52 190,78 142,74 132,68" fill="#26482d"/><polygon points="141.600,77.500 190,90 190,104 148.500,95.600" fill="#a3917a"/><polygon points="127.500,83.500 148,96 190,106 190,170 118,170 90.800,128.800" fill="#305532"/><polygon points="96.300,55.500 108.900,43.600 122.600,46.500 134.700,54.300 134.700,63.700 130.400,70.600 127.500,83.500" fill="#5d4b47"/><polygon points="104,60 110,56 120,66 116,72" fill="#6f7a45" opacity=".8"/><path d="M24 0L46 22L66 24L84 30L104 40" stroke="#3f5f40" stroke-width="14" fill="none" stroke-linejoin="round"/><rect x="27.5" y="5.0" width="2.0" height="1.7" fill="#c4bca8" opacity=".7" transform="rotate(35 27.5 5.0)"/><rect x="46.4" y="24.0" width="1.8" height="1.9" fill="#c4bca8" opacity=".7" transform="rotate(35 46.4 24.0)"/><rect x="98.8" y="41.3" width="2.5" height="1.1" fill="#8e5e46" opacity=".7" transform="rotate(35 98.8 41.3)"/><rect x="83.8" y="31.7" width="1.6" height="2.0" fill="#587850" opacity=".7" transform="rotate(35 83.8 31.7)"/><rect x="55.1" y="23.8" width="2.8" height="1.1" fill="#8e5e46" opacity=".7" transform="rotate(35 55.1 23.8)"/><rect x="51.0" y="18.3" width="1.8" height="1.8" fill="#7a6248" opacity=".7" transform="rotate(35 51.0 18.3)"/><rect x="89.2" y="34.8" width="2.5" height="2.1" fill="#a08a58" opacity=".7" transform="rotate(35 89.2 34.8)"/><rect x="49.8" y="27.7" width="1.9" height="1.5" fill="#587850" opacity=".7" transform="rotate(35 49.8 27.7)"/><rect x="40.6" y="20.0" width="2.5" height="1.6" fill="#6a7a62" opacity=".7" transform="rotate(35 40.6 20.0)"/><rect x="74.5" y="25.0" width="1.9" height="1.1" fill="#4a6a44" opacity=".7" transform="rotate(35 74.5 25.0)"/><rect x="68.4" y="27.4" width="1.4" height="1.8" fill="#a86e4c" opacity=".7" transform="rotate(35 68.4 27.4)"/><rect x="67.3" y="25.6" width="2.0" height="2.0" fill="#5f7f50" opacity=".7" transform="rotate(35 67.3 25.6)"/><rect x="21.4" y="2.6" width="1.3" height="1.2" fill="#587850" opacity=".7" transform="rotate(35 21.4 2.6)"/><rect x="75.1" y="21.7" width="1.6" height="1.5" fill="#8e5e46" opacity=".7" transform="rotate(35 75.1 21.7)"/><rect x="80.8" y="23.1" width="1.9" height="2.0" fill="#b8a058" opacity=".7" transform="rotate(35 80.8 23.1)"/><rect x="92.4" y="34.3" width="1.8" height="1.1" fill="#5f7f50" opacity=".7" transform="rotate(35 92.4 34.3)"/><rect x="100.6" y="40.3" width="1.6" height="1.3" fill="#b8a058" opacity=".7" transform="rotate(35 100.6 40.3)"/><rect x="37.1" y="18.1" width="2.6" height="1.7" fill="#b0a480" opacity=".7" transform="rotate(35 37.1 18.1)"/><rect x="75.5" y="22.0" width="2.4" height="1.5" fill="#8e5e46" opacity=".7" transform="rotate(35 75.5 22.0)"/><rect x="65.3" y="25.3" width="2.5" height="1.1" fill="#b8a058" opacity=".7" transform="rotate(35 65.3 25.3)"/><rect x="62.5" y="28.5" width="1.9" height="1.6" fill="#b0a480" opacity=".7" transform="rotate(35 62.5 28.5)"/><rect x="61.1" y="23.7" width="2.5" height="1.8" fill="#587850" opacity=".7" transform="rotate(35 61.1 23.7)"/><rect x="42.2" y="23.6" width="1.7" height="1.4" fill="#c4bca8" opacity=".7" transform="rotate(35 42.2 23.6)"/><rect x="80.2" y="26.9" width="1.3" height="2.0" fill="#b0a480" opacity=".7" transform="rotate(35 80.2 26.9)"/><rect x="70.6" y="20.0" width="1.9" height="2.0" fill="#b8b09a" opacity=".7" transform="rotate(35 70.6 20.0)"/><rect x="81.0" y="22.8" width="2.3" height="1.5" fill="#b8a058" opacity=".7" transform="rotate(35 81.0 22.8)"/><rect x="35.0" y="6.0" width="2.2" height="1.4" fill="#b8b09a" opacity=".7" transform="rotate(35 35.0 6.0)"/><rect x="60.4" y="31.3" width="1.6" height="1.3" fill="#a86e4c" opacity=".7" transform="rotate(35 60.4 31.3)"/><rect x="59.0" y="20.3" width="1.8" height="2.1" fill="#4a6a44" opacity=".7" transform="rotate(35 59.0 20.3)"/><rect x="25.8" y="9.6" width="2.5" height="2.0" fill="#5f7f50" opacity=".7" transform="rotate(35 25.8 9.6)"/><rect x="45.2" y="18.3" width="2.2" height="2.1" fill="#4a6a44" opacity=".7" transform="rotate(35 45.2 18.3)"/><rect x="66.3" y="22.0" width="2.5" height="1.2" fill="#587850" opacity=".7" transform="rotate(35 66.3 22.0)"/><rect x="63.8" y="22.7" width="2.1" height="1.5" fill="#b8a058" opacity=".7" transform="rotate(35 63.8 22.7)"/><rect x="83.4" y="29.0" width="1.9" height="1.2" fill="#b8b09a" opacity=".7" transform="rotate(35 83.4 29.0)"/><rect x="89.5" y="31.5" width="2.7" height="1.5" fill="#b8b09a" opacity=".7" transform="rotate(35 89.5 31.5)"/><rect x="28.2" y="7.0" width="1.3" height="2.0" fill="#b0a480" opacity=".7" transform="rotate(35 28.2 7.0)"/><rect x="89.1" y="25.8" width="2.4" height="1.9" fill="#7a6248" opacity=".7" transform="rotate(35 89.1 25.8)"/><rect x="68.3" y="26.4" width="1.7" height="1.3" fill="#7a6248" opacity=".7" transform="rotate(35 68.3 26.4)"/><rect x="42.7" y="8.7" width="1.4" height="1.1" fill="#b0a480" opacity=".7" transform="rotate(35 42.7 8.7)"/><rect x="98.9" y="40.3" width="1.6" height="2.1" fill="#4a6a44" opacity=".7" transform="rotate(35 98.9 40.3)"/><rect x="65.1" y="29.3" width="1.4" height="1.2" fill="#6a7a62" opacity=".7" transform="rotate(35 65.1 29.3)"/><rect x="45.7" y="23.5" width="1.7" height="1.7" fill="#7a6248" opacity=".7" transform="rotate(35 45.7 23.5)"/><rect x="47.4" y="23.2" width="1.5" height="2.1" fill="#4a6a44" opacity=".7" transform="rotate(35 47.4 23.2)"/><rect x="100.9" y="32.7" width="1.8" height="1.8" fill="#b8b09a" opacity=".7" transform="rotate(35 100.9 32.7)"/><rect x="79.9" y="23.5" width="1.4" height="1.2" fill="#a86e4c" opacity=".7" transform="rotate(35 79.9 23.5)"/><rect x="73.5" y="32.9" width="1.4" height="2.1" fill="#4a6a44" opacity=".7" transform="rotate(35 73.5 32.9)"/><rect x="99.5" y="34.6" width="1.8" height="1.9" fill="#6a7a62" opacity=".7" transform="rotate(35 99.5 34.6)"/><rect x="100.9" y="31.4" width="1.6" height="1.4" fill="#b8a058" opacity=".7" transform="rotate(35 100.9 31.4)"/><rect x="63.2" y="19.9" width="1.6" height="2.1" fill="#b8b09a" opacity=".7" transform="rotate(35 63.2 19.9)"/><rect x="68.9" y="27.0" width="1.4" height="1.0" fill="#b8b09a" opacity=".7" transform="rotate(35 68.9 27.0)"/><rect x="101.7" y="31.5" width="1.7" height="1.5" fill="#b8b09a" opacity=".7" transform="rotate(35 101.7 31.5)"/><rect x="50.5" y="17.2" width="2.5" height="2.0" fill="#587850" opacity=".7" transform="rotate(35 50.5 17.2)"/><rect x="64.6" y="26.1" width="2.5" height="1.7" fill="#6a7a62" opacity=".7" transform="rotate(35 64.6 26.1)"/><rect x="20.7" y="4.3" width="1.9" height="1.8" fill="#c4bca8" opacity=".7" transform="rotate(35 20.7 4.3)"/><rect x="69.6" y="24.1" width="2.3" height="1.2" fill="#7a6248" opacity=".7" transform="rotate(35 69.6 24.1)"/><rect x="72.0" y="21.0" width="2.2" height="2.0" fill="#5f7f50" opacity=".7" transform="rotate(35 72.0 21.0)"/><rect x="31.4" y="18.4" width="1.4" height="1.6" fill="#8e5e46" opacity=".7" transform="rotate(35 31.4 18.4)"/><rect x="66.5" y="21.4" width="2.1" height="1.1" fill="#5f7f50" opacity=".7" transform="rotate(35 66.5 21.4)"/><rect x="51.1" y="21.6" width="1.5" height="1.2" fill="#b8b09a" opacity=".7" transform="rotate(35 51.1 21.6)"/><rect x="82.8" y="25.8" width="1.4" height="1.1" fill="#a08a58" opacity=".7" transform="rotate(35 82.8 25.8)"/><path d="M26 2L34 10L40 18" stroke="#8fb0c8" stroke-width=".7" fill="none" opacity=".7"/><polygon points="50.300,40 53.400,44.400 59.200,41.700 62.400,37.500 61,34.100 55,34" fill="#1d4023"/><polygon points="37.900,112 51.200,96.500 68.400,112 52,132.600 47.700,125.700" fill="#a89d8b"/><polygon points="44,110 52,101 60,110 52,120" fill="#b8ad9c"/><polygon points="52,132.600 68.400,113.700 81.300,124.900 71,141.200" fill="#6a5a44"/><polygon points="60,123 68.400,113.700 75,119.500 66,130" fill="#77684e"/><polygon points="68.400,112 69.200,109.400 90.800,128.800 83,126.600" fill="#2a5a26"/><polygon points="71,143 83,126.600 90.800,130.900 68.100,162 57,162" fill="#b88a38"/><polygon points="68.100,162 90.800,131.800 96.800,136 77.800,162" fill="#c99682"/><polygon points="77.800,162 97.700,136.400 102,140.400 86.200,162" fill="#9aa04a"/><polygon points="86.200,162 102.800,140.900 122,160 120,162" fill="#b05a48"/><polygon points="52,132.600 71,141.200 57,162 44,162 50,140" fill="#4a5a3c"/></g><rect x="-30" y="-10" width="220" height="180" filter="url(#nz)" opacity=".38"/><rect x="-30" y="-10" width="220" height="180" filter="url(#nzl)" opacity=".07"/><clipPath id="cpm7"><polygon points="44.3,27.2 53.4,34.1 50.3,40.0 53.4,44.4 59.2,41.7 62.4,37.5 61.0,34.1 64.9,26.4 79.6,31.9 93.9,42.2 101.4,35.7 108.3,43.1 96.3,55.5 127.5,83.5 90.8,128.8 69.2,109.4 43.1,86.1 28.8,60.3 43.1,43.9"/></clipPath><g clip-path="url(#cpm7)"><defs><linearGradient id="ngm7" gradientUnits="userSpaceOnUse" x1="50" y1="115" x2="100" y2="40"><stop offset="0" stop-color="#f41a10"/><stop offset=".25" stop-color="#f8601c"/><stop offset=".5" stop-color="#f8c020"/><stop offset=".75" stop-color="#f0e828"/><stop offset="1" stop-color="#f6b020"/></linearGradient></defs><rect x="20" y="20" width="115" height="115" fill="url(#ngm7)"/><g filter="url(#b1)"><path d="M29 60L44 86L70 110L90 127" stroke="#f41208" stroke-width="7" fill="none"/><ellipse cx="72" cy="98" rx="24" ry="11" fill="#f41208" transform="rotate(42 72 98)"/><ellipse cx="48" cy="74" rx="14" ry="7" fill="#f6401a" transform="rotate(55 48 74)"/><ellipse cx="70" cy="62" rx="20" ry="5" fill="#d8f030" transform="rotate(28 70 62)" opacity=".8"/><path d="M36 58L100 78" stroke="#f86a1c" stroke-width="1.500"/><ellipse cx="100" cy="88" rx="10" ry="5" fill="#eef040" transform="rotate(-50 100 88)" opacity=".7"/></g><g opacity=".55"><rect x="76.0" y="102.8" width="2.4" height="1.1" fill="#f8d020"/><rect x="98.5" y="44.1" width="3.0" height="1.3" fill="#f41a10"/><rect x="87.7" y="40.1" width="1.2" height="1.5" fill="#f8601c"/><rect x="54.1" y="84.8" width="2.6" height="0.9" fill="#f8601c"/><rect x="63.0" y="39.0" width="2.2" height="1.6" fill="#f8d020"/><rect x="104.1" y="61.5" width="2.2" height="1.0" fill="#f0e828"/><rect x="61.3" y="115.7" width="1.1" height="1.7" fill="#f0e828"/><rect x="46.7" y="77.0" width="1.3" height="1.2" fill="#f8d020"/><rect x="46.1" y="48.2" width="2.4" height="1.7" fill="#f8d020"/><rect x="39.8" y="30.3" width="1.1" height="1.4" fill="#f0e828"/><rect x="62.4" y="36.4" width="1.4" height="1.6" fill="#f8601c"/><rect x="106.7" y="102.4" width="2.3" height="2.0" fill="#f8601c"/><rect x="84.1" y="103.9" width="2.3" height="1.7" fill="#f0e828"/><rect x="45.6" y="106.2" width="2.8" height="1.7" fill="#f41a10"/><rect x="105.6" y="103.8" width="1.9" height="1.8" fill="#f8d020"/><rect x="101.5" y="110.1" width="2.5" height="1.5" fill="#f41a10"/><rect x="90.3" y="88.2" width="2.9" height="1.7" fill="#f8601c"/><rect x="55.7" y="107.1" width="1.5" height="1.5" fill="#f8d020"/><rect x="82.3" y="110.7" width="1.8" height="1.7" fill="#f8601c"/><rect x="102.3" y="92.8" width="2.7" height="1.3" fill="#f41a10"/><rect x="41.5" y="90.0" width="2.3" height="1.9" fill="#f41a10"/><rect x="70.7" y="58.0" width="2.0" height="0.8" fill="#f41a10"/><rect x="43.5" y="104.7" width="1.8" height="1.2" fill="#f0e828"/><rect x="46.5" y="80.2" width="1.7" height="1.8" fill="#f8601c"/><rect x="87.3" y="56.9" width="3.0" height="1.0" fill="#f8601c"/><rect x="110.5" y="67.5" width="1.2" height="1.6" fill="#f8d020"/><rect x="37.6" y="105.7" width="1.8" height="1.2" fill="#f8d020"/><rect x="47.0" y="45.4" width="2.8" height="1.5" fill="#f41a10"/><rect x="110.9" y="66.3" width="1.6" height="1.9" fill="#f0e828"/><rect x="102.0" y="85.8" width="1.8" height="0.8" fill="#f8d020"/><rect x="107.4" y="39.5" width="1.9" height="1.8" fill="#f8d020"/><rect x="55.6" y="62.4" width="3.0" height="1.7" fill="#f8601c"/><rect x="98.8" y="91.3" width="2.9" height="1.9" fill="#f8d020"/><rect x="91.3" y="37.0" width="1.9" height="1.9" fill="#f41a10"/><rect x="65.1" y="90.8" width="2.9" height="1.8" fill="#f0e828"/><rect x="39.1" y="90.2" width="1.7" height="2.0" fill="#f0e828"/><rect x="38.9" y="106.8" width="2.1" height="1.3" fill="#f8601c"/><rect x="98.6" y="112.0" width="1.1" height="1.2" fill="#f0e828"/><rect x="45.8" y="117.7" width="1.3" height="1.5" fill="#f41a10"/><rect x="83.6" y="34.3" width="1.3" height="1.5" fill="#f0e828"/><rect x="118.5" y="87.7" width="1.6" height="1.5" fill="#f8d020"/><rect x="70.2" y="120.0" width="2.6" height="1.6" fill="#f8601c"/><rect x="66.7" y="118.6" width="2.4" height="1.1" fill="#f41a10"/><rect x="47.9" y="82.9" width="2.6" height="1.2" fill="#f8601c"/><rect x="46.0" y="77.5" width="1.3" height="1.7" fill="#f8601c"/><rect x="48.7" y="58.7" width="2.2" height="2.0" fill="#f8601c"/><rect x="100.8" y="63.1" width="1.5" height="1.9" fill="#f8d020"/><rect x="74.8" y="87.1" width="1.8" height="1.6" fill="#f0e828"/><rect x="65.1" y="59.4" width="1.5" height="1.0" fill="#f0e828"/><rect x="112.2" y="71.4" width="2.3" height="1.7" fill="#f0e828"/><rect x="61.1" y="44.0" width="2.3" height="1.8" fill="#f0e828"/><rect x="69.4" y="37.0" width="1.7" height="1.9" fill="#f0e828"/><rect x="79.5" y="56.5" width="1.5" height="1.7" fill="#f8601c"/><rect x="37.6" y="106.1" width="1.7" height="1.9" fill="#f41a10"/><rect x="56.8" y="52.4" width="2.8" height="0.9" fill="#f8601c"/><rect x="85.8" y="106.2" width="2.9" height="1.0" fill="#f8601c"/><rect x="49.2" y="96.5" width="2.5" height="1.3" fill="#f8601c"/><rect x="114.9" y="98.3" width="1.8" height="1.4" fill="#f41a10"/><rect x="63.0" y="109.6" width="2.1" height="1.4" fill="#f8d020"/><rect x="91.6" y="112.9" width="1.4" height="1.6" fill="#f8d020"/></g></g><text x="46.800" y="24.300" font-size="2.900" fill="#fff" font-weight="700" font-family="Liberation Sans, sans-serif" opacity=".92">Вовківці</text></g><rect x="0.300" y="3.800" width="5.500" height="6.900" fill="#fafafa"/><path d="M2.200 6.400l1.800 1.800m0 -1.800l-1.800 1.800" stroke="#777" stroke-width=".5"/><rect x="67.2" y="9" width="32.7" height="8" fill="#f6f6f6"/><text x="68.8" y="14" font-size="2.800" fill="#444" font-family="Liberation Sans, sans-serif">2023 Кукурудза</text><path d="M94.9 12.300l1.500 1.600l1.500 -1.600" stroke="#666" stroke-width=".5" fill="none"/><rect x="104.3" y="9" width="33" height="8" fill="#f6f6f6"/><text x="105.89999999999999" y="14" font-size="2.800" fill="#444" font-family="Liberation Sans, sans-serif">ФАО</text><path d="M132.3 12.300l1.500 1.600l1.500 -1.600" stroke="#666" stroke-width=".5" fill="none"/><rect x="141.600" y="9" width="8.200" height="8" fill="#f6f6f6"/><rect x="143.800" y="11.200" width="3.800" height="3.800" fill="none" stroke="#777" stroke-width=".5"/><rect x="154.500" y="9" width="4" height="8" fill="#f6f6f6"/><rect x="129.200" y="132.400" width="8.100" height="8.400" fill="#f6f6f6"/><circle cx="133.300" cy="136.600" r="2.200" fill="none" stroke="#666" stroke-width=".5"/><rect x="141.600" y="132.400" width="8.200" height="8.400" fill="#f6f6f6"/><path d="M145.700 134.300v4.600" stroke="#444" stroke-width=".7"/><rect x="144.700" y="134.300" width="2" height="1.800" fill="#444"/><rect x="154.500" y="132.400" width="4" height="8.400" fill="#f6f6f6"/><rect x="2" y="140.300" width="15" height="1.500" fill="#dfe6df" opacity=".75"/><rect x="2" y="142.800" width="6" height="1.500" fill="#fff" opacity=".8"/><rect x="143" y="1.800" width="13" height="1.500" fill="#111" opacity=".8"/><rect x="141" y="72" width="17" height="54" fill="#f8f8f8"/><text x="143.5" y="77.2" font-size="2.500" fill="#555" font-family="Liberation Sans, sans-serif">Редагувати</text><rect x="141" y="79.5" width="17" height=".5" fill="#ddd"/><rect x="155.7" y="83.0" width="1.800" height="6.9" fill="#1f8a2a"/><text x="154.8" y="87.2" font-size="2.300" fill="#666" text-anchor="end" font-family="Liberation Sans, sans-serif">&gt; 79,9</text><rect x="155.7" y="89.8" width="1.800" height="6.9" fill="#55c83a"/><text x="154.8" y="94.0" font-size="2.300" fill="#666" text-anchor="end" font-family="Liberation Sans, sans-serif">78,4 - 79,9</text><rect x="155.7" y="96.7" width="1.800" height="6.9" fill="#a8e048"/><text x="154.8" y="100.9" font-size="2.300" fill="#666" text-anchor="end" font-family="Liberation Sans, sans-serif">76,8 - 78,4</text><rect x="155.7" y="103.5" width="1.800" height="6.9" fill="#f2e23a"/><text x="154.8" y="107.7" font-size="2.300" fill="#666" text-anchor="end" font-family="Liberation Sans, sans-serif">75,2 - 76,8</text><rect x="155.7" y="110.3" width="1.800" height="6.9" fill="#f0a030"/><text x="154.8" y="114.5" font-size="2.300" fill="#666" text-anchor="end" font-family="Liberation Sans, sans-serif">73,6 - 75,2</text><rect x="155.7" y="117.2" width="1.800" height="6.9" fill="#e04a30"/><text x="154.8" y="121.4" font-size="2.300" fill="#666" text-anchor="end" font-family="Liberation Sans, sans-serif">72,1 - 73,6</text></svg><g font-family="Liberation Sans, sans-serif"><circle cx="9" cy="151.400" r="1.700" fill="none" stroke="#444" stroke-width=".6"/><text x="12.5" y="152.300" font-size="2.600" fill="#858585">Головна сторінка</text><rect x="49.500" y="149.800" width="3.300" height="3.300" rx=".6" fill="#3a86e8"/><text x="54.3" y="152.300" font-size="2.600" fill="#3a86e8">Поле</text><rect x="76.800" y="149.600" width="2.600" height="3.600" fill="none" stroke="#444" stroke-width=".6"/><text x="82" y="152.300" font-size="2.600" fill="#858585">Звіти</text><rect x="103.600" y="149.700" width="3.400" height="3.400" fill="none" stroke="#444" stroke-width=".6"/><path d="M105.300 149.700v3.400M103.600 151.400h3.400" stroke="#444" stroke-width=".4"/><text x="109.3" y="152.300" font-size="2.600" fill="#858585">Карти завдань</text><circle cx="144" cy="151.400" r="1.700" fill="#555"/><circle cx="144" cy="151.400" r=".6" fill="#fff"/><text x="148" y="152.300" font-size="2.600" fill="#858585">Налаштування</text><path d="M180.500 152.500v-2h2.500l1 -1h1.500v3z" fill="#555"/><circle cx="181.500" cy="153" r=".9" fill="#333"/><circle cx="185" cy="153" r="1.100" fill="#333"/><text x="188" y="152.300" font-size="2.600" fill="#858585">Field View Cab</text><rect x="75.500" y="155.800" width="60" height="1.300" rx=".6" fill="#222"/></g></svg>
<svg style="left:548.4px;top:623.2px;overflow:hidden" width="212" height="162" viewBox="0 -2 212 162"><g font-family="Liberation Sans, sans-serif"><text x="0" y="2.9" font-size="2.3" fill="#555" font-weight="400" text-anchor="start">‹ 14:37 год.</text><text x="0" y="10.4" font-size="2.9" fill="#2a7ae8" font-weight="400" text-anchor="start">Назад</text><text x="10.6" y="10.4" font-size="2.9" fill="#111" font-weight="700" text-anchor="start">Чевгузів 11.(50)</text><rect x="0" y="14.200" width="53" height=".5" fill="#e2e2e2"/><text x="0" y="19.7" font-size="2.7" fill="#777" font-weight="400" text-anchor="start">11 га • Кукурудза 2023 • 871 Новоставці,</text><text x="0" y="22.8" font-size="2.7" fill="#777" font-weight="400" text-anchor="start">Кукурузи</text><rect x="0" y="26.7" width="53.300" height="8" fill="#eeeeee"/><rect x="0" y="61" width="53.300" height="8" fill="#eeeeee"/><rect x="0" y="95.6" width="53.300" height="8" fill="#eeeeee"/><rect x="0" y="130" width="53.300" height="8" fill="#eeeeee"/><text x="0" y="40.3" font-size="2.9" fill="#111" font-weight="700" text-anchor="start">ля</text><text x="22" y="48.6" font-size="2.7" fill="#777" font-weight="400" text-anchor="middle">Обробка даних про поля…</text><text x="0" y="74.3" font-size="2.9" fill="#111" font-weight="700" text-anchor="start">ки та ділянки</text><text x="23" y="82.4" font-size="2.7" fill="#777" font-weight="400" text-anchor="middle">Для цього сезону немає збережених</text><text x="23" y="85.4" font-size="2.7" fill="#777" font-weight="400" text-anchor="middle">зон або ділянок.</text><text x="0" y="108.7" font-size="2.9" fill="#111" font-weight="700" text-anchor="start">нотатки до поля</text><circle cx="47.200" cy="107.700" r="2.100" fill="#e8f1fc" stroke="#4a90e2" stroke-width=".6"/><text x="23" y="116.7" font-size="2.7" fill="#777" font-weight="400" text-anchor="middle">Немає приміток до поля.</text><text x="24" y="119.7" font-size="2.7" fill="#777" font-weight="400" text-anchor="middle">Натисніть +, щоб додати нову примітку.</text><text x="0" y="143.8" font-size="2.9" fill="#111" font-weight="700" text-anchor="start">границі поля</text></g><svg x="53.3" y="0" width="158" height="146" viewBox="0 0 158 146" overflow="hidden"><g transform="translate(0,0) scale(1)"><g filter="url(#b05)"><rect x="-30" y="-10" width="220" height="180" fill="#2d5232"/><polygon points="-30,-10 27,-10 45,27 29,60 -30,20" fill="#3a6334"/><polygon points="3,2 24,1 40,28 27,52 2,30" fill="#40683a"/><polygon points="-30,40 10,52 26,66 42,88 50,98 38,112 50,132 44,170 -30,170" fill="#21442c"/><polygon points="0,62 14,58 30,80 36,100 22,116 8,104 0,108" fill="#1c3b27"/><polygon points="-30,126 16,115 33,132 28,170 -30,170" fill="#3f6239"/><polygon points="2,64 10,60 14,70 6,78" fill="#143621"/><path d="M0 36L30 58M4 56L28 60" stroke="#6b7f58" stroke-width=".8" fill="none" opacity=".7"/><polygon points="28,-10 190,-10 190,12 100,14 64,8" fill="#375c31"/><polygon points="100,14 130,12 128,30 112,34 96,24" fill="#447a37"/><polygon points="133,-10 190,-10 190,30 151.900,34.400 128.700,29.300 130.400,12" fill="#95866a"/><polygon points="136,2 156,0 152,26 135,24" fill="#a8977a"/><polygon points="128,30 152,35 158,34 190,40 190,52 150,50 130,44" fill="#2b4e30"/><polygon points="135,44 190,52 190,78 142,74 132,68" fill="#26482d"/><polygon points="141.600,77.500 190,90 190,104 148.500,95.600" fill="#a3917a"/><polygon points="127.500,83.500 148,96 190,106 190,170 118,170 90.800,128.800" fill="#305532"/><polygon points="96.300,55.500 108.900,43.600 122.600,46.500 134.700,54.300 134.700,63.700 130.400,70.600 127.500,83.500" fill="#5d4b47"/><polygon points="104,60 110,56 120,66 116,72" fill="#6f7a45" opacity=".8"/><path d="M24 0L46 22L66 24L84 30L104 40" stroke="#3f5f40" stroke-width="14" fill="none" stroke-linejoin="round"/><rect x="91.9" y="30.0" width="2.1" height="1.3" fill="#c4bca8" opacity=".7" transform="rotate(35 91.9 30.0)"/><rect x="59.3" y="20.1" width="2.6" height="1.9" fill="#7a6248" opacity=".7" transform="rotate(35 59.3 20.1)"/><rect x="39.7" y="16.9" width="2.0" height="2.1" fill="#a08a58" opacity=".7" transform="rotate(35 39.7 16.9)"/><rect x="88.0" y="31.9" width="2.6" height="1.2" fill="#587850" opacity=".7" transform="rotate(35 88.0 31.9)"/><rect x="92.4" y="40.6" width="2.3" height="1.9" fill="#b8a058" opacity=".7" transform="rotate(35 92.4 40.6)"/><rect x="86.8" y="29.0" width="1.6" height="1.1" fill="#4a6a44" opacity=".7" transform="rotate(35 86.8 29.0)"/><rect x="76.4" y="19.8" width="1.2" height="1.6" fill="#b0a480" opacity=".7" transform="rotate(35 76.4 19.8)"/><rect x="88.6" y="26.6" width="2.2" height="1.2" fill="#5f7f50" opacity=".7" transform="rotate(35 88.6 26.6)"/><rect x="72.9" y="25.3" width="2.2" height="1.0" fill="#8e5e46" opacity=".7" transform="rotate(35 72.9 25.3)"/><rect x="84.7" y="29.2" width="2.2" height="1.4" fill="#a86e4c" opacity=".7" transform="rotate(35 84.7 29.2)"/><rect x="64.4" y="25.5" width="2.5" height="1.3" fill="#b8a058" opacity=".7" transform="rotate(35 64.4 25.5)"/><rect x="62.1" y="28.8" width="1.2" height="1.6" fill="#c4bca8" opacity=".7" transform="rotate(35 62.1 28.8)"/><rect x="62.3" y="19.8" width="1.3" height="1.1" fill="#c4bca8" opacity=".7" transform="rotate(35 62.3 19.8)"/><rect x="68.1" y="20.5" width="2.6" height="2.2" fill="#a86e4c" opacity=".7" transform="rotate(35 68.1 20.5)"/><rect x="98.5" y="45.3" width="1.3" height="1.6" fill="#7a6248" opacity=".7" transform="rotate(35 98.5 45.3)"/><rect x="67.1" y="28.8" width="2.2" height="1.2" fill="#b8a058" opacity=".7" transform="rotate(35 67.1 28.8)"/><rect x="39.4" y="13.7" width="1.5" height="1.9" fill="#8e5e46" opacity=".7" transform="rotate(35 39.4 13.7)"/><rect x="29.3" y="5.5" width="2.4" height="1.9" fill="#b8b09a" opacity=".7" transform="rotate(35 29.3 5.5)"/><rect x="73.2" y="32.1" width="2.4" height="2.1" fill="#587850" opacity=".7" transform="rotate(35 73.2 32.1)"/><rect x="85.1" y="23.2" width="1.5" height="1.0" fill="#4a6a44" opacity=".7" transform="rotate(35 85.1 23.2)"/><rect x="83.8" y="26.0" width="1.8" height="1.2" fill="#4a6a44" opacity=".7" transform="rotate(35 83.8 26.0)"/><rect x="49.2" y="17.0" width="2.4" height="1.8" fill="#c4bca8" opacity=".7" transform="rotate(35 49.2 17.0)"/><rect x="100.2" y="35.3" width="1.4" height="1.1" fill="#7a6248" opacity=".7" transform="rotate(35 100.2 35.3)"/><rect x="60.5" y="22.7" width="1.3" height="1.4" fill="#a86e4c" opacity=".7" transform="rotate(35 60.5 22.7)"/><rect x="68.6" y="18.6" width="1.4" height="1.7" fill="#8e5e46" opacity=".7" transform="rotate(35 68.6 18.6)"/><rect x="55.1" y="25.3" width="2.7" height="1.2" fill="#5f7f50" opacity=".7" transform="rotate(35 55.1 25.3)"/><rect x="106.4" y="36.9" width="2.4" height="1.5" fill="#c4bca8" opacity=".7" transform="rotate(35 106.4 36.9)"/><rect x="29.0" y="7.8" width="2.1" height="1.5" fill="#a08a58" opacity=".7" transform="rotate(35 29.0 7.8)"/><rect x="95.7" y="26.7" width="2.4" height="1.2" fill="#b8a058" opacity=".7" transform="rotate(35 95.7 26.7)"/><rect x="62.5" y="22.3" width="2.2" height="2.1" fill="#6a7a62" opacity=".7" transform="rotate(35 62.5 22.3)"/><rect x="91.2" y="23.9" width="1.5" height="1.4" fill="#b0a480" opacity=".7" transform="rotate(35 91.2 23.9)"/><rect x="37.9" y="14.9" width="1.9" height="1.7" fill="#4a6a44" opacity=".7" transform="rotate(35 37.9 14.9)"/><rect x="85.1" y="32.1" width="2.1" height="1.9" fill="#6a7a62" opacity=".7" transform="rotate(35 85.1 32.1)"/><rect x="41.0" y="19.9" width="2.8" height="1.9" fill="#6a7a62" opacity=".7" transform="rotate(35 41.0 19.9)"/><rect x="79.4" y="23.6" width="2.7" height="1.7" fill="#b0a480" opacity=".7" transform="rotate(35 79.4 23.6)"/><rect x="84.6" y="34.2" width="1.2" height="1.7" fill="#587850" opacity=".7" transform="rotate(35 84.6 34.2)"/><rect x="91.8" y="36.3" width="1.3" height="1.1" fill="#b8b09a" opacity=".7" transform="rotate(35 91.8 36.3)"/><rect x="81.8" y="25.8" width="1.6" height="2.1" fill="#b8b09a" opacity=".7" transform="rotate(35 81.8 25.8)"/><rect x="79.6" y="31.8" width="2.1" height="1.5" fill="#a08a58" opacity=".7" transform="rotate(35 79.6 31.8)"/><rect x="30.8" y="17.1" width="1.4" height="2.2" fill="#587850" opacity=".7" transform="rotate(35 30.8 17.1)"/><rect x="27.5" y="8.9" width="2.2" height="1.4" fill="#8e5e46" opacity=".7" transform="rotate(35 27.5 8.9)"/><rect x="92.4" y="37.3" width="1.2" height="2.0" fill="#8e5e46" opacity=".7" transform="rotate(35 92.4 37.3)"/><rect x="70.9" y="28.4" width="2.2" height="2.0" fill="#8e5e46" opacity=".7" transform="rotate(35 70.9 28.4)"/><rect x="24.6" y="7.5" width="1.7" height="1.5" fill="#a08a58" opacity=".7" transform="rotate(35 24.6 7.5)"/><rect x="66.2" y="21.1" width="2.0" height="2.0" fill="#b8b09a" opacity=".7" transform="rotate(35 66.2 21.1)"/><rect x="36.9" y="6.6" width="1.9" height="1.1" fill="#b0a480" opacity=".7" transform="rotate(35 36.9 6.6)"/><rect x="67.3" y="19.4" width="2.4" height="2.0" fill="#b0a480" opacity=".7" transform="rotate(35 67.3 19.4)"/><rect x="28.7" y="5.2" width="1.7" height="1.6" fill="#b8a058" opacity=".7" transform="rotate(35 28.7 5.2)"/><rect x="106.0" y="32.2" width="1.3" height="1.1" fill="#587850" opacity=".7" transform="rotate(35 106.0 32.2)"/><rect x="81.4" y="29.1" width="2.8" height="2.1" fill="#b8a058" opacity=".7" transform="rotate(35 81.4 29.1)"/><rect x="82.5" y="30.8" width="2.5" height="2.1" fill="#a08a58" opacity=".7" transform="rotate(35 82.5 30.8)"/><rect x="75.0" y="31.7" width="2.6" height="1.5" fill="#a08a58" opacity=".7" transform="rotate(35 75.0 31.7)"/><rect x="46.0" y="15.0" width="2.3" height="1.3" fill="#5f7f50" opacity=".7" transform="rotate(35 46.0 15.0)"/><rect x="85.1" y="32.2" width="1.5" height="1.2" fill="#4a6a44" opacity=".7" transform="rotate(35 85.1 32.2)"/><rect x="76.9" y="29.5" width="2.4" height="1.9" fill="#a86e4c" opacity=".7" transform="rotate(35 76.9 29.5)"/><rect x="44.4" y="21.0" width="1.2" height="1.3" fill="#a86e4c" opacity=".7" transform="rotate(35 44.4 21.0)"/><rect x="95.3" y="40.6" width="2.4" height="2.1" fill="#b0a480" opacity=".7" transform="rotate(35 95.3 40.6)"/><rect x="62.8" y="29.3" width="1.7" height="1.8" fill="#a86e4c" opacity=".7" transform="rotate(35 62.8 29.3)"/><rect x="24.4" y="5.1" width="1.5" height="1.1" fill="#4a6a44" opacity=".7" transform="rotate(35 24.4 5.1)"/><rect x="74.9" y="23.6" width="2.7" height="1.8" fill="#4a6a44" opacity=".7" transform="rotate(35 74.9 23.6)"/><path d="M26 2L34 10L40 18" stroke="#8fb0c8" stroke-width=".7" fill="none" opacity=".7"/><polygon points="50.300,40 53.400,44.400 59.200,41.700 62.400,37.500 61,34.100 55,34" fill="#1d4023"/><polygon points="37.900,112 51.200,96.500 68.400,112 52,132.600 47.700,125.700" fill="#a89d8b"/><polygon points="44,110 52,101 60,110 52,120" fill="#b8ad9c"/><polygon points="52,132.600 68.400,113.700 81.300,124.900 71,141.200" fill="#6a5a44"/><polygon points="60,123 68.400,113.700 75,119.500 66,130" fill="#77684e"/><polygon points="68.400,112 69.200,109.400 90.800,128.800 83,126.600" fill="#2a5a26"/><polygon points="71,143 83,126.600 90.800,130.900 68.100,162 57,162" fill="#b88a38"/><polygon points="68.100,162 90.800,131.800 96.800,136 77.800,162" fill="#c99682"/><polygon points="77.800,162 97.700,136.400 102,140.400 86.200,162" fill="#9aa04a"/><polygon points="86.200,162 102.800,140.900 122,160 120,162" fill="#b05a48"/><polygon points="52,132.600 71,141.200 57,162 44,162 50,140" fill="#4a5a3c"/></g><rect x="-30" y="-10" width="220" height="180" filter="url(#nz)" opacity=".38"/><rect x="-30" y="-10" width="220" height="180" filter="url(#nzl)" opacity=".07"/><clipPath id="cpm8"><polygon points="44.3,27.2 53.4,34.1 50.3,40.0 53.4,44.4 59.2,41.7 62.4,37.5 61.0,34.1 64.9,26.4 79.6,31.9 93.9,42.2 101.4,35.7 108.3,43.1 96.3,55.5 127.5,83.5 90.8,128.8 69.2,109.4 43.1,86.1 28.8,60.3 43.1,43.9"/></clipPath><g clip-path="url(#cpm8)"><rect x="20" y="20" width="115" height="115" fill="#55c90e"/></g><text x="46.800" y="24.300" font-size="2.900" fill="#fff" font-weight="700" font-family="Liberation Sans, sans-serif" opacity=".92">Вовківці</text></g><rect x="0.300" y="3.800" width="5.500" height="6.900" fill="#fafafa"/><path d="M2.200 6.400l1.800 1.800m0 -1.800l-1.800 1.800" stroke="#777" stroke-width=".5"/><rect x="67.2" y="9" width="32.7" height="8" fill="#f6f6f6"/><text x="68.8" y="14" font-size="2.800" fill="#444" font-family="Liberation Sans, sans-serif">2023 Кукурудза</text><path d="M94.9 12.300l1.500 1.600l1.500 -1.600" stroke="#666" stroke-width=".5" fill="none"/><rect x="104.3" y="9" width="33" height="8" fill="#f6f6f6"/><text x="105.89999999999999" y="14" font-size="2.800" fill="#444" font-family="Liberation Sans, sans-serif">Розподіл</text><path d="M132.3 12.300l1.500 1.600l1.500 -1.600" stroke="#666" stroke-width=".5" fill="none"/><rect x="141.600" y="9" width="8.200" height="8" fill="#f6f6f6"/><rect x="143.800" y="11.200" width="3.800" height="3.800" fill="none" stroke="#777" stroke-width=".5"/><rect x="154.500" y="9" width="4" height="8" fill="#f6f6f6"/><rect x="129.200" y="132.400" width="8.100" height="8.400" fill="#f6f6f6"/><circle cx="133.300" cy="136.600" r="2.200" fill="none" stroke="#666" stroke-width=".5"/><rect x="141.600" y="132.400" width="8.200" height="8.400" fill="#f6f6f6"/><path d="M145.700 134.300v4.600" stroke="#444" stroke-width=".7"/><rect x="144.700" y="134.300" width="2" height="1.800" fill="#444"/><rect x="154.500" y="132.400" width="4" height="8.400" fill="#f6f6f6"/><rect x="2" y="140.300" width="15" height="1.500" fill="#dfe6df" opacity=".75"/><rect x="2" y="142.800" width="6" height="1.500" fill="#fff" opacity=".8"/><rect x="143" y="1.800" width="13" height="1.500" fill="#111" opacity=".8"/><rect x="129.5" y="98.5" width="28.5" height="28" fill="#f8f8f8"/><rect x="155.7" y="100.5" width="1.800" height="6.1" fill="#e86a6a"/><text x="154.8" y="104.3" font-size="2.300" fill="#666" text-anchor="end" font-family="Liberation Sans, sans-serif">Критично низька</text><rect x="155.7" y="106.5" width="1.800" height="6.1" fill="#4a90d8"/><text x="154.8" y="110.3" font-size="2.300" fill="#666" text-anchor="end" font-family="Liberation Sans, sans-serif">Нижче норми</text><rect x="155.7" y="112.5" width="1.800" height="6.1" fill="#7ad83a"/><text x="154.8" y="116.3" font-size="2.300" fill="#666" text-anchor="end" font-family="Liberation Sans, sans-serif">Висока точність посіву</text><rect x="155.7" y="118.5" width="1.800" height="6.1" fill="#e8e8e8"/><text x="154.8" y="122.3" font-size="2.300" fill="#666" text-anchor="end" font-family="Liberation Sans, sans-serif">н/д</text></svg><g font-family="Liberation Sans, sans-serif"><circle cx="9" cy="151.400" r="1.700" fill="none" stroke="#444" stroke-width=".6"/><text x="12.5" y="152.300" font-size="2.600" fill="#858585">Головна сторінка</text><rect x="49.500" y="149.800" width="3.300" height="3.300" rx=".6" fill="#3a86e8"/><text x="54.3" y="152.300" font-size="2.600" fill="#3a86e8">Поле</text><rect x="76.800" y="149.600" width="2.600" height="3.600" fill="none" stroke="#444" stroke-width=".6"/><text x="82" y="152.300" font-size="2.600" fill="#858585">Звіти</text><rect x="103.600" y="149.700" width="3.400" height="3.400" fill="none" stroke="#444" stroke-width=".6"/><path d="M105.300 149.700v3.400M103.600 151.400h3.400" stroke="#444" stroke-width=".4"/><text x="109.3" y="152.300" font-size="2.600" fill="#858585">Карти завдань</text><circle cx="144" cy="151.400" r="1.700" fill="#555"/><circle cx="144" cy="151.400" r=".6" fill="#fff"/><text x="148" y="152.300" font-size="2.600" fill="#858585">Налаштування</text><path d="M180.500 152.500v-2h2.500l1 -1h1.500v3z" fill="#555"/><circle cx="181.500" cy="153" r=".9" fill="#333"/><circle cx="185" cy="153" r="1.100" fill="#333"/><text x="188" y="152.300" font-size="2.600" fill="#858585">Field View Cab</text><rect x="75.500" y="155.800" width="60" height="1.300" rx=".6" fill="#222"/></g></svg>
<svg style="left:787.1px;top:365px;overflow:hidden" width="212" height="162" viewBox="0 -2 212 162"><g font-family="Liberation Sans, sans-serif"><text x="0" y="2.9" font-size="2.3" fill="#555" font-weight="400" text-anchor="start">‹ 14:37 год.</text><text x="0" y="10.4" font-size="2.9" fill="#2a7ae8" font-weight="400" text-anchor="start">Назад</text><text x="10.6" y="10.4" font-size="2.9" fill="#111" font-weight="700" text-anchor="start">Чевгузів 11.(50)</text><rect x="0" y="14.200" width="53" height=".5" fill="#e2e2e2"/><text x="0" y="19.7" font-size="2.7" fill="#777" font-weight="400" text-anchor="start">11 га • Кукурудза 2023 • 871 Новоставці,</text><text x="0" y="22.8" font-size="2.7" fill="#777" font-weight="400" text-anchor="start">Кукурузи</text><rect x="0" y="26.7" width="53.300" height="8" fill="#eeeeee"/><rect x="0" y="61" width="53.300" height="8" fill="#eeeeee"/><rect x="0" y="95.6" width="53.300" height="8" fill="#eeeeee"/><rect x="0" y="130" width="53.300" height="8" fill="#eeeeee"/><text x="0" y="40.3" font-size="2.9" fill="#111" font-weight="700" text-anchor="start">ля</text><text x="22" y="48.6" font-size="2.7" fill="#777" font-weight="400" text-anchor="middle">Обробка даних про поля…</text><text x="0" y="74.3" font-size="2.9" fill="#111" font-weight="700" text-anchor="start">ки та ділянки</text><text x="23" y="82.4" font-size="2.7" fill="#777" font-weight="400" text-anchor="middle">Для цього сезону немає збережених</text><text x="23" y="85.4" font-size="2.7" fill="#777" font-weight="400" text-anchor="middle">зон або ділянок.</text><text x="0" y="108.7" font-size="2.9" fill="#111" font-weight="700" text-anchor="start">нотатки до поля</text><circle cx="47.200" cy="107.700" r="2.100" fill="#e8f1fc" stroke="#4a90e2" stroke-width=".6"/><text x="23" y="116.7" font-size="2.7" fill="#777" font-weight="400" text-anchor="middle">Немає приміток до поля.</text><text x="24" y="119.7" font-size="2.7" fill="#777" font-weight="400" text-anchor="middle">Натисніть +, щоб додати нову примітку.</text><text x="0" y="143.8" font-size="2.9" fill="#111" font-weight="700" text-anchor="start">границі поля</text></g><svg x="53.3" y="0" width="158" height="146" viewBox="0 0 158 146" overflow="hidden"><g transform="translate(-1,-0.8) scale(1)"><g filter="url(#b05)"><rect x="-30" y="-10" width="220" height="180" fill="#2d5232"/><polygon points="-30,-10 27,-10 45,27 29,60 -30,20" fill="#3a6334"/><polygon points="3,2 24,1 40,28 27,52 2,30" fill="#40683a"/><polygon points="-30,40 10,52 26,66 42,88 50,98 38,112 50,132 44,170 -30,170" fill="#21442c"/><polygon points="0,62 14,58 30,80 36,100 22,116 8,104 0,108" fill="#1c3b27"/><polygon points="-30,126 16,115 33,132 28,170 -30,170" fill="#3f6239"/><polygon points="2,64 10,60 14,70 6,78" fill="#143621"/><path d="M0 36L30 58M4 56L28 60" stroke="#6b7f58" stroke-width=".8" fill="none" opacity=".7"/><polygon points="28,-10 190,-10 190,12 100,14 64,8" fill="#375c31"/><polygon points="100,14 130,12 128,30 112,34 96,24" fill="#447a37"/><polygon points="133,-10 190,-10 190,30 151.900,34.400 128.700,29.300 130.400,12" fill="#95866a"/><polygon points="136,2 156,0 152,26 135,24" fill="#a8977a"/><polygon points="128,30 152,35 158,34 190,40 190,52 150,50 130,44" fill="#2b4e30"/><polygon points="135,44 190,52 190,78 142,74 132,68" fill="#26482d"/><polygon points="141.600,77.500 190,90 190,104 148.500,95.600" fill="#a3917a"/><polygon points="127.500,83.500 148,96 190,106 190,170 118,170 90.800,128.800" fill="#305532"/><polygon points="96.300,55.500 108.900,43.600 122.600,46.500 134.700,54.300 134.700,63.700 130.400,70.600 127.500,83.500" fill="#5d4b47"/><polygon points="104,60 110,56 120,66 116,72" fill="#6f7a45" opacity=".8"/><path d="M24 0L46 22L66 24L84 30L104 40" stroke="#3f5f40" stroke-width="14" fill="none" stroke-linejoin="round"/><rect x="27.9" y="4.9" width="2.7" height="1.0" fill="#5f7f50" opacity=".7" transform="rotate(35 27.9 4.9)"/><rect x="55.2" y="29.7" width="2.2" height="1.7" fill="#7a6248" opacity=".7" transform="rotate(35 55.2 29.7)"/><rect x="83.2" y="32.1" width="1.6" height="1.3" fill="#a08a58" opacity=".7" transform="rotate(35 83.2 32.1)"/><rect x="37.2" y="10.1" width="2.2" height="1.8" fill="#587850" opacity=".7" transform="rotate(35 37.2 10.1)"/><rect x="74.7" y="27.6" width="2.3" height="1.4" fill="#b0a480" opacity=".7" transform="rotate(35 74.7 27.6)"/><rect x="83.0" y="23.5" width="1.3" height="1.7" fill="#587850" opacity=".7" transform="rotate(35 83.0 23.5)"/><rect x="72.1" y="26.6" width="1.6" height="1.9" fill="#7a6248" opacity=".7" transform="rotate(35 72.1 26.6)"/><rect x="92.6" y="34.5" width="2.3" height="1.2" fill="#587850" opacity=".7" transform="rotate(35 92.6 34.5)"/><rect x="99.3" y="34.6" width="1.7" height="1.2" fill="#c4bca8" opacity=".7" transform="rotate(35 99.3 34.6)"/><rect x="86.5" y="38.1" width="2.5" height="1.8" fill="#5f7f50" opacity=".7" transform="rotate(35 86.5 38.1)"/><rect x="79.8" y="21.0" width="1.3" height="1.9" fill="#4a6a44" opacity=".7" transform="rotate(35 79.8 21.0)"/><rect x="74.5" y="21.6" width="1.4" height="1.1" fill="#a08a58" opacity=".7" transform="rotate(35 74.5 21.6)"/><rect x="58.8" y="24.0" width="1.6" height="1.1" fill="#a08a58" opacity=".7" transform="rotate(35 58.8 24.0)"/><rect x="53.5" y="28.3" width="1.8" height="1.7" fill="#7a6248" opacity=".7" transform="rotate(35 53.5 28.3)"/><rect x="40.2" y="8.7" width="1.8" height="1.6" fill="#b0a480" opacity=".7" transform="rotate(35 40.2 8.7)"/><rect x="99.5" y="30.2" width="2.4" height="2.1" fill="#a08a58" opacity=".7" transform="rotate(35 99.5 30.2)"/><rect x="39.4" y="15.8" width="1.8" height="1.4" fill="#4a6a44" opacity=".7" transform="rotate(35 39.4 15.8)"/><rect x="92.1" y="28.8" width="1.4" height="1.5" fill="#a86e4c" opacity=".7" transform="rotate(35 92.1 28.8)"/><rect x="38.1" y="19.8" width="1.4" height="1.6" fill="#587850" opacity=".7" transform="rotate(35 38.1 19.8)"/><rect x="64.0" y="23.7" width="2.7" height="2.1" fill="#c4bca8" opacity=".7" transform="rotate(35 64.0 23.7)"/><rect x="55.9" y="17.5" width="1.8" height="1.6" fill="#a86e4c" opacity=".7" transform="rotate(35 55.9 17.5)"/><rect x="63.9" y="21.4" width="2.4" height="1.7" fill="#c4bca8" opacity=".7" transform="rotate(35 63.9 21.4)"/><rect x="39.9" y="10.0" width="1.6" height="1.2" fill="#a86e4c" opacity=".7" transform="rotate(35 39.9 10.0)"/><rect x="36.9" y="15.4" width="2.7" height="1.6" fill="#587850" opacity=".7" transform="rotate(35 36.9 15.4)"/><rect x="39.9" y="13.4" width="1.4" height="1.3" fill="#a86e4c" opacity=".7" transform="rotate(35 39.9 13.4)"/><rect x="32.8" y="5.6" width="1.6" height="1.6" fill="#4a6a44" opacity=".7" transform="rotate(35 32.8 5.6)"/><rect x="77.2" y="21.0" width="2.0" height="1.9" fill="#8e5e46" opacity=".7" transform="rotate(35 77.2 21.0)"/><rect x="80.5" y="29.9" width="1.4" height="1.4" fill="#c4bca8" opacity=".7" transform="rotate(35 80.5 29.9)"/><rect x="94.5" y="35.5" width="2.6" height="1.4" fill="#4a6a44" opacity=".7" transform="rotate(35 94.5 35.5)"/><rect x="36.2" y="17.4" width="2.6" height="1.1" fill="#b8b09a" opacity=".7" transform="rotate(35 36.2 17.4)"/><rect x="89.0" y="40.7" width="2.5" height="1.4" fill="#a86e4c" opacity=".7" transform="rotate(35 89.0 40.7)"/><rect x="78.1" y="24.6" width="2.3" height="1.0" fill="#6a7a62" opacity=".7" transform="rotate(35 78.1 24.6)"/><rect x="44.2" y="20.7" width="2.7" height="1.6" fill="#b8b09a" opacity=".7" transform="rotate(35 44.2 20.7)"/><rect x="70.8" y="31.6" width="1.5" height="2.2" fill="#6a7a62" opacity=".7" transform="rotate(35 70.8 31.6)"/><rect x="54.3" y="25.7" width="1.3" height="1.2" fill="#c4bca8" opacity=".7" transform="rotate(35 54.3 25.7)"/><rect x="71.5" y="26.3" width="1.5" height="2.0" fill="#a08a58" opacity=".7" transform="rotate(35 71.5 26.3)"/><rect x="42.0" y="15.1" width="2.0" height="1.7" fill="#c4bca8" opacity=".7" transform="rotate(35 42.0 15.1)"/><rect x="32.5" y="6.8" width="2.7" height="1.2" fill="#7a6248" opacity=".7" transform="rotate(35 32.5 6.8)"/><rect x="98.8" y="37.4" width="2.4" height="1.2" fill="#c4bca8" opacity=".7" transform="rotate(35 98.8 37.4)"/><rect x="39.9" y="14.1" width="1.9" height="2.1" fill="#4a6a44" opacity=".7" transform="rotate(35 39.9 14.1)"/><rect x="38.7" y="23.0" width="2.7" height="1.9" fill="#b0a480" opacity=".7" transform="rotate(35 38.7 23.0)"/><rect x="34.3" y="-1.0" width="1.2" height="1.3" fill="#5f7f50" opacity=".7" transform="rotate(35 34.3 -1.0)"/><rect x="79.7" y="25.1" width="1.3" height="1.5" fill="#5f7f50" opacity=".7" transform="rotate(35 79.7 25.1)"/><rect x="90.7" y="32.5" width="1.4" height="1.3" fill="#4a6a44" opacity=".7" transform="rotate(35 90.7 32.5)"/><rect x="70.7" y="22.9" width="2.0" height="1.7" fill="#c4bca8" opacity=".7" transform="rotate(35 70.7 22.9)"/><rect x="36.3" y="7.7" width="1.5" height="1.8" fill="#5f7f50" opacity=".7" transform="rotate(35 36.3 7.7)"/><rect x="75.1" y="33.8" width="1.6" height="2.0" fill="#587850" opacity=".7" transform="rotate(35 75.1 33.8)"/><rect x="85.1" y="29.4" width="2.3" height="2.0" fill="#a08a58" opacity=".7" transform="rotate(35 85.1 29.4)"/><rect x="59.4" y="27.2" width="2.7" height="2.1" fill="#6a7a62" opacity=".7" transform="rotate(35 59.4 27.2)"/><rect x="104.7" y="34.6" width="1.9" height="2.1" fill="#b8b09a" opacity=".7" transform="rotate(35 104.7 34.6)"/><rect x="67.7" y="19.9" width="2.4" height="1.4" fill="#587850" opacity=".7" transform="rotate(35 67.7 19.9)"/><rect x="57.1" y="26.6" width="1.4" height="1.3" fill="#b8b09a" opacity=".7" transform="rotate(35 57.1 26.6)"/><rect x="88.9" y="35.3" width="2.6" height="1.7" fill="#4a6a44" opacity=".7" transform="rotate(35 88.9 35.3)"/><rect x="32.0" y="13.0" width="2.1" height="1.4" fill="#587850" opacity=".7" transform="rotate(35 32.0 13.0)"/><rect x="82.1" y="34.7" width="2.3" height="1.8" fill="#7a6248" opacity=".7" transform="rotate(35 82.1 34.7)"/><rect x="52.2" y="25.0" width="1.7" height="1.7" fill="#b8b09a" opacity=".7" transform="rotate(35 52.2 25.0)"/><rect x="78.6" y="33.8" width="1.5" height="1.9" fill="#5f7f50" opacity=".7" transform="rotate(35 78.6 33.8)"/><rect x="72.0" y="21.5" width="1.9" height="1.8" fill="#b8a058" opacity=".7" transform="rotate(35 72.0 21.5)"/><rect x="33.6" y="5.4" width="1.9" height="1.7" fill="#a08a58" opacity=".7" transform="rotate(35 33.6 5.4)"/><rect x="23.2" y="1.6" width="2.3" height="1.0" fill="#b8b09a" opacity=".7" transform="rotate(35 23.2 1.6)"/><path d="M26 2L34 10L40 18" stroke="#8fb0c8" stroke-width=".7" fill="none" opacity=".7"/><polygon points="50.300,40 53.400,44.400 59.200,41.700 62.400,37.500 61,34.100 55,34" fill="#1d4023"/><polygon points="37.900,112 51.200,96.500 68.400,112 52,132.600 47.700,125.700" fill="#a89d8b"/><polygon points="44,110 52,101 60,110 52,120" fill="#b8ad9c"/><polygon points="52,132.600 68.400,113.700 81.300,124.900 71,141.200" fill="#6a5a44"/><polygon points="60,123 68.400,113.700 75,119.500 66,130" fill="#77684e"/><polygon points="68.400,112 69.200,109.400 90.800,128.800 83,126.600" fill="#2a5a26"/><polygon points="71,143 83,126.600 90.800,130.900 68.100,162 57,162" fill="#b88a38"/><polygon points="68.100,162 90.800,131.800 96.800,136 77.800,162" fill="#c99682"/><polygon points="77.800,162 97.700,136.400 102,140.400 86.200,162" fill="#9aa04a"/><polygon points="86.200,162 102.800,140.900 122,160 120,162" fill="#b05a48"/><polygon points="52,132.600 71,141.200 57,162 44,162 50,140" fill="#4a5a3c"/></g><rect x="-30" y="-10" width="220" height="180" filter="url(#nz)" opacity=".38"/><rect x="-30" y="-10" width="220" height="180" filter="url(#nzl)" opacity=".07"/><clipPath id="cpm9"><polygon points="44.3,27.2 53.4,34.1 50.3,40.0 53.4,44.4 59.2,41.7 62.4,37.5 61.0,34.1 64.9,26.4 79.6,31.9 93.9,42.2 101.4,35.7 108.3,43.1 96.3,55.5 127.5,83.5 90.8,128.8 69.2,109.4 43.1,86.1 28.8,60.3 43.1,43.9"/></clipPath><g clip-path="url(#cpm9)"><rect x="20" y="20" width="115" height="115" fill="#55c90e"/></g><text x="46.800" y="24.300" font-size="2.900" fill="#fff" font-weight="700" font-family="Liberation Sans, sans-serif" opacity=".92">Вовківці</text></g><rect x="0.300" y="3.800" width="5.500" height="6.900" fill="#fafafa"/><path d="M2.200 6.400l1.800 1.800m0 -1.800l-1.800 1.800" stroke="#777" stroke-width=".5"/><rect x="67.2" y="9" width="32.7" height="8" fill="#f6f6f6"/><text x="68.8" y="14" font-size="2.800" fill="#444" font-family="Liberation Sans, sans-serif">2023 Кукурудза</text><path d="M94.9 12.300l1.500 1.600l1.500 -1.600" stroke="#666" stroke-width=".5" fill="none"/><rect x="104.3" y="9" width="33" height="8" fill="#f6f6f6"/><text x="105.89999999999999" y="14" font-size="2.800" fill="#444" font-family="Liberation Sans, sans-serif">Відстань між н...</text><path d="M132.3 12.300l1.500 1.600l1.500 -1.600" stroke="#666" stroke-width=".5" fill="none"/><rect x="141.600" y="9" width="8.200" height="8" fill="#f6f6f6"/><rect x="143.800" y="11.200" width="3.800" height="3.800" fill="none" stroke="#777" stroke-width=".5"/><rect x="154.500" y="9" width="4" height="8" fill="#f6f6f6"/><rect x="129.200" y="132.400" width="8.100" height="8.400" fill="#f6f6f6"/><circle cx="133.300" cy="136.600" r="2.200" fill="none" stroke="#666" stroke-width=".5"/><rect x="141.600" y="132.400" width="8.200" height="8.400" fill="#f6f6f6"/><path d="M145.700 134.300v4.600" stroke="#444" stroke-width=".7"/><rect x="144.700" y="134.300" width="2" height="1.800" fill="#444"/><rect x="154.500" y="132.400" width="4" height="8.400" fill="#f6f6f6"/><rect x="2" y="140.300" width="15" height="1.500" fill="#dfe6df" opacity=".75"/><rect x="2" y="142.800" width="6" height="1.500" fill="#fff" opacity=".8"/><rect x="143" y="1.800" width="13" height="1.500" fill="#111" opacity=".8"/><rect x="128" y="98" width="30" height="27" fill="#f8f8f8"/><rect x="155.7" y="100.0" width="1.800" height="5.8" fill="#e86a6a"/><text x="154.8" y="103.7" font-size="2.300" fill="#666" text-anchor="end" font-family="Liberation Sans, sans-serif">Критично низька</text><rect x="155.7" y="105.8" width="1.800" height="5.8" fill="#f0a030"/><text x="154.8" y="109.4" font-size="2.300" fill="#666" text-anchor="end" font-family="Liberation Sans, sans-serif">Нижче норми</text><rect x="155.7" y="111.5" width="1.800" height="5.8" fill="#7ad83a"/><text x="154.8" y="115.2" font-size="2.300" fill="#666" text-anchor="end" font-family="Liberation Sans, sans-serif">Висока точність посіву</text><rect x="155.7" y="117.2" width="1.800" height="5.8" fill="#e8e8e8"/><text x="154.8" y="120.9" font-size="2.300" fill="#666" text-anchor="end" font-family="Liberation Sans, sans-serif">н/д</text></svg><g font-family="Liberation Sans, sans-serif"><circle cx="9" cy="151.400" r="1.700" fill="none" stroke="#444" stroke-width=".6"/><text x="12.5" y="152.300" font-size="2.600" fill="#858585">Головна сторінка</text><rect x="49.500" y="149.800" width="3.300" height="3.300" rx=".6" fill="#3a86e8"/><text x="54.3" y="152.300" font-size="2.600" fill="#3a86e8">Поле</text><rect x="76.800" y="149.600" width="2.600" height="3.600" fill="none" stroke="#444" stroke-width=".6"/><text x="82" y="152.300" font-size="2.600" fill="#858585">Звіти</text><rect x="103.600" y="149.700" width="3.400" height="3.400" fill="none" stroke="#444" stroke-width=".6"/><path d="M105.300 149.700v3.400M103.600 151.400h3.400" stroke="#444" stroke-width=".4"/><text x="109.3" y="152.300" font-size="2.600" fill="#858585">Карти завдань</text><circle cx="144" cy="151.400" r="1.700" fill="#555"/><circle cx="144" cy="151.400" r=".6" fill="#fff"/><text x="148" y="152.300" font-size="2.600" fill="#858585">Налаштування</text><path d="M180.500 152.500v-2h2.500l1 -1h1.500v3z" fill="#555"/><circle cx="181.500" cy="153" r=".9" fill="#333"/><circle cx="185" cy="153" r="1.100" fill="#333"/><text x="188" y="152.300" font-size="2.600" fill="#858585">Field View Cab</text><rect x="75.500" y="155.800" width="60" height="1.300" rx=".6" fill="#222"/></g></svg>
<svg style="left:787.1px;top:525.7px;overflow:hidden" width="212" height="162" viewBox="0 -2 212 162"><g font-family="Liberation Sans, sans-serif"><text x="0" y="2.9" font-size="2.3" fill="#555" font-weight="400" text-anchor="start">‹ 14:37 год.</text><text x="0" y="10.4" font-size="2.9" fill="#2a7ae8" font-weight="400" text-anchor="start">Назад</text><text x="10.6" y="10.4" font-size="2.9" fill="#111" font-weight="700" text-anchor="start">Чевгузів 11.(50)</text><rect x="0" y="14.200" width="53" height=".5" fill="#e2e2e2"/><text x="0" y="19.7" font-size="2.7" fill="#777" font-weight="400" text-anchor="start">11 га • Кукурудза 2023 • 871 Новоставці,</text><text x="0" y="22.8" font-size="2.7" fill="#777" font-weight="400" text-anchor="start">Кукурузи</text><rect x="0" y="26.7" width="53.300" height="8" fill="#eeeeee"/><rect x="0" y="61" width="53.300" height="8" fill="#eeeeee"/><rect x="0" y="95.6" width="53.300" height="8" fill="#eeeeee"/><rect x="0" y="130" width="53.300" height="8" fill="#eeeeee"/><text x="0" y="40.3" font-size="2.9" fill="#111" font-weight="700" text-anchor="start">ля</text><text x="22" y="48.6" font-size="2.7" fill="#777" font-weight="400" text-anchor="middle">Обробка даних про поля…</text><text x="0" y="74.3" font-size="2.9" fill="#111" font-weight="700" text-anchor="start">ки та ділянки</text><text x="23" y="82.4" font-size="2.7" fill="#777" font-weight="400" text-anchor="middle">Для цього сезону немає збережених</text><text x="23" y="85.4" font-size="2.7" fill="#777" font-weight="400" text-anchor="middle">зон або ділянок.</text><text x="0" y="108.7" font-size="2.9" fill="#111" font-weight="700" text-anchor="start">нотатки до поля</text><circle cx="47.200" cy="107.700" r="2.100" fill="#e8f1fc" stroke="#4a90e2" stroke-width=".6"/><text x="23" y="116.7" font-size="2.7" fill="#777" font-weight="400" text-anchor="middle">Немає приміток до поля.</text><text x="24" y="119.7" font-size="2.7" fill="#777" font-weight="400" text-anchor="middle">Натисніть +, щоб додати нову примітку.</text><text x="0" y="143.8" font-size="2.9" fill="#111" font-weight="700" text-anchor="start">границі поля</text></g><svg x="53.3" y="0" width="158" height="146" viewBox="0 0 158 146" overflow="hidden"><g transform="translate(-1,-0.8) scale(1)"><g filter="url(#b05)"><rect x="-30" y="-10" width="220" height="180" fill="#2d5232"/><polygon points="-30,-10 27,-10 45,27 29,60 -30,20" fill="#3a6334"/><polygon points="3,2 24,1 40,28 27,52 2,30" fill="#40683a"/><polygon points="-30,40 10,52 26,66 42,88 50,98 38,112 50,132 44,170 -30,170" fill="#21442c"/><polygon points="0,62 14,58 30,80 36,100 22,116 8,104 0,108" fill="#1c3b27"/><polygon points="-30,126 16,115 33,132 28,170 -30,170" fill="#3f6239"/><polygon points="2,64 10,60 14,70 6,78" fill="#143621"/><path d="M0 36L30 58M4 56L28 60" stroke="#6b7f58" stroke-width=".8" fill="none" opacity=".7"/><polygon points="28,-10 190,-10 190,12 100,14 64,8" fill="#375c31"/><polygon points="100,14 130,12 128,30 112,34 96,24" fill="#447a37"/><polygon points="133,-10 190,-10 190,30 151.900,34.400 128.700,29.300 130.400,12" fill="#95866a"/><polygon points="136,2 156,0 152,26 135,24" fill="#a8977a"/><polygon points="128,30 152,35 158,34 190,40 190,52 150,50 130,44" fill="#2b4e30"/><polygon points="135,44 190,52 190,78 142,74 132,68" fill="#26482d"/><polygon points="141.600,77.500 190,90 190,104 148.500,95.600" fill="#a3917a"/><polygon points="127.500,83.500 148,96 190,106 190,170 118,170 90.800,128.800" fill="#305532"/><polygon points="96.300,55.500 108.900,43.600 122.600,46.500 134.700,54.300 134.700,63.700 130.400,70.600 127.500,83.500" fill="#5d4b47"/><polygon points="104,60 110,56 120,66 116,72" fill="#6f7a45" opacity=".8"/><path d="M24 0L46 22L66 24L84 30L104 40" stroke="#3f5f40" stroke-width="14" fill="none" stroke-linejoin="round"/><rect x="45.0" y="19.4" width="1.6" height="1.0" fill="#b0a480" opacity=".7" transform="rotate(35 45.0 19.4)"/><rect x="105.3" y="32.5" width="1.7" height="1.6" fill="#a86e4c" opacity=".7" transform="rotate(35 105.3 32.5)"/><rect x="52.8" y="27.6" width="1.7" height="2.1" fill="#5f7f50" opacity=".7" transform="rotate(35 52.8 27.6)"/><rect x="32.6" y="16.0" width="2.3" height="1.3" fill="#587850" opacity=".7" transform="rotate(35 32.6 16.0)"/><rect x="52.3" y="17.6" width="2.2" height="2.2" fill="#a08a58" opacity=".7" transform="rotate(35 52.3 17.6)"/><rect x="88.8" y="29.0" width="1.7" height="1.0" fill="#5f7f50" opacity=".7" transform="rotate(35 88.8 29.0)"/><rect x="92.0" y="26.2" width="2.1" height="1.2" fill="#587850" opacity=".7" transform="rotate(35 92.0 26.2)"/><rect x="61.7" y="28.0" width="2.2" height="2.0" fill="#6a7a62" opacity=".7" transform="rotate(35 61.7 28.0)"/><rect x="65.6" y="21.3" width="2.1" height="1.1" fill="#4a6a44" opacity=".7" transform="rotate(35 65.6 21.3)"/><rect x="66.1" y="23.7" width="2.0" height="1.4" fill="#a08a58" opacity=".7" transform="rotate(35 66.1 23.7)"/><rect x="29.9" y="-1.2" width="1.7" height="1.8" fill="#587850" opacity=".7" transform="rotate(35 29.9 -1.2)"/><rect x="58.0" y="19.2" width="2.8" height="2.2" fill="#5f7f50" opacity=".7" transform="rotate(35 58.0 19.2)"/><rect x="29.4" y="11.0" width="1.7" height="1.8" fill="#4a6a44" opacity=".7" transform="rotate(35 29.4 11.0)"/><rect x="104.8" y="35.7" width="1.7" height="1.9" fill="#a08a58" opacity=".7" transform="rotate(35 104.8 35.7)"/><rect x="83.4" y="28.1" width="1.7" height="1.3" fill="#7a6248" opacity=".7" transform="rotate(35 83.4 28.1)"/><rect x="103.8" y="36.7" width="1.5" height="1.1" fill="#8e5e46" opacity=".7" transform="rotate(35 103.8 36.7)"/><rect x="86.9" y="31.8" width="2.0" height="1.4" fill="#b0a480" opacity=".7" transform="rotate(35 86.9 31.8)"/><rect x="27.3" y="7.8" width="2.0" height="1.3" fill="#4a6a44" opacity=".7" transform="rotate(35 27.3 7.8)"/><rect x="66.3" y="29.3" width="2.7" height="1.5" fill="#587850" opacity=".7" transform="rotate(35 66.3 29.3)"/><rect x="55.0" y="29.0" width="2.7" height="1.7" fill="#b0a480" opacity=".7" transform="rotate(35 55.0 29.0)"/><rect x="79.8" y="36.7" width="1.4" height="2.0" fill="#8e5e46" opacity=".7" transform="rotate(35 79.8 36.7)"/><rect x="34.9" y="13.0" width="1.7" height="1.1" fill="#4a6a44" opacity=".7" transform="rotate(35 34.9 13.0)"/><rect x="84.8" y="25.0" width="1.8" height="1.1" fill="#587850" opacity=".7" transform="rotate(35 84.8 25.0)"/><rect x="25.5" y="8.3" width="1.4" height="1.1" fill="#b0a480" opacity=".7" transform="rotate(35 25.5 8.3)"/><rect x="55.7" y="24.0" width="1.9" height="1.3" fill="#c4bca8" opacity=".7" transform="rotate(35 55.7 24.0)"/><rect x="84.2" y="28.3" width="1.4" height="1.3" fill="#8e5e46" opacity=".7" transform="rotate(35 84.2 28.3)"/><rect x="30.9" y="13.7" width="2.6" height="2.1" fill="#6a7a62" opacity=".7" transform="rotate(35 30.9 13.7)"/><rect x="39.5" y="24.3" width="2.4" height="1.5" fill="#b8b09a" opacity=".7" transform="rotate(35 39.5 24.3)"/><rect x="77.7" y="25.3" width="2.7" height="1.1" fill="#8e5e46" opacity=".7" transform="rotate(35 77.7 25.3)"/><rect x="49.6" y="19.3" width="2.0" height="2.2" fill="#7a6248" opacity=".7" transform="rotate(35 49.6 19.3)"/><rect x="103.7" y="36.4" width="2.4" height="2.0" fill="#4a6a44" opacity=".7" transform="rotate(35 103.7 36.4)"/><rect x="39.4" y="21.0" width="2.6" height="1.7" fill="#a08a58" opacity=".7" transform="rotate(35 39.4 21.0)"/><rect x="83.6" y="25.0" width="1.3" height="2.2" fill="#b8b09a" opacity=".7" transform="rotate(35 83.6 25.0)"/><rect x="96.3" y="30.7" width="1.8" height="1.4" fill="#a86e4c" opacity=".7" transform="rotate(35 96.3 30.7)"/><rect x="54.5" y="29.4" width="1.2" height="1.8" fill="#4a6a44" opacity=".7" transform="rotate(35 54.5 29.4)"/><rect x="86.5" y="36.6" width="2.5" height="1.8" fill="#a08a58" opacity=".7" transform="rotate(35 86.5 36.6)"/><rect x="106.4" y="43.2" width="2.5" height="1.3" fill="#4a6a44" opacity=".7" transform="rotate(35 106.4 43.2)"/><rect x="51.2" y="19.9" width="1.6" height="1.9" fill="#4a6a44" opacity=".7" transform="rotate(35 51.2 19.9)"/><rect x="87.5" y="37.6" width="2.6" height="2.1" fill="#7a6248" opacity=".7" transform="rotate(35 87.5 37.6)"/><rect x="98.9" y="39.5" width="2.1" height="2.1" fill="#8e5e46" opacity=".7" transform="rotate(35 98.9 39.5)"/><rect x="108.6" y="38.8" width="1.9" height="1.9" fill="#b8b09a" opacity=".7" transform="rotate(35 108.6 38.8)"/><rect x="80.6" y="23.4" width="1.4" height="2.1" fill="#a08a58" opacity=".7" transform="rotate(35 80.6 23.4)"/><rect x="38.0" y="13.9" width="2.4" height="1.2" fill="#6a7a62" opacity=".7" transform="rotate(35 38.0 13.9)"/><rect x="73.4" y="27.0" width="1.8" height="1.8" fill="#b8a058" opacity=".7" transform="rotate(35 73.4 27.0)"/><rect x="69.2" y="27.0" width="1.7" height="2.0" fill="#b8a058" opacity=".7" transform="rotate(35 69.2 27.0)"/><rect x="98.6" y="43.6" width="2.6" height="1.1" fill="#6a7a62" opacity=".7" transform="rotate(35 98.6 43.6)"/><rect x="64.6" y="25.6" width="1.5" height="1.4" fill="#a86e4c" opacity=".7" transform="rotate(35 64.6 25.6)"/><rect x="100.4" y="42.2" width="2.2" height="1.7" fill="#6a7a62" opacity=".7" transform="rotate(35 100.4 42.2)"/><rect x="71.6" y="29.2" width="1.9" height="1.1" fill="#8e5e46" opacity=".7" transform="rotate(35 71.6 29.2)"/><rect x="49.5" y="25.8" width="1.4" height="2.0" fill="#b8a058" opacity=".7" transform="rotate(35 49.5 25.8)"/><rect x="84.2" y="37.4" width="2.8" height="1.5" fill="#c4bca8" opacity=".7" transform="rotate(35 84.2 37.4)"/><rect x="69.9" y="26.1" width="1.7" height="2.2" fill="#8e5e46" opacity=".7" transform="rotate(35 69.9 26.1)"/><rect x="78.3" y="30.2" width="2.0" height="1.8" fill="#7a6248" opacity=".7" transform="rotate(35 78.3 30.2)"/><rect x="71.8" y="31.2" width="2.6" height="1.2" fill="#a08a58" opacity=".7" transform="rotate(35 71.8 31.2)"/><rect x="97.5" y="40.0" width="2.6" height="1.4" fill="#a08a58" opacity=".7" transform="rotate(35 97.5 40.0)"/><rect x="35.6" y="18.3" width="2.6" height="2.1" fill="#b8b09a" opacity=".7" transform="rotate(35 35.6 18.3)"/><rect x="72.8" y="25.1" width="1.4" height="1.8" fill="#a08a58" opacity=".7" transform="rotate(35 72.8 25.1)"/><rect x="61.3" y="20.0" width="1.6" height="1.5" fill="#8e5e46" opacity=".7" transform="rotate(35 61.3 20.0)"/><rect x="69.0" y="30.9" width="2.5" height="2.1" fill="#7a6248" opacity=".7" transform="rotate(35 69.0 30.9)"/><rect x="80.2" y="26.5" width="2.0" height="1.2" fill="#b8a058" opacity=".7" transform="rotate(35 80.2 26.5)"/><path d="M26 2L34 10L40 18" stroke="#8fb0c8" stroke-width=".7" fill="none" opacity=".7"/><polygon points="50.300,40 53.400,44.400 59.200,41.700 62.400,37.500 61,34.100 55,34" fill="#1d4023"/><polygon points="37.900,112 51.200,96.500 68.400,112 52,132.600 47.700,125.700" fill="#a89d8b"/><polygon points="44,110 52,101 60,110 52,120" fill="#b8ad9c"/><polygon points="52,132.600 68.400,113.700 81.300,124.900 71,141.200" fill="#6a5a44"/><polygon points="60,123 68.400,113.700 75,119.500 66,130" fill="#77684e"/><polygon points="68.400,112 69.200,109.400 90.800,128.800 83,126.600" fill="#2a5a26"/><polygon points="71,143 83,126.600 90.800,130.900 68.100,162 57,162" fill="#b88a38"/><polygon points="68.100,162 90.800,131.800 96.800,136 77.800,162" fill="#c99682"/><polygon points="77.800,162 97.700,136.400 102,140.400 86.200,162" fill="#9aa04a"/><polygon points="86.200,162 102.800,140.900 122,160 120,162" fill="#b05a48"/><polygon points="52,132.600 71,141.200 57,162 44,162 50,140" fill="#4a5a3c"/></g><rect x="-30" y="-10" width="220" height="180" filter="url(#nz)" opacity=".38"/><rect x="-30" y="-10" width="220" height="180" filter="url(#nzl)" opacity=".07"/><clipPath id="cpm10"><polygon points="44.3,27.2 53.4,34.1 50.3,40.0 53.4,44.4 59.2,41.7 62.4,37.5 61.0,34.1 64.9,26.4 79.6,31.9 93.9,42.2 101.4,35.7 108.3,43.1 96.3,55.5 127.5,83.5 90.8,128.8 69.2,109.4 43.1,86.1 28.8,60.3 43.1,43.9"/></clipPath><g clip-path="url(#cpm10)"><rect x="20" y="20" width="115" height="115" fill="#d6e9c2"/></g><text x="46.800" y="24.300" font-size="2.900" fill="#fff" font-weight="700" font-family="Liberation Sans, sans-serif" opacity=".92">Вовківці</text></g><rect x="0.300" y="3.800" width="5.500" height="6.900" fill="#fafafa"/><path d="M2.200 6.400l1.800 1.800m0 -1.800l-1.800 1.800" stroke="#777" stroke-width=".5"/><rect x="67.2" y="9" width="32.7" height="8" fill="#f6f6f6"/><text x="68.8" y="14" font-size="2.800" fill="#444" font-family="Liberation Sans, sans-serif">2023 Кукурудза</text><path d="M94.9 12.300l1.500 1.600l1.500 -1.600" stroke="#666" stroke-width=".5" fill="none"/><rect x="104.3" y="9" width="33" height="8" fill="#f6f6f6"/><text x="105.89999999999999" y="14" font-size="2.800" fill="#444" font-family="Liberation Sans, sans-serif">Чистота борозни</text><path d="M132.3 12.300l1.500 1.600l1.500 -1.600" stroke="#666" stroke-width=".5" fill="none"/><rect x="141.600" y="9" width="8.200" height="8" fill="#f6f6f6"/><rect x="143.800" y="11.200" width="3.800" height="3.800" fill="none" stroke="#777" stroke-width=".5"/><rect x="154.500" y="9" width="4" height="8" fill="#f6f6f6"/><rect x="129.200" y="132.400" width="8.100" height="8.400" fill="#f6f6f6"/><circle cx="133.300" cy="136.600" r="2.200" fill="none" stroke="#666" stroke-width=".5"/><rect x="141.600" y="132.400" width="8.200" height="8.400" fill="#f6f6f6"/><path d="M145.700 134.300v4.600" stroke="#444" stroke-width=".7"/><rect x="144.700" y="134.300" width="2" height="1.800" fill="#444"/><rect x="154.500" y="132.400" width="4" height="8.400" fill="#f6f6f6"/><rect x="2" y="140.300" width="15" height="1.500" fill="#dfe6df" opacity=".75"/><rect x="2" y="142.800" width="6" height="1.500" fill="#fff" opacity=".8"/><rect x="143" y="1.800" width="13" height="1.500" fill="#111" opacity=".8"/><rect x="141" y="87" width="17" height="37" fill="#f8f8f8"/><text x="143.5" y="92.2" font-size="2.500" fill="#555" font-family="Liberation Sans, sans-serif">Редагувати</text><rect x="141" y="94.5" width="17" height=".5" fill="#ddd"/><rect x="155.7" y="98.0" width="1.800" height="6.1" fill="#55c83a"/><text x="154.8" y="101.8" font-size="2.300" fill="#666" text-anchor="end" font-family="Liberation Sans, sans-serif">&gt; 79,9</text><rect x="155.7" y="104.0" width="1.800" height="6.1" fill="#f2e23a"/><text x="154.8" y="107.8" font-size="2.300" fill="#666" text-anchor="end" font-family="Liberation Sans, sans-serif">78,4 - 79,9</text><rect x="155.7" y="110.0" width="1.800" height="6.1" fill="#f0a030"/><text x="154.8" y="113.8" font-size="2.300" fill="#666" text-anchor="end" font-family="Liberation Sans, sans-serif">76,8 - 78,4</text><rect x="155.7" y="116.0" width="1.800" height="6.1" fill="#e04a30"/><text x="154.8" y="119.8" font-size="2.300" fill="#666" text-anchor="end" font-family="Liberation Sans, sans-serif">75,2 - 76,8</text></svg><g font-family="Liberation Sans, sans-serif"><circle cx="9" cy="151.400" r="1.700" fill="none" stroke="#444" stroke-width=".6"/><text x="12.5" y="152.300" font-size="2.600" fill="#858585">Головна сторінка</text><rect x="49.500" y="149.800" width="3.300" height="3.300" rx=".6" fill="#3a86e8"/><text x="54.3" y="152.300" font-size="2.600" fill="#3a86e8">Поле</text><rect x="76.800" y="149.600" width="2.600" height="3.600" fill="none" stroke="#444" stroke-width=".6"/><text x="82" y="152.300" font-size="2.600" fill="#858585">Звіти</text><rect x="103.600" y="149.700" width="3.400" height="3.400" fill="none" stroke="#444" stroke-width=".6"/><path d="M105.300 149.700v3.400M103.600 151.400h3.400" stroke="#444" stroke-width=".4"/><text x="109.3" y="152.300" font-size="2.600" fill="#858585">Карти завдань</text><circle cx="144" cy="151.400" r="1.700" fill="#555"/><circle cx="144" cy="151.400" r=".6" fill="#fff"/><text x="148" y="152.300" font-size="2.600" fill="#858585">Налаштування</text><path d="M180.500 152.500v-2h2.500l1 -1h1.500v3z" fill="#555"/><circle cx="181.500" cy="153" r=".9" fill="#333"/><circle cx="185" cy="153" r="1.100" fill="#333"/><text x="188" y="152.300" font-size="2.600" fill="#858585">Field View Cab</text><rect x="75.500" y="155.800" width="60" height="1.300" rx=".6" fill="#222"/></g></svg>

<div class="a" style="left:1017px;top:154px;width:250px;height:704px;background:#f7f7f7"></div>
<div class="a" style="left:1019px;top:185.3px;width:121px;height:89.5px;border-radius:5px;background:#fafafa;border:1px solid #e3e3e3"></div>
<div class="a" style="left:1053.5px;top:204.60000000000002px;width:50px;height:50px;border-radius:50%;background:#949494;box-shadow:0 1px 3px rgba(0,0,0,.12)"></div>
<svg style="left:0;top:0" width="1" height="1"><circle cx="1078.5" cy="224.1" r="5.8" fill="none" stroke="#fff" stroke-width="1.3"/><path d="M1068.0 234.1A1.5 1.5 0 0 1 1069.5 232.6H1087.5A1.5 1.5 0 0 1 1089.0 234.1C1089.0 239.1 1084.5 241.9 1078.5 241.9S1068.0 239.1 1068.0 234.1Z" fill="none" stroke="#fff" stroke-width="1.3"/></svg>
<div class="a" style="left:1027.5px;top:239.3px;width:94.500px;height:26.500px;border-radius:3.500px;background:rgba(0,0,0,.41)"></div>
<div class="t" id="tl0" style="left:1032px;top:246.3px;font-size:13px;color:#fff;-webkit-text-stroke:.35px #fff">Наталія З...</div>
<svg style="left:1105.5px;top:246.3px" width="13.500" height="13.500" viewBox="0 0 13.500 13.500"><path d="M4.500 0.800A2.300 2.300 0 0 1 9.100 0.800V6A2.300 2.300 0 0 1 4.500 6Z" fill="#fff" opacity=".85"/><path d="M2.300 5.500A4.500 4.500 0 0 0 11.300 5.500M6.800 10.200V13" fill="none" stroke="#fff" stroke-width="1.100" opacity=".85"/><path d="M1 0L12.500 12.500" stroke="#fff" stroke-width="1.100"/></svg>
<div class="a" style="left:1144px;top:185.3px;width:121px;height:89.5px;border-radius:5px;background:#fafafa;border:1px solid #e3e3e3"></div>
<div class="a" style="left:1178.5px;top:204.60000000000002px;width:50px;height:50px;border-radius:50%;background:#949494;box-shadow:0 1px 3px rgba(0,0,0,.12)"></div>
<svg style="left:0;top:0" width="1" height="1"><circle cx="1203.5" cy="224.1" r="5.8" fill="none" stroke="#fff" stroke-width="1.3"/><path d="M1193.0 234.1A1.5 1.5 0 0 1 1194.5 232.6H1212.5A1.5 1.5 0 0 1 1214.0 234.1C1214.0 239.1 1209.5 241.9 1203.5 241.9S1193.0 239.1 1193.0 234.1Z" fill="none" stroke="#fff" stroke-width="1.3"/></svg>
<div class="a" style="left:1152.5px;top:239.3px;width:94.500px;height:26.500px;border-radius:3.500px;background:rgba(0,0,0,.41)"></div>
<div class="t" id="tl1" style="left:1157px;top:246.3px;font-size:13px;color:#fff;-webkit-text-stroke:.35px #fff">Роман Во...</div>
<svg style="left:1230.5px;top:246.3px" width="13.500" height="13.500" viewBox="0 0 13.500 13.500"><path d="M4.500 0.800A2.300 2.300 0 0 1 9.100 0.800V6A2.300 2.300 0 0 1 4.500 6Z" fill="#fff" opacity=".85"/><path d="M2.300 5.500A4.500 4.500 0 0 0 11.300 5.500M6.800 10.200V13" fill="none" stroke="#fff" stroke-width="1.100" opacity=".85"/><path d="M1 0L12.500 12.500" stroke="#fff" stroke-width="1.100"/></svg>
<div class="a" style="left:1019px;top:279.3px;width:121px;height:89.5px;border-radius:5px;background:#fafafa;border:1px solid #e3e3e3"></div>
<div class="a" style="left:1053.5px;top:298.6px;width:50px;height:50px;border-radius:50%;background:#949494;box-shadow:0 1px 3px rgba(0,0,0,.12)"></div>
<svg style="left:0;top:0" width="1" height="1"><circle cx="1078.5" cy="318.1" r="5.8" fill="none" stroke="#fff" stroke-width="1.3"/><path d="M1068.0 328.1A1.5 1.5 0 0 1 1069.5 326.6H1087.5A1.5 1.5 0 0 1 1089.0 328.1C1089.0 333.1 1084.5 335.9 1078.5 335.9S1068.0 333.1 1068.0 328.1Z" fill="none" stroke="#fff" stroke-width="1.3"/></svg>
<div class="a" style="left:1027.5px;top:333.3px;width:94.500px;height:26.500px;border-radius:3.500px;background:rgba(0,0,0,.41)"></div>
<div class="t" id="tl2" style="left:1032px;top:340.3px;font-size:13px;color:#fff;-webkit-text-stroke:.35px #fff">Іван (Не п...</div>
<svg style="left:1105.5px;top:340.3px" width="13.500" height="13.500" viewBox="0 0 13.500 13.500"><path d="M4.500 0.800A2.300 2.300 0 0 1 9.100 0.800V6A2.300 2.300 0 0 1 4.500 6Z" fill="#fff" opacity=".85"/><path d="M2.300 5.500A4.500 4.500 0 0 0 11.300 5.500M6.800 10.200V13" fill="none" stroke="#fff" stroke-width="1.100" opacity=".85"/><path d="M1 0L12.500 12.500" stroke="#fff" stroke-width="1.100"/></svg>
<div class="a" style="left:1144px;top:279.3px;width:121px;height:89.5px;border-radius:5px;background:#fafafa;border:1px solid #e3e3e3"></div>
<div class="a" style="left:1178.5px;top:298.6px;width:50px;height:50px;border-radius:50%;background:#949494;box-shadow:0 1px 3px rgba(0,0,0,.12)"></div>
<svg style="left:0;top:0" width="1" height="1"><circle cx="1203.5" cy="318.1" r="5.8" fill="none" stroke="#fff" stroke-width="1.3"/><path d="M1193.0 328.1A1.5 1.5 0 0 1 1194.5 326.6H1212.5A1.5 1.5 0 0 1 1214.0 328.1C1214.0 333.1 1209.5 335.9 1203.5 335.9S1193.0 333.1 1193.0 328.1Z" fill="none" stroke="#fff" stroke-width="1.3"/></svg>
<div class="a" style="left:1152.5px;top:333.3px;width:94.500px;height:26.500px;border-radius:3.500px;background:rgba(0,0,0,.41)"></div>
<div class="t" id="tl3" style="left:1157px;top:340.3px;font-size:13px;color:#fff;-webkit-text-stroke:.35px #fff">Оксана Р...</div>
<svg style="left:1230.5px;top:340.3px" width="13.500" height="13.500" viewBox="0 0 13.500 13.500"><path d="M4.500 0.800A2.300 2.300 0 0 1 9.100 0.800V6A2.300 2.300 0 0 1 4.500 6Z" fill="#fff" opacity=".85"/><path d="M2.300 5.500A4.500 4.500 0 0 0 11.300 5.500M6.800 10.200V13" fill="none" stroke="#fff" stroke-width="1.100" opacity=".85"/><path d="M1 0L12.500 12.500" stroke="#fff" stroke-width="1.100"/></svg>
<div class="a" style="left:1019px;top:372.5px;width:121px;height:89.5px;border-radius:5px;background:#878788"></div>
<svg style="left:1069.5px;top:408.5px" width="18" height="18" viewBox="0 0 18 18"><path d="M3 13V6A2 2 0 0 1 5 4H13A2 2 0 0 1 15 6V13M0.700 17.300L3 13H15L17.300 17.300Z" fill="none" stroke="#e4e4e4" stroke-width="1"/><circle cx="9" cy="4.500" r="3.600" fill="#878788" stroke="#e4e4e4" stroke-width="1"/><rect x="6.800" y="3.200" width="4.400" height="2.600" rx="1" fill="#e4e4e4"/></svg>
<div class="a" style="left:1027.5px;top:426.5px;width:94.500px;height:26.500px;border-radius:3.500px;background:rgba(0,0,0,.41)"></div>
<div class="t" id="tl4" style="left:1032px;top:433.5px;font-size:13px;color:#fff;-webkit-text-stroke:.35px #fff">Т.Стегній ...</div>
<svg style="left:1105.5px;top:433.5px" width="13.500" height="13.500" viewBox="0 0 13.500 13.500"><path d="M4.500 0.800A2.300 2.300 0 0 1 9.100 0.800V6A2.300 2.300 0 0 1 4.500 6Z" fill="#fff" opacity=".85"/><path d="M2.300 5.500A4.500 4.500 0 0 0 11.300 5.500M6.800 10.200V13" fill="none" stroke="#fff" stroke-width="1.100" opacity=".85"/><path d="M1 0L12.500 12.500" stroke="#fff" stroke-width="1.100"/></svg>
<div class="a" style="left:1144px;top:372.7px;width:121px;height:89.5px;border-radius:5px;background:#fafafa;border:1px solid #e3e3e3"></div>
<div class="a" style="left:1178.5px;top:392.0px;width:50px;height:50px;border-radius:50%;background:#949494;box-shadow:0 1px 3px rgba(0,0,0,.12)"></div>
<svg style="left:0;top:0" width="1" height="1"><circle cx="1203.5" cy="411.5" r="5.8" fill="none" stroke="#fff" stroke-width="1.3"/><path d="M1193.0 421.5A1.5 1.5 0 0 1 1194.5 420.0H1212.5A1.5 1.5 0 0 1 1214.0 421.5C1214.0 426.5 1209.5 429.3 1203.5 429.3S1193.0 426.5 1193.0 421.5Z" fill="none" stroke="#fff" stroke-width="1.3"/></svg>
<div class="a" style="left:1152.5px;top:426.7px;width:94.500px;height:26.500px;border-radius:3.500px;background:rgba(0,0,0,.41)"></div>
<div class="t" id="tl5" style="left:1157px;top:433.7px;font-size:13px;color:#fff;-webkit-text-stroke:.35px #fff">Тетяна Ли...</div>
<svg style="left:1230.5px;top:433.7px" width="13.500" height="13.500" viewBox="0 0 13.500 13.500"><path d="M4.500 0.800A2.300 2.300 0 0 1 9.100 0.800V6A2.300 2.300 0 0 1 4.500 6Z" fill="#fff" opacity=".85"/><path d="M2.300 5.500A4.500 4.500 0 0 0 11.300 5.500M6.800 10.200V13" fill="none" stroke="#fff" stroke-width="1.100" opacity=".85"/><path d="M1 0L12.500 12.500" stroke="#fff" stroke-width="1.100"/></svg>
<div class="a" style="left:1019px;top:466.5px;width:121px;height:89.5px;border-radius:5px;background:#fafafa;border:1px solid #e3e3e3"></div>
<div class="a" style="left:1053.5px;top:485.8px;width:50px;height:50px;border-radius:50%;background:#949494;box-shadow:0 1px 3px rgba(0,0,0,.12)"></div>
<svg style="left:0;top:0" width="1" height="1"><circle cx="1078.5" cy="505.3" r="5.8" fill="none" stroke="#fff" stroke-width="1.3"/><path d="M1068.0 515.3A1.5 1.5 0 0 1 1069.5 513.8H1087.5A1.5 1.5 0 0 1 1089.0 515.3C1089.0 520.3 1084.5 523.1 1078.5 523.1S1068.0 520.3 1068.0 515.3Z" fill="none" stroke="#fff" stroke-width="1.3"/></svg>
<div class="a" style="left:1027.5px;top:520.5px;width:94.500px;height:26.500px;border-radius:3.500px;background:rgba(0,0,0,.41)"></div>
<div class="t" id="tl6" style="left:1032px;top:527.5px;font-size:13px;color:#fff;-webkit-text-stroke:.35px #fff">Тетяна Ст...</div>
<svg style="left:1105.5px;top:527.5px" width="13.500" height="13.500" viewBox="0 0 13.500 13.500"><path d="M4.500 0.800A2.300 2.300 0 0 1 9.100 0.800V6A2.300 2.300 0 0 1 4.500 6Z" fill="#fff" opacity=".85"/><path d="M2.300 5.500A4.500 4.500 0 0 0 11.300 5.500M6.800 10.200V13" fill="none" stroke="#fff" stroke-width="1.100" opacity=".85"/><path d="M1 0L12.500 12.500" stroke="#fff" stroke-width="1.100"/></svg>
<div class="a" style="left:1144px;top:466.5px;width:121px;height:89.5px;border-radius:5px;background:#fafafa;border:1px solid #e3e3e3"></div>
<div class="a" style="left:1178.5px;top:485.8px;width:50px;height:50px;border-radius:50%;background:#949494;box-shadow:0 1px 3px rgba(0,0,0,.12)"></div>
<svg style="left:0;top:0" width="1" height="1"><circle cx="1203.5" cy="505.3" r="5.8" fill="none" stroke="#fff" stroke-width="1.3"/><path d="M1193.0 515.3A1.5 1.5 0 0 1 1194.5 513.8H1212.5A1.5 1.5 0 0 1 1214.0 515.3C1214.0 520.3 1209.5 523.1 1203.5 523.1S1193.0 520.3 1193.0 515.3Z" fill="none" stroke="#fff" stroke-width="1.3"/></svg>
<div class="a" style="left:1152.5px;top:520.5px;width:94.500px;height:26.500px;border-radius:3.500px;background:rgba(0,0,0,.41)"></div>
<div class="t" id="tl7" style="left:1157px;top:527.5px;font-size:13px;color:#fff;-webkit-text-stroke:.35px #fff">Наталія К...</div>
<svg style="left:1230.5px;top:527.5px" width="13.500" height="13.500" viewBox="0 0 13.500 13.500"><path d="M4.500 0.800A2.300 2.300 0 0 1 9.100 0.800V6A2.300 2.300 0 0 1 4.500 6Z" fill="#fff" opacity=".85"/><path d="M2.300 5.500A4.500 4.500 0 0 0 11.300 5.500M6.800 10.200V13" fill="none" stroke="#fff" stroke-width="1.100" opacity=".85"/><path d="M1 0L12.500 12.500" stroke="#fff" stroke-width="1.100"/></svg>
<div class="a" style="left:1082px;top:560.5px;width:121px;height:89.5px;border-radius:5px;background:#fafafa;border:1px solid #e3e3e3"></div>
<div class="a" style="left:1116.5px;top:579.8px;width:50px;height:50px;border-radius:50%;background:#949494;box-shadow:0 1px 3px rgba(0,0,0,.12)"></div>
<svg style="left:0;top:0" width="1" height="1"><circle cx="1141.5" cy="599.3" r="5.8" fill="none" stroke="#fff" stroke-width="1.3"/><path d="M1131.0 609.3A1.5 1.5 0 0 1 1132.5 607.8H1150.5A1.5 1.5 0 0 1 1152.0 609.3C1152.0 614.3 1147.5 617.1 1141.5 617.1S1131.0 614.3 1131.0 609.3Z" fill="none" stroke="#fff" stroke-width="1.3"/></svg>
<div class="a" style="left:1090.5px;top:614.5px;width:94.500px;height:26.500px;border-radius:3.500px;background:rgba(0,0,0,.41)"></div>
<div class="t" id="tl8" style="left:1095px;top:621.5px;font-size:13px;color:#fff;-webkit-text-stroke:.35px #fff">Богдан Ка...</div>
<svg style="left:1168.5px;top:621.5px" width="13.500" height="13.500" viewBox="0 0 13.500 13.500"><path d="M4.500 0.800A2.300 2.300 0 0 1 9.100 0.800V6A2.300 2.300 0 0 1 4.500 6Z" fill="#fff" opacity=".85"/><path d="M2.300 5.500A4.500 4.500 0 0 0 11.300 5.500M6.800 10.200V13" fill="none" stroke="#fff" stroke-width="1.100" opacity=".85"/><path d="M1 0L12.500 12.500" stroke="#fff" stroke-width="1.100"/></svg>
<div class="a" style="left:1017px;top:652px;width:250px;height:35.500px;background:#f0f0f0"></div>
<svg style="left:1105px;top:664px" width="8" height="13" viewBox="0 0 8 13"><path d="M7 1L1.500 6.500L7 12" fill="none" stroke="#333" stroke-width="1.300"/></svg>
<svg style="left:1170px;top:664px" width="8" height="13" viewBox="0 0 8 13"><path d="M1 1L6.500 6.500L1 12" fill="none" stroke="#333" stroke-width="1.300"/></svg>
<div class="t" id="pager" style="left:1127px;top:663px;font-size:15px;color:#333">2/12</div>
<div class="a" style="left:1019.500px;top:692px;width:245px;height:135px;border-radius:5px;background:#fafafa;border:1px solid #e3e3e3"></div>
<div class="a" style="left:1108px;top:725.500px;width:66.500px;height:66.500px;border-radius:50%;background:#949494;box-shadow:0 1px 3px rgba(0,0,0,.12)"></div>
<svg style="left:0;top:0" width="1" height="1"><circle cx="1141.3" cy="751.7" r="7.7" fill="none" stroke="#fff" stroke-width="1.6"/><path d="M1127.3 765.0A2.0 2.0 0 0 1 1129.3 763.0H1153.3A2.0 2.0 0 0 1 1155.3 765.0C1155.3 771.6 1149.3 775.4 1141.3 775.4S1127.3 771.6 1127.3 765.0Z" fill="none" stroke="#fff" stroke-width="1.6"/></svg>
<div class="a" style="left:1028.500px;top:792px;width:114.500px;height:25.500px;border-radius:3.500px;background:rgba(0,0,0,.41)"></div>
<div class="t" id="tlbig" style="left:1032.500px;top:798.500px;font-size:13px;color:#fff;-webkit-text-stroke:.35px #fff">Інна Любченко</div>
<svg style="left:1126px;top:798px" width="13.500" height="13.500" viewBox="0 0 13.500 13.500"><path d="M4.500 0.800A2.300 2.300 0 0 1 9.100 0.800V6A2.300 2.300 0 0 1 4.500 6Z" fill="#fff" opacity=".85"/><path d="M2.300 5.500A4.500 4.500 0 0 0 11.300 5.500M6.800 10.200V13" fill="none" stroke="#fff" stroke-width="1.100" opacity=".85"/><path d="M1 0L12.500 12.500" stroke="#fff" stroke-width="1.100"/></svg>

<div class="a" id="rpanel"></div>
<div class="t" id="rp_title" style="left:1288.5px;top:182px;font-size:16px;font-weight:700;color:#242424">Учасники</div>
<svg style="left:1542px;top:182px" width="13" height="13" viewBox="0 0 13 13"><path d="M0.700 0.700L12.300 12.300M12.300 0.700L0.700 12.300" stroke="#333" stroke-width="1.300"/></svg>
<div class="a" style="left:1268px;top:218px;width:318px;height:1px;background:#e6e6e6"></div>
<div class="a" style="left:1288px;top:215px;width:277px;height:36px;border-radius:4px;background:#fff;border:1px solid #d6d6d6"></div>
<svg style="left:1333px;top:226px" width="17" height="16" viewBox="0 0 17 16"><path d="M6.500 2H4A2.500 2.500 0 0 0 1.500 4.500V12A2.500 2.500 0 0 0 4 14.500H11.500A2.500 2.500 0 0 0 14 12V11" fill="none" stroke="#333" stroke-width="1.300" stroke-linecap="round"/><path d="M10 1L15.500 5.700L10 10.400V7.700C7.500 7.700 6 8.500 5 10.500C5 7 6.800 4 10 3.700Z" fill="none" stroke="#333" stroke-width="1.200" stroke-linejoin="round"/></svg>
<div class="t" id="rp_btn" style="left:1357px;top:228px;font-size:14px;font-weight:700;color:#242424">Розширити запрошення</div>
<svg style="left:1277px;top:273px" width="10" height="7" viewBox="0 0 10 7"><path d="M1 1.200L5 5.200L9 1.200" fill="none" stroke="#424242" stroke-width="1.200"/></svg>
<div class="t" id="rp_sec" style="left:1296.5px;top:270.5px;font-size:12px;color:#424242">На цій нараді (104)</div>
<div class="a" style="left:1288.500px;top:304.5px;width:33px;height:33px;border-radius:50%;background:#9c9c9c"></div>
<svg style="left:1297px;top:312px" width="16" height="18" viewBox="0 0 16 18"><circle cx="8" cy="4.800" r="3.300" fill="none" stroke="#fff" stroke-width="1.300"/><path d="M1.200 11.700A1.300 1.300 0 0 1 2.500 10.400H13.500A1.300 1.300 0 0 1 14.800 11.700C14.800 15 12 16.800 8 16.800S1.200 15 1.200 11.700Z" fill="none" stroke="#fff" stroke-width="1.300"/></svg>
<div class="t" id="rp_n0" style="left:1335px;top:313.5px;font-size:15px;color:#2b2b2b">Інна Любченко</div>
<svg style="left:1533.700px;top:309.5px" width="16" height="18.500" viewBox="0 0 19 22"><rect x="6.300" y="1.500" width="6.400" height="11.500" rx="3.200" fill="none" stroke="#333" stroke-width="1.300"/><path d="M3.500 9.500V10A6 6 0 0 0 15.500 10V9.500M9.500 16V20" fill="none" stroke="#333" stroke-width="1.300" stroke-linecap="round"/><path d="M2 1L17 20.500" stroke="#f5f5f5" stroke-width="3"/><path d="M2 1L17 20.500" stroke="#333" stroke-width="1.300" stroke-linecap="round"/></svg>
<div class="a" style="left:1288.500px;top:355.5px;width:33px;height:33px;border-radius:50%;background:#9c9c9c"></div>
<svg style="left:1297px;top:363px" width="16" height="18" viewBox="0 0 16 18"><circle cx="8" cy="4.800" r="3.300" fill="none" stroke="#fff" stroke-width="1.300"/><path d="M1.200 11.700A1.300 1.300 0 0 1 2.500 10.400H13.500A1.300 1.300 0 0 1 14.800 11.700C14.800 15 12 16.800 8 16.800S1.200 15 1.200 11.700Z" fill="none" stroke="#fff" stroke-width="1.300"/></svg>
<div class="t" id="rp_n1" style="left:1335px;top:364.5px;font-size:15px;color:#2b2b2b">Анатолій (Не перевірено)</div>
<svg style="left:1533.700px;top:360.5px" width="16" height="18.500" viewBox="0 0 19 22"><rect x="6.300" y="1.500" width="6.400" height="11.500" rx="3.200" fill="none" stroke="#333" stroke-width="1.300"/><path d="M3.500 9.500V10A6 6 0 0 0 15.500 10V9.500M9.500 16V20" fill="none" stroke="#333" stroke-width="1.300" stroke-linecap="round"/><path d="M2 1L17 20.500" stroke="#f5f5f5" stroke-width="3"/><path d="M2 1L17 20.500" stroke="#333" stroke-width="1.300" stroke-linecap="round"/></svg>
<div class="a" style="left:1288.500px;top:406.0px;width:33px;height:33px;border-radius:50%;background:#9c9c9c"></div>
<svg style="left:1297px;top:413.5px" width="16" height="18" viewBox="0 0 16 18"><circle cx="8" cy="4.800" r="3.300" fill="none" stroke="#fff" stroke-width="1.300"/><path d="M1.200 11.700A1.300 1.300 0 0 1 2.500 10.400H13.500A1.300 1.300 0 0 1 14.800 11.700C14.800 15 12 16.800 8 16.800S1.200 15 1.200 11.700Z" fill="none" stroke="#fff" stroke-width="1.300"/></svg>
<div class="t" id="rp_n2" style="left:1335px;top:415.0px;font-size:15px;color:#2b2b2b">Андрій (Не перевірено)</div>
<svg style="left:1533.700px;top:411.0px" width="16" height="18.500" viewBox="0 0 19 22"><rect x="6.300" y="1.500" width="6.400" height="11.500" rx="3.200" fill="none" stroke="#333" stroke-width="1.300"/><path d="M3.500 9.500V10A6 6 0 0 0 15.500 10V9.500M9.500 16V20" fill="none" stroke="#333" stroke-width="1.300" stroke-linecap="round"/><path d="M2 1L17 20.500" stroke="#f5f5f5" stroke-width="3"/><path d="M2 1L17 20.500" stroke="#333" stroke-width="1.300" stroke-linecap="round"/></svg>
<div class="a" style="left:1288.500px;top:456.0px;width:33px;height:33px;border-radius:50%;background:#9c9c9c"></div>
<svg style="left:1297px;top:463.5px" width="16" height="18" viewBox="0 0 16 18"><circle cx="8" cy="4.800" r="3.300" fill="none" stroke="#fff" stroke-width="1.300"/><path d="M1.200 11.700A1.300 1.300 0 0 1 2.500 10.400H13.500A1.300 1.300 0 0 1 14.800 11.700C14.800 15 12 16.800 8 16.800S1.200 15 1.200 11.700Z" fill="none" stroke="#fff" stroke-width="1.300"/></svg>
<div class="t" id="rp_n3" style="left:1335px;top:465.0px;font-size:15px;color:#2b2b2b">Андрій (Не перевірено)</div>
<svg style="left:1533.700px;top:461.0px" width="16" height="18.500" viewBox="0 0 19 22"><rect x="6.300" y="1.500" width="6.400" height="11.500" rx="3.200" fill="none" stroke="#333" stroke-width="1.300"/><path d="M3.500 9.500V10A6 6 0 0 0 15.500 10V9.500M9.500 16V20" fill="none" stroke="#333" stroke-width="1.300" stroke-linecap="round"/><path d="M2 1L17 20.500" stroke="#f5f5f5" stroke-width="3"/><path d="M2 1L17 20.500" stroke="#333" stroke-width="1.300" stroke-linecap="round"/></svg>
<div class="a" style="left:1288.500px;top:506.0px;width:33px;height:33px;border-radius:50%;background:#9c9c9c"></div>
<svg style="left:1297px;top:513.5px" width="16" height="18" viewBox="0 0 16 18"><circle cx="8" cy="4.800" r="3.300" fill="none" stroke="#fff" stroke-width="1.300"/><path d="M1.200 11.700A1.300 1.300 0 0 1 2.500 10.400H13.500A1.300 1.300 0 0 1 14.800 11.700C14.800 15 12 16.800 8 16.800S1.200 15 1.200 11.700Z" fill="none" stroke="#fff" stroke-width="1.300"/></svg>
<div class="t" id="rp_n4" style="left:1335px;top:515.0px;font-size:15px;color:#2b2b2b">Андрій Лі··· (Не перевірено)</div>
<svg style="left:1533.700px;top:511.0px" width="16" height="18.500" viewBox="0 0 19 22"><rect x="6.300" y="1.500" width="6.400" height="11.500" rx="3.200" fill="none" stroke="#333" stroke-width="1.300"/><path d="M3.500 9.500V10A6 6 0 0 0 15.500 10V9.500M9.500 16V20" fill="none" stroke="#333" stroke-width="1.300" stroke-linecap="round"/><path d="M2 1L17 20.500" stroke="#f5f5f5" stroke-width="3"/><path d="M2 1L17 20.500" stroke="#333" stroke-width="1.300" stroke-linecap="round"/></svg>
<div class="a" style="left:1288.500px;top:555.5px;width:33px;height:33px;border-radius:50%;background:#9c9c9c"></div>
<svg style="left:1297px;top:563px" width="16" height="18" viewBox="0 0 16 18"><circle cx="8" cy="4.800" r="3.300" fill="none" stroke="#fff" stroke-width="1.300"/><path d="M1.200 11.700A1.300 1.300 0 0 1 2.500 10.400H13.500A1.300 1.300 0 0 1 14.800 11.700C14.800 15 12 16.800 8 16.800S1.200 15 1.200 11.700Z" fill="none" stroke="#fff" stroke-width="1.300"/></svg>
<div class="t" id="rp_n5" style="left:1335px;top:564.5px;font-size:15px;color:#2b2b2b">Андрій Шевчук</div>
<svg style="left:1533.700px;top:560.5px" width="16" height="18.500" viewBox="0 0 19 22"><rect x="6.300" y="1.500" width="6.400" height="11.500" rx="3.200" fill="none" stroke="#333" stroke-width="1.300"/><path d="M3.500 9.500V10A6 6 0 0 0 15.500 10V9.500M9.500 16V20" fill="none" stroke="#333" stroke-width="1.300" stroke-linecap="round"/><path d="M2 1L17 20.500" stroke="#f5f5f5" stroke-width="3"/><path d="M2 1L17 20.500" stroke="#333" stroke-width="1.300" stroke-linecap="round"/></svg>
<div class="a" style="left:1288.500px;top:605.0px;width:33px;height:33px;border-radius:50%;background:#9c9c9c"></div>
<svg style="left:1297px;top:612.5px" width="16" height="18" viewBox="0 0 16 18"><circle cx="8" cy="4.800" r="3.300" fill="none" stroke="#fff" stroke-width="1.300"/><path d="M1.200 11.700A1.300 1.300 0 0 1 2.500 10.400H13.500A1.300 1.300 0 0 1 14.800 11.700C14.800 15 12 16.800 8 16.800S1.200 15 1.200 11.700Z" fill="none" stroke="#fff" stroke-width="1.300"/></svg>
<div class="t" id="rp_n6" style="left:1335px;top:614.0px;font-size:15px;color:#2b2b2b">Антон Главацький</div>
<svg style="left:1533.700px;top:610.0px" width="16" height="18.500" viewBox="0 0 19 22"><rect x="6.300" y="1.500" width="6.400" height="11.500" rx="3.200" fill="none" stroke="#333" stroke-width="1.300"/><path d="M3.500 9.500V10A6 6 0 0 0 15.500 10V9.500M9.500 16V20" fill="none" stroke="#333" stroke-width="1.300" stroke-linecap="round"/><path d="M2 1L17 20.500" stroke="#f5f5f5" stroke-width="3"/><path d="M2 1L17 20.500" stroke="#333" stroke-width="1.300" stroke-linecap="round"/></svg>
<div class="a" style="left:1288.500px;top:655.5px;width:33px;height:33px;border-radius:50%;background:#9c9c9c"></div>
<svg style="left:1297px;top:663px" width="16" height="18" viewBox="0 0 16 18"><circle cx="8" cy="4.800" r="3.300" fill="none" stroke="#fff" stroke-width="1.300"/><path d="M1.200 11.700A1.300 1.300 0 0 1 2.500 10.400H13.500A1.300 1.300 0 0 1 14.800 11.700C14.800 15 12 16.800 8 16.800S1.200 15 1.200 11.700Z" fill="none" stroke="#fff" stroke-width="1.300"/></svg>
<div class="t" id="rp_n7" style="left:1335px;top:664.5px;font-size:15px;color:#2b2b2b">Балабон ··· (Не перевірено)</div>
<svg style="left:1533.700px;top:660.5px" width="16" height="18.500" viewBox="0 0 19 22"><rect x="6.300" y="1.500" width="6.400" height="11.500" rx="3.200" fill="none" stroke="#333" stroke-width="1.300"/><path d="M3.500 9.500V10A6 6 0 0 0 15.500 10V9.500M9.500 16V20" fill="none" stroke="#333" stroke-width="1.300" stroke-linecap="round"/><path d="M2 1L17 20.500" stroke="#f5f5f5" stroke-width="3"/><path d="M2 1L17 20.500" stroke="#333" stroke-width="1.300" stroke-linecap="round"/></svg>
<div class="a" style="left:1288.500px;top:705.0px;width:33px;height:33px;border-radius:50%;background:#9c9c9c"></div>
<svg style="left:1297px;top:712.5px" width="16" height="18" viewBox="0 0 16 18"><circle cx="8" cy="4.800" r="3.300" fill="none" stroke="#fff" stroke-width="1.300"/><path d="M1.200 11.700A1.300 1.300 0 0 1 2.500 10.400H13.500A1.300 1.300 0 0 1 14.800 11.700C14.800 15 12 16.800 8 16.800S1.200 15 1.200 11.700Z" fill="none" stroke="#fff" stroke-width="1.300"/></svg>
<div class="t" id="rp_n8" style="left:1335px;top:714.0px;font-size:15px;color:#2b2b2b">Богдан Карпенко</div>
<svg style="left:1533.700px;top:710.0px" width="16" height="18.500" viewBox="0 0 19 22"><rect x="6.300" y="1.500" width="6.400" height="11.500" rx="3.200" fill="none" stroke="#333" stroke-width="1.300"/><path d="M3.500 9.500V10A6 6 0 0 0 15.500 10V9.500M9.500 16V20" fill="none" stroke="#333" stroke-width="1.300" stroke-linecap="round"/><path d="M2 1L17 20.500" stroke="#f5f5f5" stroke-width="3"/><path d="M2 1L17 20.500" stroke="#333" stroke-width="1.300" stroke-linecap="round"/></svg>
<div class="a" style="left:1288.500px;top:755.0px;width:33px;height:33px;border-radius:50%;background:#9c9c9c"></div>
<svg style="left:1297px;top:762.5px" width="16" height="18" viewBox="0 0 16 18"><circle cx="8" cy="4.800" r="3.300" fill="none" stroke="#fff" stroke-width="1.300"/><path d="M1.200 11.700A1.300 1.300 0 0 1 2.500 10.400H13.500A1.300 1.300 0 0 1 14.800 11.700C14.800 15 12 16.800 8 16.800S1.200 15 1.200 11.700Z" fill="none" stroke="#fff" stroke-width="1.300"/></svg>
<div class="t" id="rp_n9" style="left:1335px;top:764.0px;font-size:15px;color:#2b2b2b">Бригадиренко Віктор Вас...</div>
<svg style="left:1533.700px;top:760.0px" width="16" height="18.500" viewBox="0 0 19 22"><rect x="6.300" y="1.500" width="6.400" height="11.500" rx="3.200" fill="none" stroke="#333" stroke-width="1.300"/><path d="M3.500 9.500V10A6 6 0 0 0 15.500 10V9.500M9.500 16V20" fill="none" stroke="#333" stroke-width="1.300" stroke-linecap="round"/><path d="M2 1L17 20.500" stroke="#f5f5f5" stroke-width="3"/><path d="M2 1L17 20.500" stroke="#333" stroke-width="1.300" stroke-linecap="round"/></svg>
<div class="a" style="left:1288.500px;top:805.5px;width:33px;height:33px;border-radius:50%;background:#9c9c9c"></div>
<svg style="left:1297px;top:813px" width="16" height="18" viewBox="0 0 16 18"><circle cx="8" cy="4.800" r="3.300" fill="none" stroke="#fff" stroke-width="1.300"/><path d="M1.200 11.700A1.300 1.300 0 0 1 2.500 10.400H13.500A1.300 1.300 0 0 1 14.800 11.700C14.800 15 12 16.800 8 16.800S1.200 15 1.200 11.700Z" fill="none" stroke="#fff" stroke-width="1.300"/></svg>
<div class="t" id="rp_n10" style="left:1335px;top:814.5px;font-size:15px;color:#2b2b2b">Валентин··· (Не перевірено)</div>
<svg style="left:1533.700px;top:810.5px" width="16" height="18.500" viewBox="0 0 19 22"><rect x="6.300" y="1.500" width="6.400" height="11.500" rx="3.200" fill="none" stroke="#333" stroke-width="1.300"/><path d="M3.500 9.500V10A6 6 0 0 0 15.500 10V9.500M9.500 16V20" fill="none" stroke="#333" stroke-width="1.300" stroke-linecap="round"/><path d="M2 1L17 20.500" stroke="#f5f5f5" stroke-width="3"/><path d="M2 1L17 20.500" stroke="#333" stroke-width="1.300" stroke-linecap="round"/></svg>
<div class="a" style="left:1288.500px;top:855.0px;width:33px;height:33px;border-radius:50%;background:#9c9c9c"></div>
<svg style="left:1297px;top:862.5px" width="16" height="18" viewBox="0 0 16 18"><circle cx="8" cy="4.800" r="3.300" fill="none" stroke="#fff" stroke-width="1.300"/><path d="M1.200 11.700A1.300 1.300 0 0 1 2.500 10.400H13.500A1.300 1.300 0 0 1 14.800 11.700C14.800 15 12 16.800 8 16.800S1.200 15 1.200 11.700Z" fill="none" stroke="#fff" stroke-width="1.300"/></svg>

<div class="a" style="left:633.500px;top:164.500px;width:333px;height:135px;border-radius:9px;background:#fcfcfc;box-shadow:0 2px 8px rgba(0,0,0,.18),0 0 2px rgba(0,0,0,.12)"></div>
<svg style="left:648.500px;top:179.500px" width="17" height="17" viewBox="0 0 17 17"><circle cx="8.500" cy="8.500" r="7.600" fill="none" stroke="#222" stroke-width="1.300"/><circle cx="8.500" cy="8.500" r="4.600" fill="#222"/></svg>
<div class="t" id="pp_t" style="left:675.500px;top:181.500px;font-size:13px;color:#333">Записування й транскрибування</div>
<svg style="left:939px;top:181.500px" width="13" height="13" viewBox="0 0 13 13"><path d="M0.700 0.700L12.300 12.300M12.300 0.700L0.700 12.300" stroke="#444" stroke-width="1.200"/></svg>
<div class="t" id="pp_l1" style="left:647px;top:211px;font-size:15px;color:#666">Розпочав користувач Шептицька Марина.</div>
<div class="t" id="pp_l2" style="left:647px;top:232px;font-size:15px;color:#666">Відвідуючи цю нараду, ви погоджуєтеся на</div>
<div class="t" id="pp_l3" style="left:647px;top:253px;font-size:15px;color:#666">запис і транскрибування ваших слів.</div>
<div class="t" id="pp_l4" style="left:647px;top:273px;font-size:15px;color:#2222ee;text-decoration:underline">Політика конфіденційності</div>

<div class="a" style="left:11px;top:821px;width:331.500px;height:26px;border-radius:4px;background:#939393"></div>
<div class="t" id="rc_t" style="left:14.500px;top:827.500px;font-size:13px;color:#fff;-webkit-text-stroke:.3px #fff">Кімната переговорів 126 (через рецепцію)</div>
<svg style="left:277px;top:826.500px" width="9" height="14" viewBox="0 0 9 14"><rect x="2.500" y="0.500" width="4" height="8" rx="2" fill="#f0f0f0"/><path d="M0.700 6.500A3.800 3.800 0 0 0 8.300 6.500M4.500 10.500V13" fill="none" stroke="#f0f0f0" stroke-width="1"/></svg>
<div class="a" style="left:295px;top:833.500px;width:11px;height:1px;background:#b4b4b4"></div>
<svg style="left:319px;top:827.500px" width="12" height="12" viewBox="0 0 12 12"><path d="M6 0V12M0 6H12" stroke="#fff" stroke-width="1.100"/></svg>

<!-- ================= TASKBAR ================= -->
<div class="a" id="taskbar"></div>
<div class="a" style="left:0;top:858px;width:1600px;height:42px;background:linear-gradient(90deg,#e6e0d9 0px,#e6e0d9 50px,#dfe3ec 350px,#e6e0e6 450px,#eee0df 540px,#e4e3e9 620px,#e3e5ec 800px,#e9ebf1 1100px,#eceef3 1600px)"></div>
<div class="a" style="left:558px;top:858px;width:51px;height:42px;background:#f6f4f5"></div>
<!-- start -->
<svg style="left:16px;top:871px" width="18" height="18" viewBox="0 0 18 18"><path d="M0 2.500L7.300 1.500V8.500H0ZM8.300 1.300L18 0V8.500H8.300ZM0 9.500H7.300V16.500L0 15.500ZM8.300 9.500H18V18L8.300 16.700Z" fill="#111"/></svg>
<!-- search -->
<div class="a" style="left:50px;top:858px;width:300px;height:42px;background:#fff;border:1px solid #c9c9c9;border-bottom:none"></div>
<svg style="left:62px;top:870px" width="19" height="19" viewBox="0 0 19 19"><circle cx="11.500" cy="7" r="5.500" fill="none" stroke="#222" stroke-width="1.600"/><path d="M7.500 11L0.800 17.700" stroke="#222" stroke-width="1.800"/></svg>
<div class="t" id="tk_search" style="left:92px;top:871.5px;font-size:17px;color:#333">Пошук</div>
<!-- search highlight picture -->
<svg style="left:270px;top:868px" width="79.500" height="32" viewBox="0 0 79 41" preserveAspectRatio="none"><path d="M24 11H30V9H35V12H60V8H68V5H79V41H0C2 33 3 26 6 22C9 17 14 16 18 14Z" fill="#6a5a9e"/><path d="M24 11H30V9H35V12H44L24 24L6 22C9 17 14 16 18 14Z" fill="#4b3f8a"/><path d="M40 11L52 9L68 10L72 15L79 17V41H4C6 34 10 27 18 24C26 20 34 14 40 11Z" fill="#e0916a"/><path d="M40 11L52 9L68 10L66 13L44 14Z" fill="#f2b88e"/><path d="M10 30L20 26L28 30L36 27L44 33L52 30L60 36L70 33L79 37V41H2Z" fill="#8a5a86"/><path d="M48 16L58 14L62 20L56 26L50 22Z" fill="#f0a678"/><path d="M0 41C2 35 4 31 8 27L14 32L8 41Z" fill="#5a4a94"/></svg>
<!-- task view -->
<svg style="left:366px;top:871px" width="18" height="16" viewBox="0 0 18 16"><rect x="2.500" y="3" width="9" height="10" fill="none" stroke="#222" stroke-width="1.200"/><path d="M0 1H13.500M0 15H13.500M16.500 0V6M16.500 10V16" stroke="#222" stroke-width="1.200"/><rect x="15.600" y="7" width="1.800" height="2" fill="#222"/></svg>
<!-- copilot -->
<svg style="left:416px;top:867px" width="25" height="24" viewBox="0 0 25 24"><defs><linearGradient id="cpa" x1="0" y1="0" x2="0" y2="1"><stop offset="0" stop-color="#2f7be6"/><stop offset=".45" stop-color="#25b3a0"/><stop offset=".75" stop-color="#9ad34a"/><stop offset="1" stop-color="#f6c02e"/></linearGradient><linearGradient id="cpb" x1="0" y1="0" x2="0" y2="1"><stop offset="0" stop-color="#7a55e6"/><stop offset=".45" stop-color="#d957b4"/><stop offset="1" stop-color="#f58a3c"/></linearGradient></defs><path d="M8.500 1H14.500C16 1 16.800 2 16.300 3.500L12 19.500C11.400 21.800 10 23 7.800 23H4C1.800 23 0.500 21.300 1.100 19.200L4.600 4.600C5.200 2.200 6.500 1 8.500 1Z" fill="url(#cpa)"/><path d="M17 1H21C23.200 1 24.500 2.700 23.900 4.800L20.400 19.400C19.800 21.800 18.500 23 16.500 23H10.500C9 23 8.200 22 8.700 20.500L13 4.500C13.600 2.200 14.800 1 17 1Z" fill="url(#cpb)"/><path d="M14.600 7.500L11.900 17.500H10.400L13.100 7.500Z" fill="#f4eef2"/></svg>
<!-- paint -->
<svg style="left:467px;top:866px" width="27" height="27" viewBox="0 0 27 27"><path d="M11 8C16 6 22 8 22 13C22 16 19 16 17 16.500C15 17 16 20 14 21.500C11 23.500 3 22 2 16C1.300 12 6 9.500 11 8Z" fill="#c4d6e8" stroke="#8fa8c4" stroke-width=".8"/><circle cx="7" cy="14" r="1.700" fill="#e0483c"/><circle cx="10.500" cy="11" r="1.700" fill="#f2c230"/><circle cx="15" cy="10.500" r="1.700" fill="#3c9c4a"/><circle cx="8" cy="18" r="1.600" fill="#2f6fd0"/><path d="M14 22L22 5L24 6L16.500 23Z" fill="#d08a3c"/><path d="M22 5L24.500 0.500L26 1.500L24 6Z" fill="#e9c890"/></svg>
<!-- explorer -->
<svg style="left:519px;top:868px" width="24" height="21" viewBox="0 0 24 21"><path d="M0 2A1 1 0 0 1 1 1H8L10 3.500H23A1 1 0 0 1 24 4.500V19H0Z" fill="#f0b429"/><path d="M0 6H24V19A1 1 0 0 1 23 20H1A1 1 0 0 1 0 19Z" fill="#fbd45a"/><path d="M4 13H20V20H4Z" fill="#2a8ae0"/><path d="M8 16H16V20H8Z" fill="#fbd45a"/></svg>
<!-- chrome -->
<svg style="left:571px;top:866px" width="28" height="28" viewBox="0 0 28 28"><circle cx="12.500" cy="12.500" r="12" fill="#e8443a"/><path d="M12.500 12.500L2.100 6.500A12 12 0 0 0 9 24Z" fill="#35a853"/><path d="M12.500 12.500L9 24A12 12 0 0 0 24.300 10.500Z" fill="#fbc116"/><path d="M12.500 12.500H24.300A12 12 0 0 0 2.100 6.500Z" fill="#e8443a"/><circle cx="12.500" cy="12.500" r="5.600" fill="#fff"/><circle cx="12.500" cy="12.500" r="4.400" fill="#4a8af4"/><circle cx="20" cy="20" r="7.200" fill="#f7efec"/><circle cx="20" cy="17.500" r="3.800" fill="#e6bf8a"/><circle cx="20" cy="18.500" r="2.600" fill="#f4cdb9"/><path d="M14.500 25C15 22 17 21 20 21S25 22 25.500 25Z" fill="#e27d93"/></svg>
<!-- edge -->
<svg style="left:622px;top:866px" width="27" height="27" viewBox="0 0 27 27"><defs><linearGradient id="edg" x1="0" y1="0" x2="1" y2="1"><stop offset="0" stop-color="#35c3a8"/><stop offset=".5" stop-color="#1f9ad6"/><stop offset="1" stop-color="#0d57b5"/></linearGradient></defs><circle cx="13.500" cy="13.500" r="12.500" fill="url(#edg)"/><path d="M13.500 1A12.500 12.500 0 0 1 26 12C26 16 23 18 20 18C17 18 16 16.500 17 15C18 13 16.500 9.500 12.500 9.500C8 9.500 4 13 3 17A12.500 12.500 0 0 1 13.500 1Z" fill="#57d36a" opacity=".75"/><path d="M9 16C9 20.500 12.500 24 17.500 24.500C19.500 24.500 21.500 24 23 23A12.500 12.500 0 0 1 3 19C3.500 14 7 11 11 11.500C9.500 12.500 9 14 9 16Z" fill="#0b4fa6"/></svg>
<!-- word -->
<svg style="left:674px;top:866px" width="25" height="26" viewBox="0 0 25 26"><rect x="1" y="1" width="22" height="22" fill="#fff" stroke="#2a5cad" stroke-width="1.400"/><path d="M1 19L23 15V23H1Z" fill="#8fb2e6"/><path d="M1 21.500L23 18V23H1Z" fill="#3d79d1"/><text x="12" y="15" font-size="15" font-weight="700" fill="#1f4f9e" text-anchor="middle" font-family="Liberation Sans, sans-serif">W</text><path d="M14 19L22 20V24L14 22Z" fill="#e9eef7"/></svg>
<!-- running underlines -->
<div class="a" style="left:511px;top:897px;width:34px;height:3px;background:#0a6ac8"></div><div class="a" style="left:545px;top:897px;width:8px;height:3px;background:#6aa6e0"></div>
<div class="a" style="left:558px;top:897px;width:51px;height:3px;background:#0a6ac8"></div>
<div class="a" style="left:614px;top:897px;width:43px;height:3px;background:#0a6ac8"></div>
<div class="a" style="left:666px;top:897px;width:34px;height:3px;background:#0a6ac8"></div><div class="a" style="left:700px;top:897px;width:8px;height:3px;background:#6aa6e0"></div>
<!-- weather -->
<svg style="left:1222px;top:866px" width="28" height="24" viewBox="0 0 28 24"><path d="M7 22A6 6 0 0 1 6.500 10A8 8 0 0 1 21.500 11A5.500 5.500 0 0 1 21.500 22Z" fill="#8db4ee"/><path d="M7 22A6 6 0 0 1 6.500 10A8 8 0 0 1 14 7C10 10 9 16 13 22Z" fill="#b9d2f5"/><circle cx="20" cy="6" r="5.700" fill="#d92c2c"/><text x="20" y="9" font-size="8" font-weight="700" fill="#fff" text-anchor="middle" font-family="Liberation Sans, sans-serif">1</text></svg>
<div class="t" id="tk_w" style="left:1257px;top:872.5px;font-size:16px;color:#222">-2°C&nbsp; Cloudy</div>
<!-- tray -->
<svg style="left:1366px;top:874px" width="15" height="9" viewBox="0 0 15 9"><path d="M1 8L7.500 1.500L14 8" fill="none" stroke="#222" stroke-width="1.300"/></svg>
<svg style="left:1391px;top:869px" width="13" height="20" viewBox="0 0 13 20"><rect x="3.500" y="0.500" width="6" height="11.500" rx="3" fill="#222"/><path d="M1 9A5.500 5.500 0 0 0 12 9M6.500 14.500V18M3.500 18.500H9.500" fill="none" stroke="#222" stroke-width="1.300"/></svg>
<svg style="left:1415px;top:874px" width="18" height="10" viewBox="0 0 18 10"><rect x="0.600" y="0.600" width="15" height="8.800" fill="none" stroke="#222" stroke-width="1.200"/><rect x="2" y="2" width="4" height="6" fill="#222"/><rect x="16" y="3" width="1.600" height="4" fill="#222"/></svg>
<div class="t" id="tk_lang" style="left:1443px;top:874px;font-size:12px;color:#222">УКР</div>
<div class="t" id="tk_time" style="left:1494px;top:864px;font-size:12.500px;color:#222">12:06</div>
<div class="t" id="tk_date" style="left:1481px;top:883px;font-size:12.500px;color:#222">26.02.2026</div>
<svg style="left:1556px;top:869px" width="28" height="26" viewBox="0 0 28 26"><path d="M1 1H19V14H8L4 18V14H1Z" fill="#222"/><path d="M4 5H16M4 8H16M4 11H12" stroke="#e9ebf1" stroke-width="1"/><circle cx="19.500" cy="18" r="6.500" fill="#d6d6d6" stroke="#555" stroke-width="1"/><text x="19.500" y="22" font-size="10.500" fill="#111" text-anchor="middle" font-family="Liberation Sans, sans-serif">1</text></svg>
<div class="a" style="left:1595px;top:858px;width:1px;height:42px;background:#9a9a9a"></div>

</body>
</html>
